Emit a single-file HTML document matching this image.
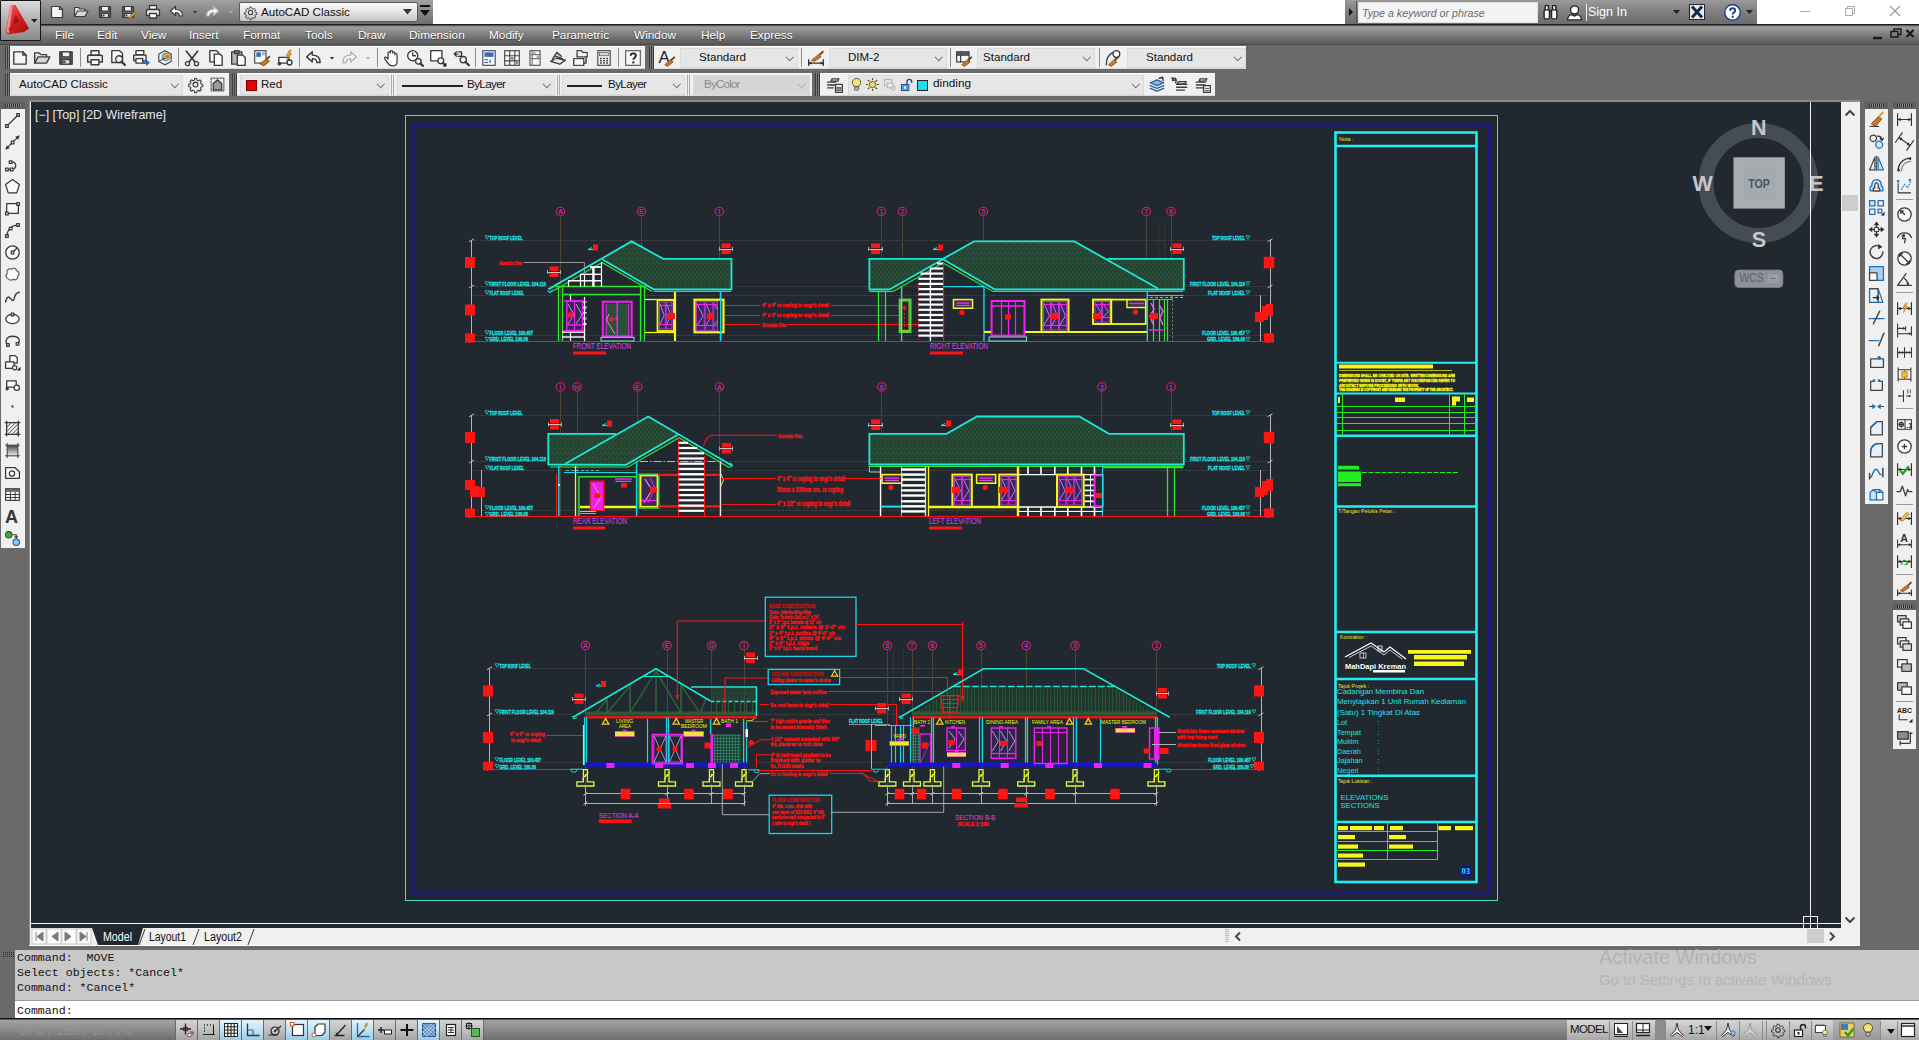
<!DOCTYPE html>
<html><head><meta charset="utf-8"><title>AutoCAD Classic</title>
<style>
*{box-sizing:border-box;margin:0;padding:0}
html,body{width:1919px;height:1040px;overflow:hidden;background:#6a6a6a;font-family:"Liberation Sans",sans-serif;font-size:12px;color:#111}
.abs{position:absolute}
#titleL{left:0;top:0;width:433px;height:24px;background:linear-gradient(#a2a2a2,#8a8a8a 45%,#6f6f6f)}
#titleW{left:433px;top:0;width:912px;height:24px;background:#fff}
#titleS{left:1345px;top:0;width:412px;height:24px;background:linear-gradient(#9a9a9a,#7e7e7e 50%,#6c6c6c)}
#titleR{left:1757px;top:0;width:162px;height:24px;background:#fff}
#menubar{left:0;top:24px;width:1919px;height:21px;background:linear-gradient(#1c1c1c 0,#1c1c1c 1px,#8c8c8c 2px,#9c9c9c 4px,#858585 9px,#6c6c6c 15px,#5a5a5a 20px);border-bottom:1px solid #4c4c4c}
#menubar span{position:absolute;top:4px;color:#fff;font-size:11.8px;text-shadow:0 1px 1px #333;white-space:nowrap}
#appbtn{left:0;top:0;width:41px;height:41px;background:linear-gradient(#dcdcdc,#b4b4b4 45%,#8a8a8a);border:1.5px solid #161616;border-radius:1px}
#dock{left:0;top:45px;width:1919px;height:57px;background:#6a6a6a}
.tb{position:absolute;height:23px;background:#f0f0f0;border-top:1px solid #fafafa;border-bottom:1px solid #d8d8d8}
.grip{position:absolute;top:-1px;left:-5px;width:5px;height:23px;background:#5c5c5c repeating-linear-gradient(90deg,#3c3c3c 0,#3c3c3c 1px,#7c7c7c 1px,#7c7c7c 2px)}
.combo{position:absolute;top:1px;height:20px;background:#e6e6e6;border:1px solid #dadada;font-size:11.6px;line-height:15px;white-space:nowrap;color:#111}
.combo i.chev{position:absolute;right:5px;top:4.5px;width:5.5px;height:5.5px;border-right:1.6px solid #666;border-bottom:1.6px solid #666;transform:rotate(45deg)}
.vsep{position:absolute;top:2px;width:1px;height:18px;background:#8a8a8a}
.ic{position:absolute;width:16px;height:16px;overflow:visible}
#drawwrap{left:29px;top:100px;width:1831px;height:846px;background:#f0f0f0;border-left:1px solid #8c8c8c;border-top:2px solid #8c8c8c}
#draw{left:31px;top:102px;width:1810px;height:826px;background:#222830;overflow:hidden}
#vscroll{left:1841px;top:102px;width:18px;height:826px;background:#f0f0f0}
#tabs{left:31px;top:928px;width:1828px;height:17px;background:#f0f0f0}
#cmdhist{left:15px;top:950px;width:1904px;height:50px;background:#c8c8c8}
#cmdline{left:15px;top:1000px;width:1904px;height:18px;background:#fff;border-top:1px solid #9a9a9a}
.mono{font-family:"Liberation Mono",monospace;font-size:11.6px;color:#111;white-space:pre;position:absolute;left:2px}
#status{left:0;top:1018px;width:1919px;height:22px;background:linear-gradient(#111 0,#111 1px,#a2a2a2 2px,#8c8c8c 50%,#6e6e6e 100%)}
#statusR{left:1567px;top:1020px;width:352px;height:20px;background:linear-gradient(#d6d6d6,#bcbcbc 60%,#a8a8a8)}
.sbtn{position:absolute;top:1020px;width:22px;height:20px;border-left:1px solid #6a6a6a;background:linear-gradient(#d4d4d4,#bdbdbd 55%,#a6a6a6)}
.sbtn.on{background:linear-gradient(#e4f3fb,#bfe0f1 55%,#9dcbe3)}
.ltb{position:absolute;background:#f0f0f0}
.hgrip{position:absolute;left:0;top:0;width:100%;height:7px;background:#5f5f5f}
.hgrip:after{content:"";position:absolute;left:4px;right:4px;top:2px;height:3px;background:repeating-linear-gradient(90deg,#2a2a2a 0,#2a2a2a 1px,#8a8a8a 1px,#8a8a8a 2px)}
</style></head><body>
<div class="abs" id="titleL"></div><div class="abs" id="titleW"></div><div class="abs" id="titleS"></div><div class="abs" id="titleR"></div>
<div class="abs" id="menubar">
<span style="left:55px">File</span>
<span style="left:97px">Edit</span>
<span style="left:141px">View</span>
<span style="left:189px">Insert</span>
<span style="left:243px">Format</span>
<span style="left:305px">Tools</span>
<span style="left:358px">Draw</span>
<span style="left:409px">Dimension</span>
<span style="left:489px">Modify</span>
<span style="left:552px">Parametric</span>
<span style="left:634px">Window</span>
<span style="left:701px">Help</span>
<span style="left:750px">Express</span>
</div>
<svg class="abs" style="left:1868px;top:26px" width="50" height="16" viewBox="0 0 50 16"><path d="M5 12h9" stroke="#1a1a1a" stroke-width="2.400"/><path d="M24 5.500h6v5.500h-7v-5.500zM26 5.500v-2.500h7v5.500h-3" fill="none" stroke="#1a1a1a" stroke-width="1.500"/><path d="M38.500 4l7 7M45.500 4l-7 7" stroke="#1a1a1a" stroke-width="2.300"/></svg>
<div class="abs" id="appbtn"></div>
<svg class="abs" style="left:1px;top:1px" width="40" height="40" viewBox="0 0 40 40"><defs><linearGradient id="ared" x1="0" y1="0" x2="1" y2="1"><stop offset="0" stop-color="#f46a6a"/><stop offset=".45" stop-color="#e02222"/><stop offset="1" stop-color="#9a0c0c"/></linearGradient></defs><path d="M9 4l5.500 0 13.500 23.500-5 3.500-16.500 2.500-1.500-2.500z" fill="url(#ared)"/><path d="M9 4l2.500 0-3.500 28.500-2.500-1.500z" fill="#f7a0a0" opacity=".85"/><path d="M14.500 13.500l3.500 7-6.500 4z" fill="#8a1010" opacity=".75"/><path d="M8 26l16-3.500 1.500 3-18 4z" fill="#c01818" opacity=".7"/><path d="M30 18h6.500l-3.200 3.800z" fill="#222"/></svg>
<svg class="ic" style="left:49.0px;top:3.5px;width:16px;height:16px" viewBox="0 0 16 16" ><g fill="none" stroke="#3a3a3a" stroke-width="1.2" stroke-linejoin="round" stroke-linecap="round"><path d="M2.5 2.5h8l3 3v8h-11z" fill="#f4f4f8"/><path d="M10.5 2.5v3h3"/></g></svg>
<svg class="ic" style="left:73.0px;top:3.5px;width:16px;height:16px" viewBox="0 0 16 16" ><g fill="none" stroke="#3a3a3a" stroke-width="1.2" stroke-linejoin="round" stroke-linecap="round"><path d="M1.5 12.5v-9h4l1.5 1.5h5v2" fill="#e8e8ee"/><path d="M1.5 12.5l3-5.5h10.5l-3 5.5z" fill="#d4d6e0"/></g></svg>
<svg class="ic" style="left:97.0px;top:3.5px;width:16px;height:16px" viewBox="0 0 16 16" ><g fill="none" stroke="#3a3a3a" stroke-width="1.2" stroke-linejoin="round" stroke-linecap="round"><path d="M2.5 2.5h11v11h-11z" fill="#5b6172"/><rect x="4.5" y="2.5" width="7" height="4.5" fill="#f2f2f2"/><rect x="4.5" y="9.5" width="7" height="4" fill="#e0e0e6"/><rect x="5.5" y="10.5" width="2" height="2" fill="#444" stroke="none"/></g></svg>
<svg class="ic" style="left:120.0px;top:3.5px;width:16px;height:16px" viewBox="0 0 16 16" ><g fill="none" stroke="#3a3a3a" stroke-width="1.2" stroke-linejoin="round" stroke-linecap="round"><path d="M2.5 2.5h11v11h-11z" fill="#5b6172"/><rect x="4.5" y="2.5" width="7" height="4.5" fill="#f2f2f2"/><rect x="4.5" y="9.5" width="7" height="4" fill="#e0e0e6"/><rect x="5.5" y="10.5" width="2" height="2" fill="#444" stroke="none"/></g><path d="M9 13l5-5 1.5 1.5-5 5-2 .5z" fill="#e8a030" stroke="#7a4a10" stroke-width=".7"/></svg>
<svg class="ic" style="left:145.0px;top:3.5px;width:16px;height:16px" viewBox="0 0 16 16" ><g fill="none" stroke="#3a3a3a" stroke-width="1.3" stroke-linejoin="round" stroke-linecap="round"><rect x="4.5" y="1.5" width="7" height="4" fill="#fff"/><path d="M2.5 5.5h11a1 1 0 0 1 1 1v5h-13v-5a1 1 0 0 1 1-1z" fill="#ececf0"/><rect x="4.5" y="9.5" width="7" height="4.500" fill="#fff"/></g></svg>
<svg class="ic" style="left:169.0px;top:3.5px;width:16px;height:16px" viewBox="0 0 16 16" ><g fill="none" stroke="#3a3a3a" stroke-width="1.2" stroke-linejoin="round" stroke-linecap="round"><path d="M1.500 7l5-4.500v3c4 0 7 1.500 7 6.500h-3c0-2.500-1.500-3.500-4-3.500v3z" fill="#f6f6f6"/></g></svg>
<svg class="ic" style="left:189.0px;top:5.5px;width:12px;height:12px" viewBox="0 0 16 16" ><path d="M5 6.500h6l-3 3.500z" fill="#333"/></svg>
<svg class="ic" style="left:204.0px;top:3.5px;width:16px;height:16px" viewBox="0 0 16 16" ><g fill="none" stroke="#b4b4b4" stroke-width="1.2" stroke-linejoin="round" stroke-linecap="round"><path d="M14.500 7l-5-4.500v3c-4 0-7 1.500-7 6.500h3c0-2.500 1.500-3.500 4-3.500v3z" fill="#f4f4f4"/></g></svg>
<svg class="ic" style="left:225.0px;top:5.5px;width:12px;height:12px" viewBox="0 0 16 16" ><path d="M5 6.500h6l-3 3.500z" fill="#b0b0b0"/></svg>
<div class="abs" style="left:239px;top:2px;width:179px;height:20px;border:1px solid #5a5a5a;border-radius:2px;background:linear-gradient(#fafafa,#e4e4e4 50%,#c4c4c4);font-size:11.600px;line-height:18px;padding-left:21px;color:#111">AutoCAD Classic<svg class="abs" style="right:5px;top:6px" width="9" height="6"><path d="M0 0h9l-4.500 5.500z" fill="#333"/></svg></div>
<svg class="ic" style="left:242.5px;top:4.5px;width:15px;height:15px" viewBox="0 0 16 16" ><g fill="none" stroke="#3a3a3a" stroke-width="1.1" stroke-linejoin="round" stroke-linecap="round"><circle cx="8" cy="8" r="2.300"/><path d="M8 1.500l1.200.2.500 1.800 1.300.6 1.600-.9 1.500 1.500-.9 1.600.6 1.300 1.800.5v2l-1.800.5-.6 1.300.9 1.600-1.500 1.500-1.600-.9-1.300.6-.5 1.800h-2l-.5-1.800-1.300-.6-1.600.9-1.500-1.500.9-1.600-.6-1.300-1.800-.5v-2l1.800-.5.600-1.300-.9-1.600 1.500-1.500 1.600.9 1.300-.6.500-1.800z" transform="translate(.8 .8) scale(.9)"/></g></svg>
<svg class="abs" style="left:420px;top:5px" width="10" height="12"><path d="M0 1h10" stroke="#111" stroke-width="2"/><path d="M0 5h10l-5 6z" fill="#111"/></svg>
<div class="abs" style="left:1345px;top:1px;width:12px;height:22px;border-right:1px solid #555"><svg width="12" height="22"><path d="M4 7l4 4-4 4z" fill="#111"/></svg></div>
<div class="abs" style="left:1358px;top:2px;width:180px;height:21px;background:#f4f4f4;border:1px solid #e0e0e0;font-style:italic;font-size:10.700px;color:#6a6a6a;line-height:20px;padding-left:3px">Type a keyword or phrase</div>
<svg class="ic" style="left:1541.5px;top:3.5px;width:17px;height:17px" viewBox="0 0 16 16" ><g fill="none" stroke="#222" stroke-width="1.3" stroke-linejoin="round" stroke-linecap="round"><rect x="2" y="5" width="5" height="9" rx="1.500" fill="#fff"/><rect x="9" y="5" width="5" height="9" rx="1.500" fill="#fff"/><rect x="3" y="1.500" width="3" height="4" fill="#fff"/><rect x="10" y="1.500" width="3" height="4" fill="#fff"/><path d="M7 7h2"/></g></svg>
<svg class="ic" style="left:1565.5px;top:3.5px;width:17px;height:17px" viewBox="0 0 16 16" ><g fill="none" stroke="#222" stroke-width="1.2" stroke-linejoin="round" stroke-linecap="round"><circle cx="8" cy="5.500" r="3.800" fill="#fff"/><path d="M1.500 15c0-3.500 2.500-5 4.500-5l2 1.500 2-1.500c2 0 4.500 1.500 4.500 5z" fill="#fff"/></g></svg>
<div class="abs" style="left:1586px;top:4px;height:17px;border-left:1px solid #eee;padding-left:1px;color:#fff;font-size:12.500px;line-height:17px">Sign In</div>
<svg class="abs" style="left:1673px;top:10px" width="8" height="5"><path d="M0 0h7l-3.500 4z" fill="#222"/></svg>
<svg class="ic" style="left:1689.0px;top:4.0px;width:16px;height:16px" viewBox="0 0 16 16" ><rect x="0.500" y="0.500" width="15" height="15" fill="#e8ecf0" stroke="#223"/><path d="M3 2.500l10 11M13 2.500l-10 11" stroke="#1a2a4a" stroke-width="3"/></svg>
<svg class="ic" style="left:1723.5px;top:3.5px;width:17px;height:17px" viewBox="0 0 16 16" ><circle cx="8" cy="8" r="7.300" fill="#fff" stroke="#23408a" stroke-width="1.400"/><path d="M5.700 6.300c0-3 4.800-3 4.800 0 0 1.700-2.300 1.800-2.300 3.500" fill="none" stroke="#23408a" stroke-width="1.900"/><rect x="7.200" y="11" width="2" height="2" fill="#23408a"/></svg>
<svg class="abs" style="left:1746px;top:10px" width="8" height="5"><path d="M0 0h7l-3.500 4z" fill="#222"/></svg>
<svg class="abs" style="left:1757px;top:0" width="162" height="24"><path d="M43 11.500h10" stroke="#aaa"/><path d="M88.500 8.500h7v7h-7zM90.500 8.500v-2h7v7h-2" fill="none" stroke="#aaa"/><path d="M133 6l10 10M143 6l-10 10" stroke="#999" stroke-width="1.100"/></svg>
<div class="abs" id="dock"></div>
<div class="tb" style="left:10px;top:46px;width:635px"><div class="grip" style="left:-5px"></div></div>
<svg class="ic" style="left:11.0px;top:48.5px;width:18px;height:18px" viewBox="0 0 16 16" ><g fill="none" stroke="#3a3a3a" stroke-width="1.2" stroke-linejoin="round" stroke-linecap="round"><path d="M2.5 2.5h8l3 3v8h-11z" fill="#f4f4f8"/><path d="M10.5 2.5v3h3"/></g></svg>
<svg class="ic" style="left:33.0px;top:48.5px;width:18px;height:18px" viewBox="0 0 16 16" ><g fill="none" stroke="#3a3a3a" stroke-width="1.2" stroke-linejoin="round" stroke-linecap="round"><path d="M1.5 12.5v-9h4l1.5 1.5h5v2" fill="#e8e8ee"/><path d="M1.5 12.5l3-5.5h10.5l-3 5.5z" fill="#d4d6e0"/></g></svg>
<svg class="ic" style="left:57.0px;top:48.5px;width:18px;height:18px" viewBox="0 0 16 16" ><g fill="none" stroke="#3a3a3a" stroke-width="1.2" stroke-linejoin="round" stroke-linecap="round"><path d="M2.5 2.5h11v11h-11z" fill="#5b6172"/><rect x="4.5" y="2.5" width="7" height="4.5" fill="#f2f2f2"/><rect x="4.5" y="9.5" width="7" height="4" fill="#e0e0e6"/><rect x="5.5" y="10.5" width="2" height="2" fill="#444" stroke="none"/></g></svg>
<svg class="ic" style="left:86.0px;top:48.5px;width:18px;height:18px" viewBox="0 0 16 16" ><g fill="none" stroke="#3a3a3a" stroke-width="1.3" stroke-linejoin="round" stroke-linecap="round"><rect x="4.5" y="1.5" width="7" height="4" fill="#fff"/><path d="M2.5 5.5h11a1 1 0 0 1 1 1v5h-13v-5a1 1 0 0 1 1-1z" fill="#ececf0"/><rect x="4.5" y="9.5" width="7" height="4.500" fill="#fff"/></g></svg>
<svg class="ic" style="left:109.0px;top:48.5px;width:18px;height:18px" viewBox="0 0 16 16" ><g fill="none" stroke="#3a3a3a" stroke-width="1.2" stroke-linejoin="round" stroke-linecap="round"><path d="M2.5 1.500h7l2.500 2.500v8h-9.500z" fill="#fafafa"/><circle cx="9" cy="9" r="3" fill="#f0f4f8"/><path d="M11.200 11.200l3 3" stroke-width="2"/></g></svg>
<svg class="ic" style="left:132.0px;top:48.5px;width:18px;height:18px" viewBox="0 0 16 16" ><g fill="none" stroke="#3a3a3a" stroke-width="1.2" stroke-linejoin="round" stroke-linecap="round"><rect x="3.500" y="1.500" width="7" height="3.500" fill="#fff"/><path d="M1.500 5.500h11v5h-11z" fill="#ececf0"/><rect x="3.500" y="8.500" width="6" height="4" fill="#fff"/></g><path d="M9 11h3.500v-2l3.500 3.200-3.500 3.200v-2h-3.500z" fill="#1f6fc8"/></svg>
<svg class="ic" style="left:156.0px;top:48.5px;width:18px;height:18px" viewBox="0 0 16 16" ><path d="M8 1.500l5.500 3v6.500l-5.500 3-5.500-3v-6.500z" fill="#f4f4f4" stroke="#444" stroke-width="1"/><circle cx="9" cy="7" r="4" fill="#4aa3df"/><circle cx="9.500" cy="7" r="2.800" fill="#e8c020"/><circle cx="10" cy="7" r="1.700" fill="#e86a20"/><path d="M2.500 11l5.500-3" stroke="#444" fill="none"/></svg>
<svg class="ic" style="left:183.0px;top:48.5px;width:18px;height:18px" viewBox="0 0 16 16" ><g fill="none" stroke="#3a3a3a" stroke-width="1.2" stroke-linejoin="round" stroke-linecap="round"><path d="M3 2l8 10M13 2l-8 10" stroke-width="1.500"/><circle cx="4" cy="13" r="1.800" fill="#fff"/><circle cx="12" cy="13" r="1.800" fill="#fff"/></g></svg>
<svg class="ic" style="left:207.0px;top:48.5px;width:18px;height:18px" viewBox="0 0 16 16" ><g fill="none" stroke="#3a3a3a" stroke-width="1.2" stroke-linejoin="round" stroke-linecap="round"><path d="M2.500 1.500h6l2 2v8h-8z" fill="#f4f4f4"/><path d="M6.500 4.500h5l2 2v8h-7z" fill="#fafafa"/></g></svg>
<svg class="ic" style="left:230.0px;top:48.5px;width:18px;height:18px" viewBox="0 0 16 16" ><g fill="none" stroke="#3a3a3a" stroke-width="1.2" stroke-linejoin="round" stroke-linecap="round"><rect x="1.500" y="2.500" width="9" height="11" fill="#b8b8b0"/><rect x="4" y="1.500" width="4" height="2.500" fill="#888"/><path d="M6.500 5.500h5l2 2v7h-7z" fill="#fafafa"/></g></svg>
<svg class="ic" style="left:253.0px;top:48.5px;width:18px;height:18px" viewBox="0 0 16 16" ><rect x="1.500" y="1.500" width="10" height="11" fill="#f8f8f8" stroke="#444"/><rect x="3" y="3" width="4" height="4" fill="#2f6fb8"/><rect x="8" y="3" width="2.500" height="2.500" fill="#8ab0d8"/><path d="M6 13l6-4 2.500 2-5 4z" fill="#c87828" stroke="#6a3a10" stroke-width=".7"/><path d="M12 9l3-2.500" stroke="#6a3a10" stroke-width="1.600"/></svg>
<svg class="ic" style="left:276.0px;top:48.5px;width:18px;height:18px" viewBox="0 0 16 16" ><g fill="none" stroke="#3a3a3a" stroke-width="1.2" stroke-linejoin="round" stroke-linecap="round"><rect x="2.500" y="7.500" width="9" height="5" fill="#f8f8f8"/><circle cx="12" cy="12" r="2.200" fill="#fff"/><circle cx="3" cy="13" r="1" fill="#444"/></g><path d="M12 1l-3 5h2l-1.500 4 4.500-6h-2l1.500-3z" fill="#f0a020" stroke="#a06010" stroke-width=".5"/></svg>
<svg class="ic" style="left:305.0px;top:48.5px;width:18px;height:18px" viewBox="0 0 16 16" ><g fill="none" stroke="#3a3a3a" stroke-width="1.2" stroke-linejoin="round" stroke-linecap="round"><path d="M1.500 7l5-4.500v3c4 0 7 1.500 7 6.500h-3c0-2.500-1.500-3.500-4-3.500v3z" fill="#f6f6f6"/></g></svg>
<svg class="ic" style="left:326.0px;top:51.5px;width:12px;height:12px" viewBox="0 0 16 16" ><path d="M5 6.500h6l-3 3.500z" fill="#333"/></svg>
<svg class="ic" style="left:340.0px;top:48.5px;width:18px;height:18px" viewBox="0 0 16 16" ><g fill="none" stroke="#b4b4b4" stroke-width="1.2" stroke-linejoin="round" stroke-linecap="round"><path d="M14.500 7l-5-4.500v3c-4 0-7 1.500-7 6.500h3c0-2.500 1.500-3.500 4-3.500v3z" fill="#f4f4f4"/></g></svg>
<svg class="ic" style="left:362.0px;top:51.5px;width:12px;height:12px" viewBox="0 0 16 16" ><path d="M5 6.500h6l-3 3.500z" fill="#b0b0b0"/></svg>
<svg class="ic" style="left:383.0px;top:48.5px;width:18px;height:18px" viewBox="0 0 16 16" ><g fill="none" stroke="#3a3a3a" stroke-width="1.1" stroke-linejoin="round" stroke-linecap="round"><path d="M4.500 9v-5.500a1 1 0 0 1 2 0v-1a1 1 0 0 1 2 0v1a1 1 0 0 1 2 0v1.500a1 1 0 0 1 2 0v6c0 2.500-1.500 4-4 4s-3.500-1-5-3.500l-2-3c-.5-1 1-1.800 1.800-.8z" fill="#fff"/></g></svg>
<svg class="ic" style="left:406.0px;top:48.5px;width:18px;height:18px" viewBox="0 0 16 16" ><g fill="none" stroke="#3a3a3a" stroke-width="1.2" stroke-linejoin="round" stroke-linecap="round"><circle cx="6" cy="6" r="4.500" fill="#fff"/><path d="M6 3.500v2.500h2.500"/><circle cx="11" cy="11" r="2.500" fill="#f0f4f8"/><path d="M13 13l2 2" stroke-width="2"/></g></svg>
<svg class="ic" style="left:429.0px;top:48.5px;width:18px;height:18px" viewBox="0 0 16 16" ><g fill="none" stroke="#3a3a3a" stroke-width="1.2" stroke-linejoin="round" stroke-linecap="round"><rect x="1.500" y="1.500" width="10" height="9" fill="#fff"/><circle cx="10.500" cy="10.500" r="2.600" fill="#f0f4f8"/><path d="M12.500 12.500l2 2" stroke-width="2"/></g><path d="M15.500 12v3.500h-3.500z" fill="#222"/></svg>
<svg class="ic" style="left:452.0px;top:48.5px;width:18px;height:18px" viewBox="0 0 16 16" ><g fill="none" stroke="#3a3a3a" stroke-width="1.2" stroke-linejoin="round" stroke-linecap="round"><circle cx="10" cy="9.500" r="2.800" fill="#f0f4f8"/><path d="M12 11.500l3 3" stroke-width="2"/><path d="M7 4.500h-5M4 2.500l-2 2 2 2" /><path d="M5.500 2.500h3v4h-3" fill="#dde"/></g></svg>
<svg class="ic" style="left:480.0px;top:48.5px;width:18px;height:18px" viewBox="0 0 16 16" ><rect x="2.500" y="1.500" width="11" height="13" fill="#f4f6fa" stroke="#3a4a6a"/><rect x="4" y="3" width="8" height="4" fill="#3a6ab0"/><path d="M4 9.500h3M4 12h3M9 9.500v3" stroke="#3a4a6a"/></svg>
<svg class="ic" style="left:503.0px;top:48.5px;width:18px;height:18px" viewBox="0 0 16 16" ><rect x="1.500" y="1.500" width="13" height="13" fill="#f8f8f8" stroke="#444"/><path d="M6 1.500v13M10.500 1.500v13M1.500 6h13M1.500 10.500h13" stroke="#444"/><rect x="7" y="7" width="2.500" height="2.500" fill="#888"/><rect x="11.500" y="11.500" width="2" height="2" fill="#888"/></svg>
<svg class="ic" style="left:526.0px;top:48.5px;width:18px;height:18px" viewBox="0 0 16 16" ><rect x="3.500" y="1.500" width="9" height="13" fill="#f8f8f8" stroke="#555"/><path d="M5.500 1.500v13M3.500 5h9M3.500 8.500h9" stroke="#777"/><rect x="6.500" y="2.500" width="2" height="2" fill="#9ab"/><rect x="9.500" y="6" width="2" height="2" fill="#9ab"/></svg>
<svg class="ic" style="left:549.0px;top:48.5px;width:18px;height:18px" viewBox="0 0 16 16" ><g fill="none" stroke="#3a3a3a" stroke-width="1.2" stroke-linejoin="round" stroke-linecap="round"><path d="M1.500 11l5-3 8 2-5 3.500z" fill="#e8e8e8"/><path d="M3 9l4-6 4 3.500" fill="#d0d0d0"/><path d="M6 6.500l6 2"/></g></svg>
<svg class="ic" style="left:572.0px;top:48.5px;width:18px;height:18px" viewBox="0 0 16 16" ><g fill="none" stroke="#3a3a3a" stroke-width="1.2" stroke-linejoin="round" stroke-linecap="round"><path d="M4.500 1.500h4l1 1.500h4v4h-9z" fill="#f0f0f0" stroke-dasharray="1.500 1"/><path d="M1.500 8.500h9v6h-9z" fill="#fafafa" stroke-dasharray="1.500 1"/><path d="M12.500 7.500v5h-2" /></g></svg>
<svg class="ic" style="left:595.0px;top:48.5px;width:18px;height:18px" viewBox="0 0 16 16" ><rect x="2.500" y="1.500" width="11" height="13" fill="#f4f4f4" stroke="#444"/><rect x="4" y="3" width="8" height="3" fill="#cfd8e0" stroke="#555" stroke-width=".6"/><path d="M4.500 8.500h1.500M7.300 8.500h1.500M10 8.500h1.500M4.500 10.500h1.500M7.300 10.500h1.500M10 10.500h1.500M4.500 12.500h1.500M7.300 12.500h1.500M10 12.500h1.500" stroke="#333" stroke-width="1.300"/></svg>
<svg class="ic" style="left:624.0px;top:48.5px;width:18px;height:18px" viewBox="0 0 16 16" ><rect x="1.500" y="1.500" width="13" height="13" fill="#f8f8f8" stroke="#555"/><path d="M6 6c0-2.800 4.500-2.800 4.500 0 0 1.700-2.200 1.700-2.200 3.600" fill="none" stroke="#222" stroke-width="1.700"/><rect x="7.400" y="11" width="1.800" height="1.800" fill="#222"/></svg>
<div class="vsep" style="left:80px;top:48px;height:19px"></div>
<div class="vsep" style="left:178px;top:48px;height:19px"></div>
<div class="vsep" style="left:299px;top:48px;height:19px"></div>
<div class="vsep" style="left:377px;top:48px;height:19px"></div>
<div class="vsep" style="left:475px;top:48px;height:19px"></div>
<div class="vsep" style="left:618px;top:48px;height:19px"></div>
<div class="tb" style="left:654px;top:46px;width:592px"><div class="grip" style="left:-5px"></div>
<div class="combo" style="left:26px;width:118px;padding-left:18px">Standard<i class="chev"></i></div>
<div class="combo" style="left:175px;width:118px;padding-left:18px">DIM-2<i class="chev"></i></div>
<div class="combo" style="left:323px;width:118px;padding-left:5px">Standard<i class="chev"></i></div>
<div class="combo" style="left:473px;width:119px;padding-left:18px">Standard<i class="chev"></i></div>
</div>
<svg class="ic" style="left:658.0px;top:48.5px;width:18px;height:18px" viewBox="0 0 16 16" ><text x="0.500" y="12.500" font-family="Liberation Sans,sans-serif" font-size="15" fill="#222">A</text><path d="M6 14l5-4.500 2.500 2-5 4z" fill="#c87828" stroke="#6a3a10" stroke-width=".6"/><path d="M11.500 10l3.500-3" stroke="#6a3a10" stroke-width="1.600"/></svg>
<svg class="ic" style="left:807.0px;top:48.5px;width:18px;height:18px" viewBox="0 0 16 16" ><path d="M1.500 9v6M14.500 9v6M1.500 12.500h13" stroke="#333" stroke-width="1.200" fill="none"/><path d="M1.500 12.500l2.500-1.500v3zM14.500 12.500l-2.500-1.500v3z" fill="#333"/><path d="M4 10l6-5 2.500 2-6 4z" fill="#c87828" stroke="#6a3a10" stroke-width=".6"/><path d="M11 5.500l3.500-3.500" stroke="#6a3a10" stroke-width="1.600"/></svg>
<svg class="ic" style="left:955.0px;top:48.5px;width:18px;height:18px" viewBox="0 0 16 16" ><rect x="1.500" y="2.500" width="11" height="9" fill="#f8f8f8" stroke="#333"/><path d="M1.500 5.500h11M5 2.500v9" stroke="#333"/><rect x="1.500" y="2.500" width="11" height="3" fill="#555"/><path d="M6 14l5-4.500 2.500 2-5 4z" fill="#c87828" stroke="#6a3a10" stroke-width=".6"/><path d="M11.500 10l3.500-3" stroke="#6a3a10" stroke-width="1.600"/></svg>
<svg class="ic" style="left:1104.0px;top:48.5px;width:18px;height:18px" viewBox="0 0 16 16" ><g fill="none" stroke="#3a3a3a" stroke-width="1.2" stroke-linejoin="round" stroke-linecap="round"><path d="M2 14c0-5 2-9 6-11"/><circle cx="11" cy="4.500" r="3" fill="#fff"/></g><path d="M4 14l5-4.500 2.500 2-5 4z" fill="#c87828" stroke="#6a3a10" stroke-width=".6"/><path d="M9.500 10l3.500-3" stroke="#6a3a10" stroke-width="1.600"/></svg>
<div class="vsep" style="left:801px;top:48px;height:19px"></div>
<div class="vsep" style="left:950px;top:48px;height:19px"></div>
<div class="vsep" style="left:1099px;top:48px;height:19px"></div>
<div class="tb" style="left:10px;top:73px;width:219px"><div class="grip" style="left:-5px"></div><div class="combo" style="left:1px;width:172px;padding-left:7px;font-size:11.600px">AutoCAD Classic<i class="chev"></i></div></div>
<svg class="ic" style="left:186.5px;top:76.0px;width:17px;height:17px" viewBox="0 0 16 16" ><g fill="none" stroke="#3a3a3a" stroke-width="1.1" stroke-linejoin="round" stroke-linecap="round"><circle cx="8" cy="8" r="2.300"/><path d="M8 1.500l1.200.2.500 1.800 1.300.6 1.600-.9 1.500 1.500-.9 1.600.6 1.300 1.800.5v2l-1.800.5-.6 1.300.9 1.600-1.500 1.500-1.600-.9-1.300.6-.5 1.800h-2l-.5-1.800-1.300-.6-1.600.9-1.500-1.500.9-1.600-.6-1.300-1.800-.5v-2l1.800-.5.600-1.300-.9-1.600 1.500-1.500 1.600.9 1.300-.6.500-1.800z" transform="translate(.8 .8) scale(.9)"/></g></svg>
<svg class="ic" style="left:208.5px;top:76.0px;width:17px;height:17px" viewBox="0 0 16 16" ><g fill="none" stroke="#3a3a3a" stroke-width="1.2" stroke-linejoin="round" stroke-linecap="round"><rect x="2" y="2" width="12" height="12" stroke-dasharray="1 1.200" stroke="#666"/><path d="M4 13v-6l4-3.500 4 3.500v6z" fill="#9a9aa0"/></g></svg>
<div class="tb" style="left:237px;top:73px;width:575px"><div class="grip" style="left:-5px"></div>
<div class="combo" style="left:3px;width:149px;padding-left:20px"><span class="abs" style="left:5px;top:4px;width:11px;height:11px;background:#e60000;border:1px solid #7a0000"></span>Red<i class="chev"></i></div>
<div class="combo" style="left:160px;width:158px;padding-left:69px;letter-spacing:-.6px"><span class="abs" style="left:4px;top:9px;width:61px;height:1.500px;background:#222"></span>ByLayer<i class="chev"></i></div>
<div class="combo" style="left:325px;width:123px;padding-left:45px;letter-spacing:-.6px"><span class="abs" style="left:4px;top:9px;width:35px;height:1.500px;background:#222"></span>ByLayer<i class="chev"></i></div>
<div class="combo" style="left:456px;width:117px;padding-left:10px;letter-spacing:-.8px;color:#8a8a8a;background:#d6d6d6">ByColor<i class="chev" style="border-color:#aaa"></i></div>
<div class="vsep" style="left:154px;top:1px;height:20px;background:#aaa"></div>
<div class="vsep" style="left:156px;top:1px;height:20px;background:#aaa"></div>
<div class="vsep" style="left:320px;top:1px;height:20px;background:#aaa"></div>
<div class="vsep" style="left:322px;top:1px;height:20px;background:#aaa"></div>
<div class="vsep" style="left:450px;top:1px;height:20px;background:#aaa"></div>
<div class="vsep" style="left:452px;top:1px;height:20px;background:#aaa"></div>
</div>
<div class="tb" style="left:820px;top:73px;width:395px"><div class="grip" style="left:-5px"></div>
<div class="combo" style="left:28px;width:296px;padding-left:84px;font-size:11.800px"><span class="abs" style="left:68px;top:4px;width:11px;height:11px;background:#19e0e6;border:1px solid #222"></span>dinding<i class="chev"></i></div></div>
<svg class="ic" style="left:826.0px;top:75.5px;width:18px;height:18px" viewBox="0 0 16 16" ><g fill="none" stroke="#3a3a3a" stroke-width="1.2" stroke-linejoin="round" stroke-linecap="round"><path d="M1.500 5.500h7M1.500 8h7M1.500 10.500h5"/><path d="M5.500 2.500h6l-1 2h-6z" fill="#e8e8e8"/><rect x="8.500" y="7.500" width="6" height="7" fill="#fafafa"/><rect x="10" y="10" width="3" height="3" fill="#5a8ac0" stroke-width=".6"/></g></svg>
<svg class="ic" style="left:848.5px;top:77.0px;width:15px;height:15px" viewBox="0 0 16 16" ><path d="M8 1.500c-2.800 0-4.500 2-4.500 4.300 0 1.700 1.200 2.700 1.900 4.200h5.200c.7-1.500 1.900-2.500 1.900-4.200 0-2.300-1.700-4.300-4.500-4.300z" fill="#f8e27a" stroke="#5a5020" stroke-width="1"/><rect x="5.800" y="10.500" width="4.400" height="3.500" rx=".8" fill="#bbb" stroke="#444" stroke-width=".8"/></svg>
<svg class="ic" style="left:864.5px;top:77.0px;width:15px;height:15px" viewBox="0 0 16 16" ><circle cx="8" cy="8" r="3.300" fill="#f8e27a" stroke="#5a5020" stroke-width="1"/><path d="M8 1v2.500M8 12.500v2.500M1 8h2.500M12.500 8h2.500M3 3l1.800 1.800M11.200 11.200l1.800 1.800M3 13l1.800-1.800M11.200 4.800l1.800-1.800" stroke="#5a5020" stroke-width="1.200"/></svg>
<svg class="ic" style="left:881.5px;top:77.0px;width:15px;height:15px" viewBox="0 0 16 16" ><rect x="2.500" y="2.500" width="8" height="7" fill="#e4e4e4" stroke="#b0b0b0"/><rect x="5.500" y="6.500" width="6" height="5" fill="#ececec" stroke="#b0b0b0"/><circle cx="12" cy="12" r="2.200" fill="#d8d8d8" stroke="#b0b0b0"/></svg>
<svg class="ic" style="left:898.5px;top:77.0px;width:15px;height:15px" viewBox="0 0 16 16" ><rect x="2.500" y="8" width="8" height="6.500" fill="#5a9ad8" stroke="#1f4f8a"/><path d="M8.500 8v-3a2.500 2.500 0 0 1 5 0v1.500" fill="none" stroke="#1f4f8a" stroke-width="1.500"/><rect x="5.500" y="10" width="2" height="2.500" fill="#fff"/></svg>
<svg class="ic" style="left:1148.0px;top:75.5px;width:18px;height:18px" viewBox="0 0 16 16" ><g fill="none" stroke="#3a3a3a" stroke-width="1.2" stroke-linejoin="round" stroke-linecap="round"><path d="M2 6l6-2.500 6 2.500-6 2.500z" fill="#8ab8e8" stroke="#2a5a9a"/><path d="M2 8.500l6 2.500 6-2.500M2 11l6 2.500 6-2.500" stroke="#2a5a9a"/><path d="M10 2l3-1 .5 3" stroke="#333"/></g></svg>
<svg class="ic" style="left:1171.0px;top:75.5px;width:18px;height:18px" viewBox="0 0 16 16" ><g fill="none" stroke="#3a3a3a" stroke-width="1.2" stroke-linejoin="round" stroke-linecap="round"><path d="M5 7.500h9M5 10h9M5 12.500h7"/><path d="M6.500 5h7l-1 2h-7z" fill="#e8e8e8"/><path d="M1.500 2.500c3-1.500 4 1 2.500 3.500M1 1.500l.5 2.500 2.500-.5" /></g></svg>
<svg class="ic" style="left:1194.0px;top:75.5px;width:18px;height:18px" viewBox="0 0 16 16" ><g fill="none" stroke="#3a3a3a" stroke-width="1.2" stroke-linejoin="round" stroke-linecap="round"><path d="M2 5.500h8M2 8h8M2 10.500h6"/><path d="M5.500 2.500h6l-1 2h-6z" fill="#e8e8e8"/><rect x="8.500" y="8.500" width="6" height="6" fill="#fafafa"/><path d="M10 11h3M10 13h3" stroke-width=".8"/></g></svg>
<div class="abs" id="drawwrap"></div>
<div class="ltb" style="left:1px;top:102px;width:24px;height:446px"><div class="hgrip"></div></div>
<svg class="ic" style="left:4.0px;top:111.5px;width:17px;height:17px" viewBox="0 0 16 16" ><g fill="none" stroke="#3a3a3a" stroke-width="1.2" stroke-linejoin="round" stroke-linecap="round"><path d="M3 13l10-10"/><rect x="1.500" y="12" width="2.500" height="2.500" fill="#fff"/><rect x="12" y="1.500" width="2.500" height="2.500" fill="#fff"/></g></svg>
<svg class="ic" style="left:4.0px;top:133.5px;width:17px;height:17px" viewBox="0 0 16 16" ><g fill="none" stroke="#3a3a3a" stroke-width="1.2" stroke-linejoin="round" stroke-linecap="round"><path d="M2 14l12-12"/><rect x="6.800" y="6.800" width="2.500" height="2.500" fill="#fff"/></g><path d="M14.500 1.500l-1 4-3-3zM1.500 14.500l1-4 3 3z" fill="#333"/></svg>
<svg class="ic" style="left:4.0px;top:155.5px;width:17px;height:17px" viewBox="0 0 16 16" ><g fill="none" stroke="#3a3a3a" stroke-width="1.2" stroke-linejoin="round" stroke-linecap="round"><path d="M3 12.500h5a3.500 3.500 0 1 0-1-7"/><rect x="1.500" y="11.500" width="2.500" height="2.500" fill="#fff"/><rect x="6" y="11.500" width="2.500" height="2.500" fill="#fff"/><rect x="5" y="4.500" width="2.500" height="2.500" fill="#fff"/></g></svg>
<svg class="ic" style="left:4.0px;top:177.5px;width:17px;height:17px" viewBox="0 0 16 16" ><g fill="none" stroke="#3a3a3a" stroke-width="1.2" stroke-linejoin="round" stroke-linecap="round"><path d="M8 1.500l6.500 4.700-2.500 7.800h-8l-2.500-7.800z" fill="#fafafa"/></g></svg>
<svg class="ic" style="left:4.0px;top:199.5px;width:17px;height:17px" viewBox="0 0 16 16" ><g fill="none" stroke="#3a3a3a" stroke-width="1.2" stroke-linejoin="round" stroke-linecap="round"><rect x="2.500" y="3.500" width="11" height="9" fill="#fafafa"/><rect x="1.500" y="11.500" width="2.500" height="2.500" fill="#fff"/><rect x="12" y="2.500" width="2.500" height="2.500" fill="#fff"/></g></svg>
<svg class="ic" style="left:4.0px;top:221.5px;width:17px;height:17px" viewBox="0 0 16 16" ><g fill="none" stroke="#3a3a3a" stroke-width="1.2" stroke-linejoin="round" stroke-linecap="round"><path d="M3 13c0-6 4-10 10-10"/><rect x="1.500" y="12" width="2.500" height="2.500" fill="#fff"/><rect x="12" y="1.500" width="2.500" height="2.500" fill="#fff"/><rect x="5" y="5" width="2.500" height="2.500" fill="#fff"/></g></svg>
<svg class="ic" style="left:4.0px;top:243.5px;width:17px;height:17px" viewBox="0 0 16 16" ><g fill="none" stroke="#3a3a3a" stroke-width="1.2" stroke-linejoin="round" stroke-linecap="round"><circle cx="8" cy="8" r="6.300" fill="#fafafa"/><path d="M8 8l4-4"/><rect x="6.800" y="6.800" width="2.400" height="2.400" fill="#fff"/></g></svg>
<svg class="ic" style="left:4.0px;top:265.5px;width:17px;height:17px" viewBox="0 0 16 16" ><g fill="none" stroke="#666" stroke-width="1.2" stroke-linejoin="round" stroke-linecap="round"><path d="M4 12a2.800 2.800 0 0 1-1-5 3 3 0 0 1 4-4 3 3 0 0 1 5 1.500 2.800 2.800 0 0 1 1 5 3 3 0 0 1-4.500 3 3 3 0 0 1-4.500-.5z" fill="#fafafa"/></g></svg>
<svg class="ic" style="left:4.0px;top:287.5px;width:17px;height:17px" viewBox="0 0 16 16" ><g fill="none" stroke="#3a3a3a" stroke-width="1.2" stroke-linejoin="round" stroke-linecap="round"><path d="M1.500 13c3-12 6 4 8-3 1-4 3-6 5-6" stroke-width="1.400"/></g></svg>
<svg class="ic" style="left:4.0px;top:309.5px;width:17px;height:17px" viewBox="0 0 16 16" ><g fill="none" stroke="#3a3a3a" stroke-width="1.2" stroke-linejoin="round" stroke-linecap="round"><ellipse cx="8" cy="8.500" rx="6.300" ry="4.300" fill="#fafafa"/><rect x="6.800" y="3" width="2.400" height="2.400" fill="#fff"/></g></svg>
<svg class="ic" style="left:4.0px;top:331.5px;width:17px;height:17px" viewBox="0 0 16 16" ><g fill="none" stroke="#3a3a3a" stroke-width="1.2" stroke-linejoin="round" stroke-linecap="round"><path d="M4 12c-4-2-2-8 4-8s8 4 5 7"/><rect x="2.500" y="11" width="2.400" height="2.400" fill="#fff"/><rect x="11.500" y="10" width="2.400" height="2.400" fill="#fff"/></g></svg>
<svg class="ic" style="left:4.0px;top:353.5px;width:17px;height:17px" viewBox="0 0 16 16" ><g fill="none" stroke="#3a3a3a" stroke-width="1.2" stroke-linejoin="round" stroke-linecap="round"><path d="M5.500 1.500h5l2 2v5h-7z" fill="#fafafa"/><rect x="1.500" y="7.500" width="8" height="6" fill="#fafafa"/><circle cx="10" cy="13" r="2" fill="#fff"/></g><path d="M15.500 12v3.500h-3.500z" fill="#222"/></svg>
<svg class="ic" style="left:4.0px;top:375.5px;width:17px;height:17px" viewBox="0 0 16 16" ><g fill="none" stroke="#3a3a3a" stroke-width="1.2" stroke-linejoin="round" stroke-linecap="round"><rect x="2.500" y="4.500" width="9" height="6" fill="#fafafa"/><circle cx="12" cy="11" r="2.500" fill="#fff"/><circle cx="3" cy="12" r="1" fill="#444"/></g></svg>
<svg class="ic" style="left:4.0px;top:397.5px;width:17px;height:17px" viewBox="0 0 16 16" ><rect x="7" y="7" width="2" height="2" fill="#444"/></svg>
<svg class="ic" style="left:4.0px;top:419.5px;width:17px;height:17px" viewBox="0 0 16 16" ><g fill="none" stroke="#3a3a3a" stroke-width="1.2" stroke-linejoin="round" stroke-linecap="round"><rect x="2.500" y="2.500" width="11" height="11"/><path d="M2.500 7l4.500-4.500M2.500 11l8.500-8.500M3.500 13.500l10-10M7.500 13.500l6-6M11 13.500l2.500-2.500" stroke-width=".8"/><path d="M1 2.500h2M13 2.500h2M1 13.500h2M13 13.500h2M2.500 1v2M13.500 1v2M2.500 13v2M13.500 13v2" /></g></svg>
<svg class="ic" style="left:4.0px;top:441.5px;width:17px;height:17px" viewBox="0 0 16 16" ><defs><linearGradient id="gg" x1="0" y1="0" x2="0" y2="1"><stop offset="0" stop-color="#444"/><stop offset="1" stop-color="#eee"/></linearGradient></defs><rect x="3" y="3" width="10" height="10" fill="url(#gg)" stroke="#444"/><path d="M1 3h2M13 3h2M1 13h2M13 13h2M3 1v2M13 1v2M3 13v2M13 13v2" stroke="#444"/></svg>
<svg class="ic" style="left:4.0px;top:463.5px;width:17px;height:17px" viewBox="0 0 16 16" ><g fill="none" stroke="#3a3a3a" stroke-width="1.2" stroke-linejoin="round" stroke-linecap="round"><path d="M1.500 3.500h9l4 4v6h-13z" fill="#fafafa"/><circle cx="7.500" cy="9" r="2.500" fill="#fff"/></g></svg>
<svg class="ic" style="left:4.0px;top:485.5px;width:17px;height:17px" viewBox="0 0 16 16" ><rect x="1.500" y="2.500" width="13" height="11" fill="#fafafa" stroke="#333"/><rect x="1.500" y="2.500" width="13" height="3" fill="#666"/><path d="M1.500 8h13M1.500 10.800h13M6 5.500v8M10.500 5.500v8" stroke="#333" stroke-width=".9"/></svg>
<svg class="ic" style="left:4.0px;top:507.5px;width:17px;height:17px" viewBox="0 0 16 16" ><text x="1" y="14.500" font-family="Liberation Sans,sans-serif" font-size="17" font-weight="bold" fill="#333">A</text></svg>
<svg class="ic" style="left:4.0px;top:529.5px;width:17px;height:17px" viewBox="0 0 16 16" ><circle cx="4.500" cy="4.500" r="3" fill="#4aa84a" stroke="#1a5a1a"/><circle cx="11.500" cy="11.500" r="3" fill="#8ac8f0" stroke="#1a5a9a"/><path d="M8 4.500h3.500v2.500M10 6l1.500 1.500 1.500-1.500" stroke="#333" fill="none"/></svg>
<div class="ltb" style="left:1865px;top:102px;width:23px;height:402px"><div class="hgrip"></div></div>
<svg class="ic" style="left:1868.0px;top:111.1px;width:17px;height:17px" viewBox="0 0 16 16" ><path d="M3 12l7-7 3 2.500-6 7z" fill="#c87828" stroke="#6a3a10" stroke-width=".7"/><path d="M10.500 5l4-4" stroke="#e8a048" stroke-width="2"/><path d="M1.500 14.500h9" stroke="#333"/></svg>
<svg class="ic" style="left:1868.0px;top:133.1px;width:17px;height:17px" viewBox="0 0 16 16" ><g fill="none" stroke="#3a3a3a" stroke-width="1.2" stroke-linejoin="round" stroke-linecap="round"><circle cx="5" cy="5" r="3" stroke="#444"/><circle cx="10.500" cy="11" r="3.300" stroke="#1f6fb8" fill="#cfe4f8"/><path d="M9 3c3 0 4 1.500 4 3.500M11.500 5l1.500 1.800 1.500-1.800" stroke="#333"/></g></svg>
<svg class="ic" style="left:1868.0px;top:155.2px;width:17px;height:17px" viewBox="0 0 16 16" ><g fill="none" stroke="#3a3a3a" stroke-width="1.2" stroke-linejoin="round" stroke-linecap="round"><path d="M6.500 2v12h-5z" stroke="#444" fill="#eee"/><path d="M9.500 2v12h5z" stroke="#1f6fb8" fill="#cfe4f8"/><path d="M8 1v14" stroke="#444" stroke-dasharray="1.500 1.500"/></g></svg>
<svg class="ic" style="left:1868.0px;top:177.2px;width:17px;height:17px" viewBox="0 0 16 16" ><g fill="none" stroke="#3a3a3a" stroke-width="1.2" stroke-linejoin="round" stroke-linecap="round"><path d="M2 13v-3c0-1 .8-1.500 1.500-1.500 0-4 2-6 4.500-6s4.500 2 4.500 6c.7 0 1.500.5 1.500 1.500v3z" stroke="#1f6fb8" fill="#cfe4f8"/><path d="M5 13v-2.500h1.500c-.5-3 .2-5 1.500-5s2 2 1.500 5h1.500v2.500z" stroke="#444" fill="#fff"/></g></svg>
<svg class="ic" style="left:1868.0px;top:199.2px;width:17px;height:17px" viewBox="0 0 16 16" ><g fill="none" stroke="#3a3a3a" stroke-width="1.2" stroke-linejoin="round" stroke-linecap="round"><rect x="1.500" y="1.500" width="5" height="5" stroke="#1f6fb8" fill="#cfe4f8"/><rect x="9.500" y="1.500" width="5" height="5" stroke="#1f6fb8"/><rect x="1.500" y="9.500" width="5" height="5" stroke="#1f6fb8"/><rect x="9.500" y="9.500" width="3.500" height="3.500" stroke="#1f6fb8"/></g><path d="M15.500 12v3.500h-3.500z" fill="#222"/></svg>
<svg class="ic" style="left:1868.0px;top:221.2px;width:17px;height:17px" viewBox="0 0 16 16" ><path d="M8 .5l2.700 3.500h-5.400zM8 15.500l2.700-3.500h-5.400zM.5 8l3.500-2.700v5.400zM15.500 8l-3.500-2.700v5.400z" fill="#333"/><path d="M8 3.500v2.500M8 10v2.500M3.500 8h2.500M10 8h2.500" stroke="#333" stroke-width="1.400"/><rect x="6.200" y="6.200" width="3.600" height="3.600" fill="#fff" stroke="#333" stroke-width=".9"/></svg>
<svg class="ic" style="left:1868.0px;top:243.3px;width:17px;height:17px" viewBox="0 0 16 16" ><g fill="none" stroke="#3a3a3a" stroke-width="1.2" stroke-linejoin="round" stroke-linecap="round"><path d="M12 4a6 6 0 1 0 2 4.500" stroke="#444" stroke-width="1.400"/></g><path d="M9.500 1l4 2.500-4 2.500z" fill="#333"/></svg>
<svg class="ic" style="left:1868.0px;top:265.3px;width:17px;height:17px" viewBox="0 0 16 16" ><g fill="none" stroke="#3a3a3a" stroke-width="1.2" stroke-linejoin="round" stroke-linecap="round"><rect x="1.500" y="1.500" width="13" height="13" stroke="#1f6fb8" fill="#a8d0f0"/><rect x="1.500" y="7.500" width="7" height="7" stroke="#444" fill="#fff"/></g></svg>
<svg class="ic" style="left:1868.0px;top:287.3px;width:17px;height:17px" viewBox="0 0 16 16" ><g fill="none" stroke="#3a3a3a" stroke-width="1.2" stroke-linejoin="round" stroke-linecap="round"><path d="M1.500 1.500h8l4.500 13h-12.500z" stroke="#1f6fb8" fill="#e4f0fa"/><path d="M1.500 1.500h8v13" stroke="#444"/><path d="M5 10h5M8.500 8.500l1.500 1.500-1.500 1.500" stroke="#222"/></g></svg>
<svg class="ic" style="left:1868.0px;top:309.4px;width:17px;height:17px" viewBox="0 0 16 16" ><g fill="none" stroke="#3a3a3a" stroke-width="1.2" stroke-linejoin="round" stroke-linecap="round"><path d="M1 9h4M11 9h4" stroke="#1f6fb8" stroke-dasharray="1.500 1"/><path d="M5 9h6" stroke="#1f6fb8"/><path d="M5 14l6-12" stroke="#444" stroke-width="1.300"/></g></svg>
<svg class="ic" style="left:1868.0px;top:331.4px;width:17px;height:17px" viewBox="0 0 16 16" ><g fill="none" stroke="#3a3a3a" stroke-width="1.2" stroke-linejoin="round" stroke-linecap="round"><path d="M1 9h5" stroke="#1f6fb8"/><path d="M6 9h5" stroke="#1f6fb8" stroke-dasharray="1.500 1"/><path d="M10 14l5-12" stroke="#444" stroke-width="1.300"/></g></svg>
<svg class="ic" style="left:1868.0px;top:353.4px;width:17px;height:17px" viewBox="0 0 16 16" ><g fill="none" stroke="#3a3a3a" stroke-width="1.2" stroke-linejoin="round" stroke-linecap="round"><path d="M2.500 13.500v-8h8" stroke="#444"/><path d="M10.500 5.500h4v8h-12" stroke="#444"/></g><circle cx="10.500" cy="4.500" r="1.600" fill="#1f6fb8"/></svg>
<svg class="ic" style="left:1868.0px;top:375.5px;width:17px;height:17px" viewBox="0 0 16 16" ><g fill="none" stroke="#3a3a3a" stroke-width="1.2" stroke-linejoin="round" stroke-linecap="round"><path d="M2.500 5v8.500h11v-8.500" stroke="#444"/><path d="M2.500 5h3M10.500 5h3" stroke="#444"/></g><rect x="4.500" y="3.200" width="2.200" height="2.200" fill="#1f6fb8"/><rect x="9.300" y="3.200" width="2.200" height="2.200" fill="#1f6fb8"/></svg>
<svg class="ic" style="left:1868.0px;top:397.5px;width:17px;height:17px" viewBox="0 0 16 16" ><path d="M1 8h4M11 8h4" stroke="#444"/><path d="M4 5.500l3.500 2.500-3.500 2.500zM12 5.500l-3.500 2.500 3.500 2.500z" fill="#1f6fb8"/></svg>
<svg class="ic" style="left:1868.0px;top:419.5px;width:17px;height:17px" viewBox="0 0 16 16" ><g fill="none" stroke="#3a3a3a" stroke-width="1.2" stroke-linejoin="round" stroke-linecap="round"><path d="M2.500 14v-7l6-5.500h5v12.500z" stroke="#444" fill="#e8f0f8"/><path d="M2.500 7l6-5.500" stroke="#1f6fb8" stroke-width="1.500"/></g></svg>
<svg class="ic" style="left:1868.0px;top:441.6px;width:17px;height:17px" viewBox="0 0 16 16" ><g fill="none" stroke="#3a3a3a" stroke-width="1.2" stroke-linejoin="round" stroke-linecap="round"><path d="M2.500 14v-5c0-4 3-7.500 7-7.500h4v12.500z" stroke="#444" fill="#e8f0f8"/><path d="M2.500 9c0-4 3-7.500 7-7.500" stroke="#1f6fb8" stroke-width="1.500"/></g></svg>
<svg class="ic" style="left:1868.0px;top:463.6px;width:17px;height:17px" viewBox="0 0 16 16" ><g fill="none" stroke="#3a3a3a" stroke-width="1.2" stroke-linejoin="round" stroke-linecap="round"><path d="M1.500 13c3 0 3-8 6-8s2 5 5 5" stroke="#1f6fb8" stroke-width="1.400"/><path d="M1.500 9v5M14 4v8" stroke="#444" stroke-width="1.400"/></g></svg>
<svg class="ic" style="left:1868.0px;top:485.6px;width:17px;height:17px" viewBox="0 0 16 16" ><g fill="none" stroke="#3a3a3a" stroke-width="1.2" stroke-linejoin="round" stroke-linecap="round"><path d="M2 6l3-2.500h6v7l-3 2.500h-6z" stroke="#1f6fb8" fill="#cfe4f8"/><path d="M8 6h6v7h-6z" stroke="#1f6fb8" fill="#fff"/><path d="M5 3.500l3 2.500M11 3.500l3 2.500" stroke="#1f6fb8"/></g></svg>
<div class="ltb" style="left:1893px;top:102px;width:23px;height:498px"><div class="hgrip"></div></div>
<svg class="ic" style="left:1896.0px;top:111.1px;width:17px;height:17px" viewBox="0 0 16 16" ><path d="M1.500 2v12M14.500 2v12M1.500 8h13" stroke="#333" stroke-width="1.100" fill="none"/><path d="M1.500 8l3-1.600v3.200zM14.500 8l-3-1.600v3.200z" fill="#333"/></svg>
<svg class="ic" style="left:1896.0px;top:132.5px;width:17px;height:17px" viewBox="0 0 16 16" ><g transform="rotate(35 8 8)"><path d="M1.500 2v12M14.500 2v12M1.500 8h13" stroke="#333" stroke-width="1.100" fill="none"/><path d="M1.500 8l3-1.600v3.200zM14.500 8l-3-1.600v3.200z" fill="#333"/></g></svg>
<svg class="ic" style="left:1896.0px;top:155.5px;width:17px;height:17px" viewBox="0 0 16 16" ><g fill="none" stroke="#3a3a3a" stroke-width="1.2" stroke-linejoin="round" stroke-linecap="round"><path d="M2 14c0-7 5-12 12-12" stroke="#333" stroke-width="1.300"/><path d="M5 14c0-5 4-9 9-9" stroke="#888"/></g><path d="M1 14l1.500-3.500 1.500 3.500zM14 1l-3.500 1.500 3.500 1.500z" fill="#333"/></svg>
<svg class="ic" style="left:1896.0px;top:178.1px;width:17px;height:17px" viewBox="0 0 16 16" ><path d="M2 14v-9M2 14h12" stroke="#333" fill="none"/><path d="M5 11l3-5 3 3 3-6" stroke="#1f6fb8" stroke-dasharray="1.500 1" fill="none"/><path d="M1 2l2 2M3 2l-2 2M12 1l2 2M14 1l-2 2" stroke="#1f6fb8"/></svg>
<svg class="ic" style="left:1896.0px;top:205.5px;width:17px;height:17px" viewBox="0 0 16 16" ><g fill="none" stroke="#3a3a3a" stroke-width="1.2" stroke-linejoin="round" stroke-linecap="round"><circle cx="8" cy="8" r="6.300" fill="#fafafa"/><path d="M8 8l-3.500-3.500M4.500 4.500v2.500M4.500 4.500h2.500"/></g></svg>
<svg class="ic" style="left:1896.0px;top:228.2px;width:17px;height:17px" viewBox="0 0 16 16" ><g fill="none" stroke="#3a3a3a" stroke-width="1.2" stroke-linejoin="round" stroke-linecap="round"><path d="M1.500 9a7 7 0 0 1 13 0" /><path d="M8 14l1-4-3 0 1.500-4M7.500 6l-1.800 1.500M7.500 6l.5 2.200"/></g></svg>
<svg class="ic" style="left:1896.0px;top:249.5px;width:17px;height:17px" viewBox="0 0 16 16" ><g fill="none" stroke="#3a3a3a" stroke-width="1.2" stroke-linejoin="round" stroke-linecap="round"><circle cx="8" cy="8" r="6.300" fill="#fafafa"/><path d="M3.500 3.500l9 9M3.500 3.500v2.500M3.500 3.500h2.500M12.500 12.500v-2.500M12.500 12.500h-2.500"/></g></svg>
<svg class="ic" style="left:1896.0px;top:271.1px;width:17px;height:17px" viewBox="0 0 16 16" ><g fill="none" stroke="#3a3a3a" stroke-width="1.2" stroke-linejoin="round" stroke-linecap="round"><path d="M1.500 13.500h13M1.500 13.500l8-11"/><path d="M11 13.500a8 8 0 0 0-3-6.500"/></g><path d="M11.500 13.500l-1-3 2 .5z" fill="#333"/></svg>
<svg class="ic" style="left:1896.0px;top:300.2px;width:17px;height:17px" viewBox="0 0 16 16" ><path d="M1.500 2v12M14.500 2v12M1.500 8h13" stroke="#333" stroke-width="1.100" fill="none"/><path d="M1.500 8l3-1.600v3.200zM14.500 8l-3-1.600v3.200z" fill="#333"/><path d="M9 3l-3 5h2l-1 4 4-6h-2l1.500-3z" fill="#f0a020" stroke="#a06010" stroke-width=".4"/></svg>
<svg class="ic" style="left:1896.0px;top:322.1px;width:17px;height:17px" viewBox="0 0 16 16" ><path d="M1.500 1.500v13M9 4v4M14.500 4v9M1.500 6h7.500M1.500 11h13" stroke="#333" fill="none"/><path d="M9 6l-2.500-1.300v2.600zM14.500 11l-2.500-1.300v2.600z" fill="#333"/></svg>
<svg class="ic" style="left:1896.0px;top:343.5px;width:17px;height:17px" viewBox="0 0 16 16" ><path d="M1.500 3v10M8 3v10M14.500 3v10M1.500 8h13" stroke="#333" fill="none"/><path d="M1.500 8l2.500-1.300v2.600zM8 8l-2.500-1.300v2.600zM8 8l2.500-1.300v2.600zM14.500 8l-2.500-1.300v2.600z" fill="#333"/></svg>
<svg class="ic" style="left:1896.0px;top:365.5px;width:17px;height:17px" viewBox="0 0 16 16" ><path d="M2 1.500v13M14 1.500v13M2 3.500h12M2 12.500h12" stroke="#333" fill="none"/><rect x="5.500" y="5.500" width="5" height="5" fill="#f0c040" stroke="#a06010" stroke-width=".6"/><path d="M8 3.500v2M8 10.500v2" stroke="#a06010"/></svg>
<svg class="ic" style="left:1896.0px;top:386.5px;width:17px;height:17px" viewBox="0 0 16 16" ><path d="M2 8.500h5M9.500 8.500h4.500M7 3v11" stroke="#333" fill="none"/><path d="M2 8.500l2-1v2zM14 8.500l-2-1v2z" fill="#333"/><path d="M11 2v4M13.500 2v4" stroke="#666"/></svg>
<svg class="ic" style="left:1896.0px;top:416.0px;width:17px;height:17px" viewBox="0 0 16 16" ><rect x="1.500" y="3.500" width="13" height="9" fill="#fafafa" stroke="#333"/><path d="M8.500 3.500v9" stroke="#333"/><circle cx="5" cy="8" r="2" fill="none" stroke="#333"/><path d="M2.500 8h5M5 5.500v5" stroke="#333"/><text x="9.700" y="11" font-size="7" font-family="Liberation Sans,sans-serif" font-weight="bold" fill="#222">.1</text></svg>
<svg class="ic" style="left:1896.0px;top:438.3px;width:17px;height:17px" viewBox="0 0 16 16" ><g fill="none" stroke="#3a3a3a" stroke-width="1.2" stroke-linejoin="round" stroke-linecap="round"><circle cx="8" cy="8" r="6.300" fill="#fafafa"/><path d="M6 8h4M8 6v4"/></g></svg>
<svg class="ic" style="left:1896.0px;top:461.1px;width:17px;height:17px" viewBox="0 0 16 16" ><path d="M1.500 2v12M14.500 2v12M1.500 8h13" stroke="#333" stroke-width="1.100" fill="none"/><path d="M1.500 8l3-1.600v3.200zM14.500 8l-3-1.600v3.200z" fill="#333"/><path d="M4 9l2.500 3 5.500-7" stroke="#2a9a2a" stroke-width="2.200" fill="none"/></svg>
<svg class="ic" style="left:1896.0px;top:482.1px;width:17px;height:17px" viewBox="0 0 16 16" ><g fill="none" stroke="#3a3a3a" stroke-width="1.2" stroke-linejoin="round" stroke-linecap="round"><path d="M1 9h3l2-5 3 9 2-6 1 2h3" stroke-width="1.200"/></g></svg>
<svg class="ic" style="left:1896.0px;top:509.5px;width:17px;height:17px" viewBox="0 0 16 16" ><path d="M1.500 2v12M14.500 2v12M1.500 8h13" stroke="#333" stroke-width="1.100" fill="none"/><path d="M1.500 8l3-1.600v3.200zM14.500 8l-3-1.600v3.200z" fill="#333"/><path d="M5 8l5-6 2.500 1.500-5 6-3 1z" fill="#f0c040" stroke="#a06010" stroke-width=".6"/></svg>
<svg class="ic" style="left:1896.0px;top:531.5px;width:17px;height:17px" viewBox="0 0 16 16" ><path d="M1.500 7v8M14.500 7v8M1.500 12h13" stroke="#333" fill="none"/><path d="M1.500 12l2.500-1.300v2.600zM14.500 12l-2.500-1.300v2.600z" fill="#333"/><text x="4" y="9.500" font-size="10" font-family="Liberation Sans,sans-serif" font-weight="bold" fill="#333">A</text></svg>
<svg class="ic" style="left:1896.0px;top:553.3px;width:17px;height:17px" viewBox="0 0 16 16" ><path d="M1.500 2v12M14.500 2v12M1.500 8h13" stroke="#333" stroke-width="1.100" fill="none"/><path d="M1.500 8l3-1.600v3.200zM14.500 8l-3-1.600v3.200z" fill="#333"/><path d="M6 11a2.500 2.500 0 1 1 4 0M10 11l.8-2M10 11l-2-.3" stroke="#2a9a2a" stroke-width="1.200" fill="none"/></svg>
<svg class="ic" style="left:1896.0px;top:580.1px;width:17px;height:17px" viewBox="0 0 16 16" ><path d="M1.500 9v6M14.500 9v6M1.500 12.500h13" stroke="#333" stroke-width="1.100" fill="none"/><path d="M1.500 12.500l2.500-1.300v2.600zM14.500 12.500l-2.500-1.300v2.600z" fill="#333"/><path d="M4 10l6-5 2.500 2-6 4z" fill="#c87828" stroke="#6a3a10" stroke-width=".6"/><path d="M11 5.500l3.500-3.500" stroke="#6a3a10" stroke-width="1.600"/></svg>
<div class="abs" style="left:1896px;top:199px;width:17px;height:1px;background:#9a9a9a"></div>
<div class="abs" style="left:1896px;top:292px;width:17px;height:1px;background:#9a9a9a"></div>
<div class="abs" style="left:1896px;top:408px;width:17px;height:1px;background:#9a9a9a"></div>
<div class="abs" style="left:1896px;top:504px;width:17px;height:1px;background:#9a9a9a"></div>
<div class="abs" style="left:1896px;top:574px;width:17px;height:1px;background:#9a9a9a"></div>
<div class="ltb" style="left:1893px;top:603px;width:23px;height:146px"><div class="hgrip"></div></div>
<svg class="ic" style="left:1896.0px;top:613.5px;width:17px;height:17px" viewBox="0 0 16 16" ><g fill="none" stroke="#3a3a3a" stroke-width="1.2" stroke-linejoin="round" stroke-linecap="round"><rect x="1.500" y="1.500" width="8" height="6" fill="#ddd"/><rect x="4" y="4.500" width="8" height="6" fill="#eee"/><rect x="6.500" y="7.500" width="8" height="6" fill="#fafafa"/></g></svg>
<svg class="ic" style="left:1896.0px;top:635.5px;width:17px;height:17px" viewBox="0 0 16 16" ><g fill="none" stroke="#3a3a3a" stroke-width="1.2" stroke-linejoin="round" stroke-linecap="round"><rect x="1.500" y="1.500" width="8" height="6" fill="#fafafa"/><rect x="4" y="4.500" width="8" height="6" fill="#eee"/><rect x="6.500" y="7.500" width="8" height="6" fill="#ddd"/></g></svg>
<svg class="ic" style="left:1896.0px;top:657.0px;width:17px;height:17px" viewBox="0 0 16 16" ><g fill="none" stroke="#3a3a3a" stroke-width="1.2" stroke-linejoin="round" stroke-linecap="round"><rect x="1.500" y="2.500" width="9" height="7" fill="#fafafa"/><rect x="5.500" y="6.500" width="9" height="7" fill="#b8b8c0"/></g></svg>
<svg class="ic" style="left:1896.0px;top:679.5px;width:17px;height:17px" viewBox="0 0 16 16" ><g fill="none" stroke="#3a3a3a" stroke-width="1.2" stroke-linejoin="round" stroke-linecap="round"><rect x="1.500" y="2.500" width="9" height="7" fill="#b8b8c0"/><rect x="5.500" y="6.500" width="9" height="7" fill="#fafafa"/></g></svg>
<svg class="ic" style="left:1896.0px;top:706.2px;width:17px;height:17px" viewBox="0 0 16 16" ><text x="1" y="7" font-size="6.500" font-family="Liberation Sans,sans-serif" font-weight="bold" fill="#222">ABC</text><path d="M3 8v5h8" stroke="#333" fill="none"/><path d="M15.500 12v3.500h-3.500z" fill="#222"/></svg>
<svg class="ic" style="left:1896.0px;top:728.5px;width:17px;height:17px" viewBox="0 0 16 16" ><g fill="none" stroke="#3a3a3a" stroke-width="1.2" stroke-linejoin="round" stroke-linecap="round"><rect x="1.500" y="2.500" width="10" height="7" fill="#8a8a98"/><path d="M13.500 4v9M4 13.500h9" /><path d="M4 11.500v3.500M13 4h2" /></g></svg>
<div class="abs" style="left:1896px;top:701px;width:17px;height:1px;background:#9a9a9a"></div><div class="abs" id="draw"><svg class="abs" style="left:0;top:0" width="1810" height="826" viewBox="31 102 1810 826" font-family="Liberation Sans,sans-serif" shape-rendering="auto"><defs><pattern id="roofh" width="4" height="5" patternUnits="userSpaceOnUse"><rect width="4" height="5" fill="#22402e"/><path d="M1 0.500v3.500M3 3v2M3 0v.5" stroke="#2f5a42" stroke-width="1"/></pattern>
<pattern id="tileh" width="3" height="3" patternUnits="userSpaceOnUse"><rect width="3" height="3" fill="#1f3a34"/><path d="M0 .5h3M.5 0v3" stroke="#2f8a6a" stroke-width=".7"/></pattern></defs><rect x="405.5" y="115.5" width="1092" height="785" fill="none" stroke="#4adada" stroke-width="1"/>
<rect x="413" y="125" width="1076.5" height="767.5" fill="none" stroke="#1c1c7c" stroke-width="3.5"/>
<rect x="1335.5" y="132.5" width="141" height="749.5" fill="none" stroke="#22eef0" stroke-width="2.6"/>
<line x1="1335.5" y1="146" x2="1476.5" y2="146" stroke="#22eef0" stroke-width="2.4"/>
<line x1="1335.5" y1="362.7" x2="1476.5" y2="362.7" stroke="#22eef0" stroke-width="2"/>
<line x1="1335.5" y1="393.5" x2="1476.5" y2="393.5" stroke="#22eef0" stroke-width="2"/>
<line x1="1335.5" y1="435.8" x2="1476.5" y2="435.8" stroke="#22eef0" stroke-width="2.4"/>
<line x1="1335.5" y1="506.5" x2="1476.5" y2="506.5" stroke="#22eef0" stroke-width="2.4"/>
<line x1="1335.5" y1="632" x2="1476.5" y2="632" stroke="#22eef0" stroke-width="2.4"/>
<line x1="1335.5" y1="679" x2="1476.5" y2="679" stroke="#22eef0" stroke-width="2.4"/>
<line x1="1335.5" y1="775.8" x2="1476.5" y2="775.8" stroke="#22eef0" stroke-width="2.4"/>
<line x1="1335.5" y1="822" x2="1476.5" y2="822" stroke="#22eef0" stroke-width="2.4"/>
<text x="1339" y="141" fill="#e8e832" font-size="5.5">Nota :</text>
<rect x="1339" y="364.5" width="94" height="4" fill="#f6f61e"/>
<line x1="1339" y1="370.5" x2="1452" y2="370.5" stroke="#f6f61e" stroke-width="0.7"/>
<text x="1339" y="377" fill="#f6f61e" font-size="4.3" textLength="116" lengthAdjust="spacingAndGlyphs" font-weight="bold" stroke="#f6f61e" stroke-width="0.35">DIMENSIONS SHALL BE CHECKED ON SITE. WRITTEN DIMENSIONS ARE</text>
<text x="1339" y="382" fill="#f6f61e" font-size="4.3" textLength="116" lengthAdjust="spacingAndGlyphs" font-weight="bold" stroke="#f6f61e" stroke-width="0.35">PREFERRED WHEN IN DOUBT, IF THERE ANY DISCREPANCIES REFER TO</text>
<text x="1339" y="386.5" fill="#f6f61e" font-size="4.3" textLength="80" lengthAdjust="spacingAndGlyphs" font-weight="bold" stroke="#f6f61e" stroke-width="0.35">ARCHITECT BEFORE PROCEEDING WITH WORK.</text>
<text x="1339" y="390.8" fill="#f6f61e" font-size="3.2" textLength="114" lengthAdjust="spacingAndGlyphs" font-weight="bold" stroke="#f6f61e" stroke-width="0.35">THIS DRAWING IS COPYRIGHT AND REMAINS THE PROPERTY OF THE ARCHITECT.</text>
<line x1="1335.5" y1="406.5" x2="1476.5" y2="406.5" stroke="#22ee22" stroke-width="1"/>
<line x1="1335.5" y1="412.5" x2="1476.5" y2="412.5" stroke="#22ee22" stroke-width="1"/>
<line x1="1335.5" y1="417.5" x2="1476.5" y2="417.5" stroke="#22ee22" stroke-width="1"/>
<line x1="1335.5" y1="423.5" x2="1476.5" y2="423.5" stroke="#22ee22" stroke-width="1"/>
<line x1="1335.5" y1="430.5" x2="1476.5" y2="430.5" stroke="#22ee22" stroke-width="1"/>
<line x1="1342.5" y1="394" x2="1342.5" y2="436" stroke="#22ee22" stroke-width="1"/>
<line x1="1449.5" y1="394" x2="1449.5" y2="436" stroke="#22ee22" stroke-width="1"/>
<line x1="1464.5" y1="394" x2="1464.5" y2="436" stroke="#22ee22" stroke-width="1"/>
<rect x="1338" y="397" width="2" height="6" fill="#f6f61e"/>
<rect x="1395" y="397.5" width="10" height="4.5" fill="#f6f61e"/>
<rect x="1452" y="396.5" width="4" height="9" fill="#f6f61e"/>
<rect x="1455" y="396.5" width="5" height="5" fill="#f6f61e"/>
<rect x="1467" y="397.5" width="7" height="4.5" fill="#f6f61e"/>
<rect x="1338" y="465.8" width="21" height="3.8" fill="#22ee22"/>
<rect x="1338" y="471.5" width="23" height="10.5" fill="#22ee22"/>
<rect x="1338" y="483.2" width="23" height="3" fill="#22ee22"/>
<line x1="1362" y1="472.5" x2="1458" y2="472.5" stroke="#22ee22" stroke-width="1" stroke-dasharray="5 1.500"/>
<text x="1338" y="513" fill="#e8e832" font-size="5.2">T/Tangan Pelukis Pelan :</text>
<text x="1340" y="638.5" fill="#e8e832" font-size="5.2">Kontraktor :</text>
<path d="M1345 657 L1371 643 L1384 652 L1390 647 L1406 659" fill="none" stroke="#ffffff" stroke-width="1.2" stroke-linejoin="miter"/>
<path d="M1349 657.5 L1371 646 L1384 655 L1390 650 L1402 659" fill="none" stroke="#ffffff" stroke-width="0.8" stroke-linejoin="miter"/>
<rect x="1378" y="646" width="4" height="5" fill="none" stroke="#ffffff" stroke-width="0.8"/>
<rect x="1360" y="653" width="6" height="5" fill="none" stroke="#ffffff" stroke-width="0.7"/>
<line x1="1363.5" y1="653" x2="1363.5" y2="658" stroke="#ffffff" stroke-width="0.6"/>
<text x="1345" y="668.5" fill="#ffffff" font-size="8" textLength="61" lengthAdjust="spacingAndGlyphs" font-weight="bold">MahDapi Kreman</text>
<rect x="1373" y="670" width="32" height="2.5" fill="#ffffff"/>
<rect x="1408" y="650" width="63" height="3.8" fill="#f6f61e"/>
<rect x="1414" y="655" width="53" height="4.5" fill="#f6f61e"/>
<rect x="1414" y="661.5" width="50" height="4.5" fill="#f6f61e"/>
<text x="1338" y="687.5" fill="#e8e832" font-size="5.2">Tajuk Projek :</text>
<text x="1337" y="694" fill="#25e0e6" font-size="7.3" textLength="87" lengthAdjust="spacingAndGlyphs">Cadangan Membina Dan</text>
<text x="1337" y="703.5" fill="#25e0e6" font-size="7.3" textLength="129" lengthAdjust="spacingAndGlyphs">Menyiapkan 1 Unit Rumah Kediaman</text>
<text x="1337" y="714.8" fill="#25e0e6" font-size="7.3" textLength="83" lengthAdjust="spacingAndGlyphs">(Satu) 1 Tingkat Di Atas</text>
<text x="1337" y="725.2" fill="#25e0e6" font-size="7.3">Lot</text>
<text x="1377.5" y="725.2" fill="#25e0e6" font-size="7.3">:</text>
<text x="1337" y="734.7" fill="#25e0e6" font-size="7.3">Tempat</text>
<text x="1377.5" y="734.7" fill="#25e0e6" font-size="7.3">:</text>
<text x="1337" y="744.1" fill="#25e0e6" font-size="7.3">Mukim</text>
<text x="1377.5" y="744.1" fill="#25e0e6" font-size="7.3">:</text>
<text x="1337" y="753.6" fill="#25e0e6" font-size="7.3">Daerah</text>
<text x="1377.5" y="753.6" fill="#25e0e6" font-size="7.3">:</text>
<text x="1337" y="763" fill="#25e0e6" font-size="7.3">Jajahan</text>
<text x="1377.5" y="763" fill="#25e0e6" font-size="7.3">:</text>
<text x="1337" y="772.5" fill="#25e0e6" font-size="7.3">Negeri</text>
<text x="1377.5" y="772.5" fill="#25e0e6" font-size="7.3">:</text>
<text x="1338" y="783" fill="#e8e832" font-size="5.2">Tajuk Lukisan :</text>
<text x="1340.5" y="799.5" fill="#25e0e6" font-size="7.3" textLength="48" lengthAdjust="spacingAndGlyphs">ELEVATIONS</text>
<text x="1340.5" y="807.8" fill="#25e0e6" font-size="7.3" textLength="39" lengthAdjust="spacingAndGlyphs">SECTIONS</text>
<line x1="1335.5" y1="831.5" x2="1437" y2="831.5" stroke="#22ee22" stroke-width="1"/>
<line x1="1335.5" y1="841.5" x2="1437" y2="841.5" stroke="#22ee22" stroke-width="1"/>
<line x1="1335.5" y1="850.5" x2="1437" y2="850.5" stroke="#22ee22" stroke-width="1"/>
<line x1="1335.5" y1="859.5" x2="1437" y2="859.5" stroke="#22ee22" stroke-width="1"/>
<line x1="1387.5" y1="822" x2="1387.5" y2="860" stroke="#22ee22" stroke-width="1"/>
<line x1="1437.5" y1="822" x2="1437.5" y2="860" stroke="#22ee22" stroke-width="1"/>
<rect x="1338" y="826" width="10" height="4.2" fill="#f6f61e"/>
<rect x="1350" y="826" width="22" height="4.2" fill="#f6f61e"/>
<rect x="1374" y="826" width="10" height="4.2" fill="#f6f61e"/>
<rect x="1390" y="826" width="13" height="4.2" fill="#f6f61e"/>
<rect x="1438.5" y="826" width="12.5" height="4.2" fill="#f6f61e"/>
<rect x="1455" y="826" width="18" height="4.2" fill="#f6f61e"/>
<rect x="1338" y="835" width="17" height="4.2" fill="#f6f61e"/>
<rect x="1389" y="835" width="17" height="4.2" fill="#f6f61e"/>
<rect x="1338" y="844.5" width="20" height="4.2" fill="#f6f61e"/>
<rect x="1389" y="844.5" width="24" height="4.2" fill="#f6f61e"/>
<rect x="1338" y="853.5" width="25" height="4.2" fill="#f6f61e"/>
<rect x="1338" y="862.5" width="27" height="4.2" fill="#f6f61e"/>
<circle cx="1465.8" cy="871" r="6" fill="#101088" stroke="#1a1aa0" stroke-width="1"/>
<text x="1465.8" y="874" fill="#25e0e6" font-size="8.5" text-anchor="middle" font-weight="bold" font-family="Liberation Serif,serif">03</text>
<line x1="471" y1="240.5" x2="1272" y2="240.5" stroke="#3c3d39" stroke-width="1" stroke-dasharray="7 1.500"/>
<line x1="471" y1="286.5" x2="1272" y2="286.5" stroke="#3c3d39" stroke-width="1" stroke-dasharray="7 1.500"/>
<line x1="471" y1="295.5" x2="1272" y2="295.5" stroke="#3c3d39" stroke-width="1" stroke-dasharray="7 1.500"/>
<line x1="471" y1="335.5" x2="1272" y2="335.5" stroke="#3c3d39" stroke-width="1" stroke-dasharray="7 1.500"/>
<line x1="466" y1="341.5" x2="1274" y2="341.5" stroke="#ff1414" stroke-width="1.2"/>
<path d="M485 235.8 L489 235.8 L487 239.3 Z" fill="none" stroke="#19e6e6" stroke-width="0.7" stroke-linejoin="miter"/>
<text x="489.5" y="239.8" fill="#19e6e6" font-size="6.2" textLength="33" lengthAdjust="spacingAndGlyphs" font-weight="bold" stroke="#19e6e6" stroke-width="0.35">TOP ROOF LEVEL</text>
<path d="M485 281.8 L489 281.8 L487 285.3 Z" fill="none" stroke="#19e6e6" stroke-width="0.7" stroke-linejoin="miter"/>
<text x="489.5" y="285.8" fill="#19e6e6" font-size="6.2" textLength="56.5" lengthAdjust="spacingAndGlyphs" font-weight="bold" stroke="#19e6e6" stroke-width="0.35">FIRST FLOOR LEVEL 104.110</text>
<path d="M485 290.8 L489 290.8 L487 294.3 Z" fill="none" stroke="#19e6e6" stroke-width="0.7" stroke-linejoin="miter"/>
<text x="489.5" y="294.8" fill="#19e6e6" font-size="6.2" textLength="34.5" lengthAdjust="spacingAndGlyphs" font-weight="bold" stroke="#19e6e6" stroke-width="0.35">FLAT ROOF LEVEL</text>
<path d="M485 330.8 L489 330.8 L487 334.3 Z" fill="none" stroke="#19e6e6" stroke-width="0.7" stroke-linejoin="miter"/>
<text x="489.5" y="334.8" fill="#19e6e6" font-size="6.2" textLength="43.5" lengthAdjust="spacingAndGlyphs" font-weight="bold" stroke="#19e6e6" stroke-width="0.35">FLOOR LEVEL 100.457</text>
<path d="M485 337.3 L489 337.3 L487 340.8 Z" fill="none" stroke="#19e6e6" stroke-width="0.7" stroke-linejoin="miter"/>
<text x="489.5" y="341.3" fill="#19e6e6" font-size="6.2" textLength="38.5" lengthAdjust="spacingAndGlyphs" font-weight="bold" stroke="#19e6e6" stroke-width="0.35">GRD. LEVEL 100.00</text>
<text x="1212" y="239.8" fill="#19e6e6" font-size="6.2" textLength="33" lengthAdjust="spacingAndGlyphs" font-weight="bold" stroke="#19e6e6" stroke-width="0.35">TOP ROOF LEVEL</text>
<path d="M1246 235.8 L1250 235.8 L1248 239.3 Z" fill="none" stroke="#19e6e6" stroke-width="0.7" stroke-linejoin="miter"/>
<text x="1190" y="285.8" fill="#19e6e6" font-size="6.2" textLength="55" lengthAdjust="spacingAndGlyphs" font-weight="bold" stroke="#19e6e6" stroke-width="0.35">FIRST FLOOR LEVEL 104.110</text>
<path d="M1246 281.8 L1250 281.8 L1248 285.3 Z" fill="none" stroke="#19e6e6" stroke-width="0.7" stroke-linejoin="miter"/>
<text x="1208" y="294.8" fill="#19e6e6" font-size="6.2" textLength="37" lengthAdjust="spacingAndGlyphs" font-weight="bold" stroke="#19e6e6" stroke-width="0.35">FLAT ROOF LEVEL</text>
<path d="M1246 290.8 L1250 290.8 L1248 294.3 Z" fill="none" stroke="#19e6e6" stroke-width="0.7" stroke-linejoin="miter"/>
<text x="1202" y="334.8" fill="#19e6e6" font-size="6.2" textLength="43" lengthAdjust="spacingAndGlyphs" font-weight="bold" stroke="#19e6e6" stroke-width="0.35">FLOOR LEVEL 100.457</text>
<path d="M1246 330.8 L1250 330.8 L1248 334.3 Z" fill="none" stroke="#19e6e6" stroke-width="0.7" stroke-linejoin="miter"/>
<text x="1207" y="341.3" fill="#19e6e6" font-size="6.2" textLength="38" lengthAdjust="spacingAndGlyphs" font-weight="bold" stroke="#19e6e6" stroke-width="0.35">GRD. LEVEL 100.00</text>
<path d="M1246 337.3 L1250 337.3 L1248 340.8 Z" fill="none" stroke="#19e6e6" stroke-width="0.7" stroke-linejoin="miter"/>
<line x1="471.5" y1="240" x2="471.5" y2="341" stroke="#b4b4b4" stroke-width="1"/>
<line x1="1270.5" y1="240" x2="1270.5" y2="341" stroke="#b4b4b4" stroke-width="1"/>
<line x1="1260.5" y1="295" x2="1260.5" y2="341" stroke="#b4b4b4" stroke-width="1"/>
<line x1="469" y1="241.8" x2="474" y2="238.8" stroke="#bdbdbd" stroke-width="1"/>
<line x1="469" y1="288" x2="474" y2="285" stroke="#bdbdbd" stroke-width="1"/>
<line x1="469" y1="342.5" x2="474" y2="339.5" stroke="#bdbdbd" stroke-width="1"/>
<line x1="1267.5" y1="241.8" x2="1272.5" y2="238.8" stroke="#bdbdbd" stroke-width="1"/>
<line x1="1267.5" y1="288" x2="1272.5" y2="285" stroke="#bdbdbd" stroke-width="1"/>
<line x1="1267.5" y1="342.5" x2="1272.5" y2="339.5" stroke="#bdbdbd" stroke-width="1"/>
<rect x="465" y="257" width="10" height="11" fill="#ff1414"/>
<rect x="465" y="333.5" width="10" height="9" fill="#ff1414"/>
<rect x="1263.8" y="256.8" width="10.5" height="11.5" fill="#ff1414"/>
<rect x="1264" y="333.5" width="10" height="9" fill="#ff1414"/>
<rect x="1255" y="312" width="9" height="10" fill="#ff1414"/>
<rect x="1262" y="306" width="6" height="14" fill="#ff1414"/>
<rect x="1266" y="304" width="7" height="12" fill="#ff1414"/>
<rect x="465" y="304.5" width="10" height="11" fill="#ff1414"/>
<line x1="471" y1="415.5" x2="1272" y2="415.5" stroke="#3c3d39" stroke-width="1" stroke-dasharray="7 1.500"/>
<line x1="471" y1="461.5" x2="1272" y2="461.5" stroke="#3c3d39" stroke-width="1" stroke-dasharray="7 1.500"/>
<line x1="471" y1="470.5" x2="1272" y2="470.5" stroke="#3c3d39" stroke-width="1" stroke-dasharray="7 1.500"/>
<line x1="471" y1="510.5" x2="1272" y2="510.5" stroke="#3c3d39" stroke-width="1" stroke-dasharray="7 1.500"/>
<line x1="466" y1="516.5" x2="1274" y2="516.5" stroke="#ff1414" stroke-width="1.2"/>
<path d="M485 410.8 L489 410.8 L487 414.3 Z" fill="none" stroke="#19e6e6" stroke-width="0.7" stroke-linejoin="miter"/>
<text x="489.5" y="414.8" fill="#19e6e6" font-size="6.2" textLength="33" lengthAdjust="spacingAndGlyphs" font-weight="bold" stroke="#19e6e6" stroke-width="0.35">TOP ROOF LEVEL</text>
<path d="M485 456.8 L489 456.8 L487 460.3 Z" fill="none" stroke="#19e6e6" stroke-width="0.7" stroke-linejoin="miter"/>
<text x="489.5" y="460.8" fill="#19e6e6" font-size="6.2" textLength="56.5" lengthAdjust="spacingAndGlyphs" font-weight="bold" stroke="#19e6e6" stroke-width="0.35">FIRST FLOOR LEVEL 104.110</text>
<path d="M485 465.8 L489 465.8 L487 469.3 Z" fill="none" stroke="#19e6e6" stroke-width="0.7" stroke-linejoin="miter"/>
<text x="489.5" y="469.8" fill="#19e6e6" font-size="6.2" textLength="34.5" lengthAdjust="spacingAndGlyphs" font-weight="bold" stroke="#19e6e6" stroke-width="0.35">FLAT ROOF LEVEL</text>
<path d="M485 505.8 L489 505.8 L487 509.3 Z" fill="none" stroke="#19e6e6" stroke-width="0.7" stroke-linejoin="miter"/>
<text x="489.5" y="509.8" fill="#19e6e6" font-size="6.2" textLength="43.5" lengthAdjust="spacingAndGlyphs" font-weight="bold" stroke="#19e6e6" stroke-width="0.35">FLOOR LEVEL 100.457</text>
<path d="M485 512.3 L489 512.3 L487 515.8 Z" fill="none" stroke="#19e6e6" stroke-width="0.7" stroke-linejoin="miter"/>
<text x="489.5" y="516.3" fill="#19e6e6" font-size="6.2" textLength="38.5" lengthAdjust="spacingAndGlyphs" font-weight="bold" stroke="#19e6e6" stroke-width="0.35">GRD. LEVEL 100.00</text>
<text x="1212" y="414.8" fill="#19e6e6" font-size="6.2" textLength="33" lengthAdjust="spacingAndGlyphs" font-weight="bold" stroke="#19e6e6" stroke-width="0.35">TOP ROOF LEVEL</text>
<path d="M1246 410.8 L1250 410.8 L1248 414.3 Z" fill="none" stroke="#19e6e6" stroke-width="0.7" stroke-linejoin="miter"/>
<text x="1190" y="460.8" fill="#19e6e6" font-size="6.2" textLength="55" lengthAdjust="spacingAndGlyphs" font-weight="bold" stroke="#19e6e6" stroke-width="0.35">FIRST FLOOR LEVEL 104.110</text>
<path d="M1246 456.8 L1250 456.8 L1248 460.3 Z" fill="none" stroke="#19e6e6" stroke-width="0.7" stroke-linejoin="miter"/>
<text x="1208" y="469.8" fill="#19e6e6" font-size="6.2" textLength="37" lengthAdjust="spacingAndGlyphs" font-weight="bold" stroke="#19e6e6" stroke-width="0.35">FLAT ROOF LEVEL</text>
<path d="M1246 465.8 L1250 465.8 L1248 469.3 Z" fill="none" stroke="#19e6e6" stroke-width="0.7" stroke-linejoin="miter"/>
<text x="1202" y="509.8" fill="#19e6e6" font-size="6.2" textLength="43" lengthAdjust="spacingAndGlyphs" font-weight="bold" stroke="#19e6e6" stroke-width="0.35">FLOOR LEVEL 100.457</text>
<path d="M1246 505.8 L1250 505.8 L1248 509.3 Z" fill="none" stroke="#19e6e6" stroke-width="0.7" stroke-linejoin="miter"/>
<text x="1207" y="516.3" fill="#19e6e6" font-size="6.2" textLength="38" lengthAdjust="spacingAndGlyphs" font-weight="bold" stroke="#19e6e6" stroke-width="0.35">GRD. LEVEL 100.00</text>
<path d="M1246 512.3 L1250 512.3 L1248 515.8 Z" fill="none" stroke="#19e6e6" stroke-width="0.7" stroke-linejoin="miter"/>
<line x1="471.5" y1="415" x2="471.5" y2="516" stroke="#b4b4b4" stroke-width="1"/>
<line x1="1270.5" y1="415" x2="1270.5" y2="516" stroke="#b4b4b4" stroke-width="1"/>
<line x1="1260.5" y1="470" x2="1260.5" y2="516" stroke="#b4b4b4" stroke-width="1"/>
<line x1="469" y1="416.8" x2="474" y2="413.8" stroke="#bdbdbd" stroke-width="1"/>
<line x1="469" y1="463" x2="474" y2="460" stroke="#bdbdbd" stroke-width="1"/>
<line x1="469" y1="517.5" x2="474" y2="514.5" stroke="#bdbdbd" stroke-width="1"/>
<line x1="1267.5" y1="416.8" x2="1272.5" y2="413.8" stroke="#bdbdbd" stroke-width="1"/>
<line x1="1267.5" y1="463" x2="1272.5" y2="460" stroke="#bdbdbd" stroke-width="1"/>
<line x1="1267.5" y1="517.5" x2="1272.5" y2="514.5" stroke="#bdbdbd" stroke-width="1"/>
<rect x="465" y="432" width="10" height="11" fill="#ff1414"/>
<rect x="465" y="508.5" width="10" height="9" fill="#ff1414"/>
<rect x="1263.8" y="431.8" width="10.5" height="11.5" fill="#ff1414"/>
<rect x="1264" y="508.5" width="10" height="9" fill="#ff1414"/>
<rect x="1255" y="487" width="9" height="10" fill="#ff1414"/>
<rect x="1262" y="481" width="6" height="14" fill="#ff1414"/>
<rect x="1266" y="479" width="7" height="12" fill="#ff1414"/>
<line x1="481.5" y1="470" x2="481.5" y2="516" stroke="#b4b4b4" stroke-width="1"/>
<rect x="465" y="480" width="10" height="10" fill="#ff1414"/>
<rect x="470" y="486" width="9" height="11" fill="#ff1414"/>
<rect x="477" y="487" width="8" height="10" fill="#ff1414"/>
<line x1="560.5" y1="215.7" x2="560.5" y2="341" stroke="#4a4336" stroke-width="1"/>
<circle cx="560.5" cy="211.5" r="4.2" fill="none" stroke="#e81860" stroke-width="1.1"/>
<text x="560.5" y="214.1" fill="#f020f0" font-size="7" text-anchor="middle">A</text>
<line x1="641.5" y1="215.7" x2="641.5" y2="341" stroke="#4a4336" stroke-width="1"/>
<circle cx="641.4" cy="211.5" r="4.2" fill="none" stroke="#e81860" stroke-width="1.1"/>
<text x="641.4" y="214.1" fill="#f020f0" font-size="7" text-anchor="middle">E</text>
<line x1="719.5" y1="215.7" x2="719.5" y2="341" stroke="#4a4336" stroke-width="1"/>
<circle cx="719.3" cy="211.5" r="4.2" fill="none" stroke="#e81860" stroke-width="1.1"/>
<text x="719.3" y="214.1" fill="#f020f0" font-size="7" text-anchor="middle">I</text>
<path d="M602 258.5 L631.6 241.4 L663.4 258.9 L731.5 258.9 L731.5 289.5 L654 289.5 Z" fill="url(#roofh)"/>
<path d="M548.3 289.4 L631.6 241.4 L663.4 258.9 L731.5 258.9 L731.5 289.5 L654 289.5 L602.5 259.5" fill="none" stroke="#1fe6d2" stroke-width="1.8" stroke-linejoin="miter"/>
<path d="M547.5 291 L550 292.5 L553 290" fill="none" stroke="#1fe6d2" stroke-width="1.2" stroke-linejoin="miter"/>
<path d="M553 291 L602 262.5 L652 291.5" fill="none" stroke="#2ee62e" stroke-width="1.3" stroke-linejoin="miter"/>
<line x1="556" y1="286.5" x2="646" y2="286.5" stroke="#2ee62e" stroke-width="1.3"/>
<line x1="562" y1="294.5" x2="640" y2="294.5" stroke="#2ee62e" stroke-width="1.3"/>
<line x1="558.5" y1="286.5" x2="558.5" y2="341" stroke="#2ee62e" stroke-width="1.3"/>
<line x1="562.5" y1="286.5" x2="562.5" y2="341" stroke="#2ee62e" stroke-width="1.3"/>
<line x1="640.5" y1="286.5" x2="640.5" y2="341" stroke="#2ee62e" stroke-width="1.3"/>
<line x1="644.5" y1="286.5" x2="644.5" y2="341" stroke="#2ee62e" stroke-width="1.3"/>
<line x1="654" y1="291.5" x2="731" y2="291.5" stroke="#2ee62e" stroke-width="1.1"/>
<line x1="568.5" y1="280.8" x2="568.5" y2="286.5" stroke="#ffffff" stroke-width="1.2"/>
<line x1="580.5" y1="274.3" x2="580.5" y2="286.5" stroke="#ffffff" stroke-width="1.2"/>
<line x1="584.5" y1="274.3" x2="584.5" y2="286.5" stroke="#ffffff" stroke-width="1.2"/>
<line x1="601.5" y1="262" x2="601.5" y2="286.5" stroke="#ffffff" stroke-width="1.2"/>
<line x1="593.4" y1="267" x2="593.4" y2="286.5" stroke="#ffffff" stroke-width="2.4"/>
<line x1="590" y1="267" x2="601.4" y2="267" stroke="#ffffff" stroke-width="1.8"/>
<line x1="580.4" y1="274.3" x2="601.4" y2="274.3" stroke="#ffffff" stroke-width="1.4"/>
<line x1="568" y1="280.8" x2="601.4" y2="280.8" stroke="#ffffff" stroke-width="1.4"/>
<text x="499" y="264.5" fill="#ff1414" font-size="5.5" textLength="23" lengthAdjust="spacingAndGlyphs" font-weight="bold" stroke="#ff1414" stroke-width="0.35">Granolux tiles</text>
<path d="M524 262.5 L584.4 262.5 L584.4 274" fill="none" stroke="#9a9a9a" stroke-width="1" stroke-linejoin="miter"/>
<rect x="549.5" y="266.5" width="9" height="4.5" fill="#ff1414"/>
<rect x="549.5" y="272.5" width="9" height="4.5" fill="#ff1414"/>
<line x1="547.5" y1="272.5" x2="560.5" y2="272.5" stroke="#e8e8e8" stroke-width="0.8"/>
<line x1="547.5" y1="270" x2="547.5" y2="274" stroke="#c8c8c8" stroke-width="0.8"/>
<line x1="560.5" y1="270" x2="560.5" y2="274" stroke="#c8c8c8" stroke-width="0.8"/>
<path d="M588 249.5 L594 249.5" fill="none" stroke="#12e6e6" stroke-width="1.2" stroke-linejoin="miter"/>
<path d="M588 249.5 L592 247.5" fill="none" stroke="#12e6e6" stroke-width="1" stroke-linejoin="miter"/>
<rect x="593" y="244.5" width="5" height="6" fill="#ff1414"/>
<rect x="721.5" y="243.5" width="9" height="4.5" fill="#ff1414"/>
<rect x="721.5" y="249.5" width="9" height="4.5" fill="#ff1414"/>
<line x1="719.5" y1="249.5" x2="732.5" y2="249.5" stroke="#e8e8e8" stroke-width="0.8"/>
<line x1="719.5" y1="247" x2="719.5" y2="251" stroke="#c8c8c8" stroke-width="0.8"/>
<line x1="732.5" y1="247" x2="732.5" y2="251" stroke="#c8c8c8" stroke-width="0.8"/>
<line x1="570.5" y1="295" x2="570.5" y2="341" stroke="#ffffff" stroke-width="1.2"/>
<line x1="584.5" y1="297" x2="584.5" y2="341" stroke="#ffffff" stroke-width="1.2"/>
<line x1="562" y1="332" x2="585" y2="332" stroke="#ffffff" stroke-width="1.6"/>
<line x1="562" y1="337" x2="585" y2="337" stroke="#ffffff" stroke-width="1.4"/>
<line x1="582" y1="302" x2="586.5" y2="302" stroke="#ffffff" stroke-width="1.8"/>
<line x1="582" y1="307.5" x2="586.5" y2="307.5" stroke="#ffffff" stroke-width="1.8"/>
<line x1="582" y1="313" x2="586.5" y2="313" stroke="#ffffff" stroke-width="1.8"/>
<line x1="582" y1="318.5" x2="586.5" y2="318.5" stroke="#ffffff" stroke-width="1.8"/>
<line x1="582" y1="324" x2="586.5" y2="324" stroke="#ffffff" stroke-width="1.8"/>
<line x1="585.5" y1="297" x2="585.5" y2="341" stroke="#ff1414" stroke-width="0.8" stroke-dasharray="2 2"/>
<rect x="566.8" y="301" width="15.8" height="29.5" fill="#35254f"/>
<rect x="566.8" y="301" width="15.8" height="29.5" fill="none" stroke="#f020f0" stroke-width="1.5"/>
<line x1="574.5" y1="301" x2="574.5" y2="330.5" stroke="#f020f0" stroke-width="1.2"/>
<line x1="566.8" y1="325" x2="582.6" y2="325" stroke="#f020f0" stroke-width="1.5"/>
<line x1="563.5" y1="301" x2="584" y2="301" stroke="#f020f0" stroke-width="1.5"/>
<path d="M568 304 L574 315 L568 324" fill="none" stroke="#c8a0f0" stroke-width="0.9" stroke-linejoin="miter"/>
<path d="M576 304 L582 315 L576 324" fill="none" stroke="#c8a0f0" stroke-width="0.9" stroke-linejoin="miter"/>
<line x1="563.5" y1="330.8" x2="584" y2="330.8" stroke="#f020f0" stroke-width="1.5"/>
<rect x="567.5" y="312.5" width="6" height="5.5" fill="#ff1414"/>
<rect x="604.5" y="303.5" width="25.5" height="32.5" fill="#28503a"/>
<rect x="602.8" y="301.7" width="28.9" height="34.6" fill="none" stroke="#f020f0" stroke-width="2"/>
<line x1="617.2" y1="301.7" x2="617.2" y2="336.3" stroke="#f020f0" stroke-width="1.5"/>
<line x1="606.5" y1="304" x2="606.5" y2="336" stroke="#f020f0" stroke-width="0.8"/>
<line x1="628.5" y1="304" x2="628.5" y2="336" stroke="#f020f0" stroke-width="0.8"/>
<path d="M609 314 L606.5 320 L615 334" fill="none" stroke="#d8c0e0" stroke-width="0.8" stroke-linejoin="miter"/>
<circle cx="611.5" cy="319.3" r="2.4" fill="#ff1414"/>
<circle cx="616.5" cy="318.5" r="1.3" fill="#f020f0"/>
<rect x="601" y="337.3" width="33" height="3.7" fill="none" stroke="#7fdede" stroke-width="1"/>
<line x1="675" y1="292" x2="675" y2="341" stroke="#f6f61e" stroke-width="2.2"/>
<line x1="645" y1="299.5" x2="675" y2="299.5" stroke="#f6f61e" stroke-width="1.3"/>
<line x1="645" y1="332.5" x2="675" y2="332.5" stroke="#f6f61e" stroke-width="1.3"/>
<rect x="659" y="301.5" width="13.5" height="28" fill="#33285a"/>
<rect x="659.5" y="302" width="5.8" height="27" fill="none" stroke="#d838d8" stroke-width="0.8"/>
<path d="M660 304 L664.2 315.5 L660 324" fill="none" stroke="#d070f0" stroke-width="1" stroke-linejoin="miter"/>
<rect x="666.2" y="302" width="5.8" height="27" fill="none" stroke="#d838d8" stroke-width="0.8"/>
<path d="M666.8 304 L671 315.5 L666.8 324" fill="none" stroke="#d070f0" stroke-width="1" stroke-linejoin="miter"/>
<line x1="659" y1="324.5" x2="672.5" y2="324.5" stroke="#f020f0" stroke-width="1.2"/>
<line x1="659" y1="305.5" x2="672.5" y2="305.5" stroke="#f020f0" stroke-width="1.2"/>
<rect x="657.5" y="300" width="16.5" height="31" fill="none" stroke="#f6f61e" stroke-width="1.8"/>
<rect x="667" y="313" width="8" height="6" fill="#ff1414"/>
<rect x="696" y="301.2" width="26" height="29.6" fill="#33285a"/>
<rect x="696.5" y="301.7" width="7.7" height="28.6" fill="none" stroke="#d838d8" stroke-width="0.8"/>
<path d="M697 303.7 L703.2 316 L697 325.3" fill="none" stroke="#d070f0" stroke-width="1" stroke-linejoin="miter"/>
<rect x="705.2" y="301.7" width="7.7" height="28.6" fill="none" stroke="#d838d8" stroke-width="0.8"/>
<path d="M705.7 303.7 L711.8 316 L705.7 325.3" fill="none" stroke="#d070f0" stroke-width="1" stroke-linejoin="miter"/>
<rect x="713.8" y="301.7" width="7.7" height="28.6" fill="none" stroke="#d838d8" stroke-width="0.8"/>
<path d="M714.3 303.7 L720.5 316 L714.3 325.3" fill="none" stroke="#d070f0" stroke-width="1" stroke-linejoin="miter"/>
<line x1="696" y1="325.5" x2="722" y2="325.5" stroke="#f020f0" stroke-width="1.2"/>
<line x1="696" y1="304.5" x2="722" y2="304.5" stroke="#f020f0" stroke-width="1.2"/>
<rect x="694.5" y="299.7" width="29" height="32.6" fill="none" stroke="#f6f61e" stroke-width="2.2"/>
<rect x="717" y="301" width="5" height="30" fill="#222830"/>
<line x1="717.5" y1="301" x2="717.5" y2="331" stroke="#f020f0" stroke-width="1"/>
<rect x="707" y="313" width="6" height="6" fill="#ff1414"/>
<line x1="720.7" y1="291" x2="720.7" y2="341" stroke="#19d6e6" stroke-width="1.4"/>
<line x1="725" y1="305.5" x2="760" y2="305.5" stroke="#ff1414" stroke-width="1"/>
<text x="762" y="307.2" fill="#ff1414" font-size="6" textLength="67" lengthAdjust="spacingAndGlyphs" font-weight="bold" stroke="#ff1414" stroke-width="0.35">4" x 4" rc coping to engr's detail</text>
<line x1="725" y1="315.5" x2="760" y2="315.5" stroke="#ff1414" stroke-width="1"/>
<text x="762" y="317.2" fill="#ff1414" font-size="6" textLength="67" lengthAdjust="spacingAndGlyphs" font-weight="bold" stroke="#ff1414" stroke-width="0.35">4" x 4" rc coping to engr's detail</text>
<line x1="725" y1="324.5" x2="760" y2="324.5" stroke="#ff1414" stroke-width="1"/>
<text x="762" y="326.6" fill="#ff1414" font-size="6" textLength="24" lengthAdjust="spacingAndGlyphs" font-weight="bold" stroke="#ff1414" stroke-width="0.35">Granolux tiles</text>
<line x1="831" y1="305.5" x2="899" y2="305.5" stroke="#ff1414" stroke-width="1"/>
<line x1="831" y1="315.5" x2="899" y2="315.5" stroke="#ff1414" stroke-width="1"/>
<line x1="788" y1="324.5" x2="918" y2="324.5" stroke="#ff1414" stroke-width="1"/>
<text x="573" y="349" fill="#e040f0" font-size="8.2" textLength="58" lengthAdjust="spacingAndGlyphs">FRONT ELEVATION</text>
<rect x="573" y="351.5" width="33" height="3" fill="#ff1414"/>
<line x1="881.5" y1="215.7" x2="881.5" y2="341" stroke="#4a4336" stroke-width="1"/>
<circle cx="881.4" cy="211.5" r="4.2" fill="none" stroke="#e81860" stroke-width="1.1"/>
<text x="881.4" y="214.1" fill="#f020f0" font-size="7" text-anchor="middle">1</text>
<line x1="902.5" y1="215.7" x2="902.5" y2="341" stroke="#4a4336" stroke-width="1"/>
<circle cx="902.3" cy="211.5" r="4.2" fill="none" stroke="#e81860" stroke-width="1.1"/>
<text x="902.3" y="214.1" fill="#f020f0" font-size="7" text-anchor="middle">2</text>
<line x1="983.5" y1="215.7" x2="983.5" y2="341" stroke="#4a4336" stroke-width="1"/>
<circle cx="983.4" cy="211.5" r="4.2" fill="none" stroke="#e81860" stroke-width="1.1"/>
<text x="983.4" y="214.1" fill="#f020f0" font-size="7" text-anchor="middle">5</text>
<line x1="1146.5" y1="215.7" x2="1146.5" y2="290" stroke="#4a4336" stroke-width="1"/>
<circle cx="1146.3" cy="211.5" r="4.2" fill="none" stroke="#e81860" stroke-width="1.1"/>
<text x="1146.3" y="214.1" fill="#f020f0" font-size="7" text-anchor="middle">7</text>
<line x1="1171.5" y1="215.7" x2="1171.5" y2="290" stroke="#4a4336" stroke-width="1"/>
<circle cx="1171" cy="211.5" r="4.2" fill="none" stroke="#e81860" stroke-width="1.1"/>
<text x="1171" y="214.1" fill="#f020f0" font-size="7" text-anchor="middle">8</text>
<line x1="1158.5" y1="222" x2="1158.5" y2="290" stroke="#3c3d39" stroke-width="1" opacity="0.7"/>
<line x1="1164.5" y1="222" x2="1164.5" y2="290" stroke="#3c3d39" stroke-width="1" opacity="0.7"/>
<path d="M869.4 258.9 L943 258.9 L974 241.4 L1074.4 241.4 L1107.6 258.9 L1183.8 258.9 L1183.8 289.5 L995 289.5 L943 259.5 L889.6 289.5 L869.4 289.5 Z" fill="url(#roofh)"/>
<path d="M889.6 289.5 L869.4 289.5 L869.4 258.9 L943 258.9 L974 241.4 L1074.4 241.4 L1158 288.5" fill="none" stroke="#1fe6d2" stroke-width="1.8" stroke-linejoin="miter"/>
<path d="M1107.6 258.9 L1183.8 258.9 L1183.8 289.5 L995 289.5 L943 259.2 L889.6 289.5" fill="none" stroke="#1fe6d2" stroke-width="1.8" stroke-linejoin="miter"/>
<path d="M893 291.5 L943 263 L993 291.5 L1183 291.5" fill="none" stroke="#2ee62e" stroke-width="1.1" stroke-linejoin="miter"/>
<line x1="869.4" y1="291.5" x2="893" y2="291.5" stroke="#2ee62e" stroke-width="1.2"/>
<rect x="871" y="243.5" width="9" height="4.5" fill="#ff1414"/>
<rect x="871" y="249.5" width="9" height="4.5" fill="#ff1414"/>
<line x1="868.5" y1="249.5" x2="882.5" y2="249.5" stroke="#e8e8e8" stroke-width="0.8"/>
<line x1="868.5" y1="247" x2="868.5" y2="251" stroke="#c8c8c8" stroke-width="0.8"/>
<line x1="882.5" y1="247" x2="882.5" y2="251" stroke="#c8c8c8" stroke-width="0.8"/>
<rect x="1172.5" y="243.5" width="9" height="4.5" fill="#ff1414"/>
<rect x="1172.5" y="249.5" width="9" height="4.5" fill="#ff1414"/>
<line x1="1170.5" y1="249.5" x2="1183.5" y2="249.5" stroke="#e8e8e8" stroke-width="0.8"/>
<line x1="1170.5" y1="247" x2="1170.5" y2="251" stroke="#c8c8c8" stroke-width="0.8"/>
<line x1="1183.5" y1="247" x2="1183.5" y2="251" stroke="#c8c8c8" stroke-width="0.8"/>
<path d="M933 249.5 L939 249.5" fill="none" stroke="#12e6e6" stroke-width="1.2" stroke-linejoin="miter"/>
<path d="M933 249.5 L937 247.5" fill="none" stroke="#12e6e6" stroke-width="1" stroke-linejoin="miter"/>
<rect x="938" y="244.5" width="5" height="6" fill="#ff1414"/>
<line x1="878.5" y1="291" x2="878.5" y2="341" stroke="#2ee62e" stroke-width="1.3"/>
<line x1="885.5" y1="291" x2="885.5" y2="341" stroke="#2ee62e" stroke-width="1.3"/>
<line x1="901.5" y1="287" x2="901.5" y2="341" stroke="#19d6e6" stroke-width="1.3"/>
<rect x="899.7" y="299.6" width="10.8" height="32.4" fill="none" stroke="#48d848" stroke-width="2"/>
<rect x="901.2" y="301" width="7.8" height="29.5" fill="none" stroke="#f6f61e" stroke-width="0.7"/>
<circle cx="904.5" cy="307.5" r="1.8" fill="#ff1414"/>
<line x1="904.5" y1="309" x2="904.5" y2="330" stroke="#d04040" stroke-width="0.7" stroke-dasharray="2 2"/>
<line x1="943.5" y1="262" x2="943.5" y2="341" stroke="#ff1414" stroke-width="1.2"/>
<line x1="918.5" y1="286" x2="918.5" y2="341" stroke="#ff1414" stroke-width="0.8" stroke-dasharray="2 2"/>
<line x1="930.4" y1="268" x2="930.4" y2="341" stroke="#ffffff" stroke-width="1.4"/>
<line x1="920.5" y1="273.6" x2="943" y2="273.6" stroke="#ffffff" stroke-width="2.2"/>
<line x1="918.4" y1="278.8" x2="943" y2="278.8" stroke="#ffffff" stroke-width="2.2"/>
<line x1="918.4" y1="283.9" x2="943" y2="283.9" stroke="#ffffff" stroke-width="2.2"/>
<line x1="918.4" y1="289.1" x2="943" y2="289.1" stroke="#ffffff" stroke-width="2.2"/>
<line x1="918.4" y1="294.3" x2="943" y2="294.3" stroke="#ffffff" stroke-width="2.2"/>
<line x1="918.4" y1="299.5" x2="943" y2="299.5" stroke="#ffffff" stroke-width="2.2"/>
<line x1="918.4" y1="304.6" x2="943" y2="304.6" stroke="#ffffff" stroke-width="2.2"/>
<line x1="918.4" y1="309.8" x2="943" y2="309.8" stroke="#ffffff" stroke-width="2.2"/>
<line x1="918.4" y1="315" x2="943" y2="315" stroke="#ffffff" stroke-width="2.2"/>
<line x1="918.4" y1="320.1" x2="943" y2="320.1" stroke="#ffffff" stroke-width="2.2"/>
<line x1="918.4" y1="325.3" x2="943" y2="325.3" stroke="#ffffff" stroke-width="2.2"/>
<line x1="918.4" y1="330.5" x2="943" y2="330.5" stroke="#ffffff" stroke-width="2.2"/>
<line x1="918.4" y1="335.6" x2="943" y2="335.6" stroke="#ffffff" stroke-width="2.2"/>
<line x1="937" y1="263.5" x2="943" y2="263.5" stroke="#ffffff" stroke-width="2"/>
<line x1="930.4" y1="268.5" x2="943" y2="268.5" stroke="#ffffff" stroke-width="2.2"/>
<path d="M943.4 286.6 L984 286.6 L984 341" fill="none" stroke="#19d6e6" stroke-width="1.3" stroke-linejoin="miter"/>
<rect x="955" y="301.1" width="16" height="5.6" fill="#4a2a6a"/>
<line x1="956.5" y1="303.1" x2="969.5" y2="303.1" stroke="#f020f0" stroke-width="1.5"/>
<line x1="956.5" y1="305.5" x2="969.5" y2="305.5" stroke="#c060e0" stroke-width="1"/>
<rect x="953.5" y="299.6" width="19" height="8.6" fill="none" stroke="#f6f61e" stroke-width="1.6"/>
<circle cx="962" cy="312.4" r="2.6" fill="#ff1414"/>
<rect x="991.6" y="301" width="32.9" height="34.6" fill="none" stroke="#f020f0" stroke-width="2"/>
<line x1="991.6" y1="306" x2="1024.5" y2="306" stroke="#f020f0" stroke-width="1.6"/>
<line x1="1001.5" y1="301" x2="1001.5" y2="335.6" stroke="#f020f0" stroke-width="1.2"/>
<line x1="1008.5" y1="301" x2="1008.5" y2="335.6" stroke="#f020f0" stroke-width="1.2"/>
<line x1="1015.5" y1="301" x2="1015.5" y2="335.6" stroke="#f020f0" stroke-width="1.2"/>
<rect x="1005" y="314.5" width="6" height="5" fill="#ff1414"/>
<rect x="989" y="337" width="37.6" height="4" fill="none" stroke="#7fdede" stroke-width="1"/>
<line x1="984" y1="332" x2="991" y2="332" stroke="#f6f61e" stroke-width="2.2"/>
<line x1="1025" y1="332" x2="1148" y2="332" stroke="#f6f61e" stroke-width="2.2"/>
<rect x="1043" y="301.1" width="24" height="29.4" fill="#33285a"/>
<rect x="1043.5" y="301.6" width="7" height="28.4" fill="none" stroke="#d838d8" stroke-width="0.8"/>
<path d="M1044 303.6 L1049.5 315.8 L1044 325" fill="none" stroke="#d070f0" stroke-width="1" stroke-linejoin="miter"/>
<rect x="1051.5" y="301.6" width="7" height="28.4" fill="none" stroke="#d838d8" stroke-width="0.8"/>
<path d="M1052 303.6 L1057.5 315.8 L1052 325" fill="none" stroke="#d070f0" stroke-width="1" stroke-linejoin="miter"/>
<rect x="1059.5" y="301.6" width="7" height="28.4" fill="none" stroke="#d838d8" stroke-width="0.8"/>
<path d="M1060 303.6 L1065.5 315.8 L1060 325" fill="none" stroke="#d070f0" stroke-width="1" stroke-linejoin="miter"/>
<line x1="1043" y1="325.5" x2="1067" y2="325.5" stroke="#f020f0" stroke-width="1.2"/>
<line x1="1043" y1="304.5" x2="1067" y2="304.5" stroke="#f020f0" stroke-width="1.2"/>
<rect x="1041.5" y="299.6" width="27" height="32.4" fill="none" stroke="#f6f61e" stroke-width="2"/>
<rect x="1050.5" y="313" width="8" height="6" fill="#ff1414"/>
<rect x="1093" y="299.6" width="52.8" height="24.4" fill="none" stroke="#f6f61e" stroke-width="1.8"/>
<rect x="1094.5" y="301.1" width="15.2" height="21.4" fill="#33285a"/>
<rect x="1095" y="301.6" width="6.6" height="20.4" fill="none" stroke="#d838d8" stroke-width="0.8"/>
<path d="M1095.5 303.6 L1100.6 311.8 L1095.5 317" fill="none" stroke="#d070f0" stroke-width="1" stroke-linejoin="miter"/>
<rect x="1102.6" y="301.6" width="6.6" height="20.4" fill="none" stroke="#d838d8" stroke-width="0.8"/>
<path d="M1103.1 303.6 L1108.2 311.8 L1103.1 317" fill="none" stroke="#d070f0" stroke-width="1" stroke-linejoin="miter"/>
<line x1="1094.5" y1="317.5" x2="1109.7" y2="317.5" stroke="#f020f0" stroke-width="1.2"/>
<line x1="1094.5" y1="304.5" x2="1109.7" y2="304.5" stroke="#f020f0" stroke-width="1.2"/>
<rect x="1093" y="299.6" width="18.2" height="24.4" fill="none" stroke="#f6f61e" stroke-width="1.5"/>
<rect x="1093" y="313" width="8" height="6" fill="#ff1414"/>
<line x1="1111.2" y1="299.6" x2="1111.2" y2="324" stroke="#f6f61e" stroke-width="2"/>
<path d="M1127 299.6 L1127 307.5 L1145.8 307.5" fill="none" stroke="#f6f61e" stroke-width="1.5" stroke-linejoin="miter"/>
<rect x="1128.5" y="301" width="16" height="5" fill="#4a2a6a"/>
<line x1="1129" y1="303.5" x2="1144" y2="303.5" stroke="#f020f0" stroke-width="1.3"/>
<circle cx="1135.5" cy="312" r="2.6" fill="#ff1414"/>
<line x1="1147.3" y1="291" x2="1147.3" y2="341" stroke="#19d6e6" stroke-width="1.4"/>
<line x1="1153.5" y1="299.5" x2="1153.5" y2="341" stroke="#2ee62e" stroke-width="1.2"/>
<line x1="1159.5" y1="299.5" x2="1159.5" y2="341" stroke="#2ee62e" stroke-width="1.2"/>
<line x1="1164.5" y1="299.5" x2="1164.5" y2="341" stroke="#2ee62e" stroke-width="1.2"/>
<line x1="1167.5" y1="299.5" x2="1167.5" y2="341" stroke="#2ee62e" stroke-width="1.2"/>
<line x1="1147" y1="295.5" x2="1183.5" y2="295.5" stroke="#19d6e6" stroke-width="1.2"/>
<line x1="1150" y1="297.5" x2="1183" y2="297.5" stroke="#7fdede" stroke-width="0.8" stroke-dasharray="3 2"/>
<path d="M1148 299.5 L1172 299.5 L1172 296" fill="none" stroke="#2ee62e" stroke-width="1.2" stroke-linejoin="miter"/>
<path d="M1151 303 L1154 309 L1150 316 L1153 324" fill="none" stroke="#e060f0" stroke-width="1.5" stroke-linejoin="miter"/>
<path d="M1159 305 L1163 311 L1160 318 L1163 325" fill="none" stroke="#e060f0" stroke-width="1.5" stroke-linejoin="miter"/>
<rect x="1150" y="313" width="8" height="6" fill="#ff1414"/>
<line x1="1149" y1="330" x2="1163" y2="330" stroke="#f020f0" stroke-width="1.5"/>
<line x1="1172.5" y1="300" x2="1172.5" y2="341" stroke="#8a8a6a" stroke-width="0.8" stroke-dasharray="2 2"/>
<text x="930" y="349" fill="#e040f0" font-size="8.2" textLength="58" lengthAdjust="spacingAndGlyphs">RIGHT ELEVATION</text>
<rect x="930" y="351.5" width="33" height="3" fill="#ff1414"/>
<line x1="560.5" y1="391.2" x2="560.5" y2="516" stroke="#4a4336" stroke-width="1"/>
<circle cx="560.5" cy="387" r="4.2" fill="none" stroke="#e81860" stroke-width="1.1"/>
<text x="560.5" y="389.6" fill="#f020f0" font-size="7" text-anchor="middle">I</text>
<line x1="577.5" y1="391.2" x2="577.5" y2="516" stroke="#4a4336" stroke-width="1"/>
<circle cx="577" cy="387" r="4.2" fill="none" stroke="#e81860" stroke-width="1.1"/>
<text x="577" y="389.6" fill="#f020f0" font-size="7" text-anchor="middle">H</text>
<line x1="637.5" y1="391.2" x2="637.5" y2="516" stroke="#4a4336" stroke-width="1"/>
<circle cx="637.7" cy="387" r="4.2" fill="none" stroke="#e81860" stroke-width="1.1"/>
<text x="637.7" y="389.6" fill="#f020f0" font-size="7" text-anchor="middle">E</text>
<line x1="719.5" y1="391.2" x2="719.5" y2="516" stroke="#4a4336" stroke-width="1"/>
<circle cx="719.4" cy="387" r="4.2" fill="none" stroke="#e81860" stroke-width="1.1"/>
<text x="719.4" y="389.6" fill="#f020f0" font-size="7" text-anchor="middle">A</text>
<path d="M548.3 433.9 L615.8 433.9 L648.3 416.5 L678.6 434 L626 465 L548.3 464.5 Z" fill="url(#roofh)"/>
<path d="M565.3 463.7 L648.3 416.5 L731.4 465.2" fill="none" stroke="#1fe6d2" stroke-width="1.8" stroke-linejoin="miter"/>
<path d="M615.8 433.9 L548.3 433.9 L548.3 464.5 L626 464.8 L678.6 434.3" fill="none" stroke="#1fe6d2" stroke-width="1.8" stroke-linejoin="miter"/>
<path d="M729.5 467.5 L732.5 465.5 L730 463" fill="none" stroke="#1fe6d2" stroke-width="1.2" stroke-linejoin="miter"/>
<path d="M550 467 L628 467 L679 437.8 L729 467.5" fill="none" stroke="#2ee62e" stroke-width="1.2" stroke-linejoin="miter"/>
<rect x="550" y="419" width="9" height="4.5" fill="#ff1414"/>
<rect x="550" y="425" width="9" height="4.5" fill="#ff1414"/>
<line x1="548" y1="424.5" x2="561" y2="424.5" stroke="#e8e8e8" stroke-width="0.8"/>
<line x1="548.5" y1="422.5" x2="548.5" y2="426.5" stroke="#c8c8c8" stroke-width="0.8"/>
<line x1="561.5" y1="422.5" x2="561.5" y2="426.5" stroke="#c8c8c8" stroke-width="0.8"/>
<path d="M602 425.5 L608 425.5" fill="none" stroke="#12e6e6" stroke-width="1.2" stroke-linejoin="miter"/>
<path d="M602 425.5 L606 423.5" fill="none" stroke="#12e6e6" stroke-width="1" stroke-linejoin="miter"/>
<rect x="607" y="420.5" width="5" height="6" fill="#ff1414"/>
<rect x="721.9" y="443.1" width="9" height="4.5" fill="#ff1414"/>
<rect x="721.9" y="449.1" width="9" height="4.5" fill="#ff1414"/>
<line x1="719.9" y1="448.5" x2="732.9" y2="448.5" stroke="#e8e8e8" stroke-width="0.8"/>
<line x1="719.5" y1="446.6" x2="719.5" y2="450.6" stroke="#c8c8c8" stroke-width="0.8"/>
<line x1="732.5" y1="446.6" x2="732.5" y2="450.6" stroke="#c8c8c8" stroke-width="0.8"/>
<line x1="558.8" y1="466" x2="558.8" y2="516" stroke="#19d6e6" stroke-width="1.4"/>
<line x1="556.5" y1="473" x2="556.5" y2="516" stroke="#ff1414" stroke-width="1"/>
<circle cx="559" cy="485" r="1" fill="#ffffff"/>
<line x1="575.5" y1="466" x2="575.5" y2="516" stroke="#f6f61e" stroke-width="1.3"/>
<line x1="564" y1="472.5" x2="636.8" y2="472.5" stroke="#19d6e6" stroke-width="1.1"/>
<line x1="566" y1="470.5" x2="600" y2="470.5" stroke="#7fdede" stroke-width="0.7" stroke-dasharray="3 2"/>
<line x1="636.5" y1="461" x2="636.5" y2="516" stroke="#19d6e6" stroke-width="1.3"/>
<path d="M579 516 L579 476.7 L637 476.7" fill="none" stroke="#2ee62e" stroke-width="1.4" stroke-linejoin="miter"/>
<rect x="590.6" y="481.8" width="13" height="28.2" fill="#f020e0"/>
<rect x="590" y="481" width="14.2" height="29.5" fill="none" stroke="#ff1414" stroke-width="1"/>
<path d="M593 484 L601 497 L594 508" fill="none" stroke="#e890f0" stroke-width="1" stroke-linejoin="miter"/>
<rect x="594.5" y="493.5" width="6" height="4.5" fill="#ff1414"/>
<line x1="579.8" y1="507" x2="590" y2="507" stroke="#f6f61e" stroke-width="2.5"/>
<line x1="604" y1="507" x2="636" y2="507" stroke="#f6f61e" stroke-width="2.5"/>
<line x1="580" y1="511.5" x2="596" y2="511.5" stroke="#7fdede" stroke-width="1"/>
<line x1="580" y1="513.5" x2="596" y2="513.5" stroke="#7fdede" stroke-width="0.8"/>
<rect x="615" y="477.4" width="16.7" height="4.4" fill="#5a2a7a"/>
<line x1="615" y1="479" x2="631.7" y2="479" stroke="#f020f0" stroke-width="1.4"/>
<line x1="616" y1="481.5" x2="631" y2="481.5" stroke="#c060e0" stroke-width="1"/>
<rect x="621" y="483" width="6" height="4.5" fill="#ff1414"/>
<rect x="641" y="476" width="16" height="30" fill="#3a2a5a"/>
<path d="M645 479 L652 490 L644 503" fill="none" stroke="#e890f0" stroke-width="1.2" stroke-linejoin="miter"/>
<path d="M650 478 L655 488 L648 503" fill="none" stroke="#f020f0" stroke-width="1" stroke-linejoin="miter"/>
<line x1="641" y1="500.5" x2="657" y2="500.5" stroke="#f020f0" stroke-width="1.5"/>
<rect x="640.6" y="475.6" width="16.8" height="31.1" fill="none" stroke="#f6f61e" stroke-width="1.6"/>
<rect x="639.2" y="474.2" width="19.6" height="33.9" fill="none" stroke="#48d848" stroke-width="1.4"/>
<rect x="650" y="487" width="7" height="5.5" fill="#ff1414"/>
<line x1="658" y1="474.8" x2="720" y2="474.8" stroke="#ff1414" stroke-width="2.2"/>
<line x1="658" y1="506.4" x2="720" y2="506.4" stroke="#ff1414" stroke-width="2.2"/>
<line x1="640" y1="461.5" x2="720" y2="461.5" stroke="#c8c8c8" stroke-width="0.9" stroke-dasharray="8 2 1.500 2"/>
<line x1="678.5" y1="437" x2="678.5" y2="516" stroke="#ff1414" stroke-width="1"/>
<line x1="704.5" y1="456" x2="704.5" y2="516" stroke="#ff1414" stroke-width="1"/>
<line x1="678.6" y1="442.8" x2="688.1" y2="442.8" stroke="#ffffff" stroke-width="2.2"/>
<line x1="678.6" y1="448" x2="697.1" y2="448" stroke="#ffffff" stroke-width="2.2"/>
<line x1="678.6" y1="453.3" x2="704" y2="453.3" stroke="#ffffff" stroke-width="2.2"/>
<line x1="678.6" y1="458.5" x2="704" y2="458.5" stroke="#ffffff" stroke-width="2.2"/>
<line x1="678.6" y1="463.7" x2="704" y2="463.7" stroke="#ffffff" stroke-width="2.2"/>
<line x1="678.6" y1="468.9" x2="704" y2="468.9" stroke="#ffffff" stroke-width="2.2"/>
<line x1="678.6" y1="474.2" x2="704" y2="474.2" stroke="#ffffff" stroke-width="2.2"/>
<line x1="678.6" y1="479.4" x2="704" y2="479.4" stroke="#ffffff" stroke-width="2.2"/>
<line x1="678.6" y1="484.6" x2="704" y2="484.6" stroke="#ffffff" stroke-width="2.2"/>
<line x1="678.6" y1="489.9" x2="704" y2="489.9" stroke="#ffffff" stroke-width="2.2"/>
<line x1="678.6" y1="495.1" x2="704" y2="495.1" stroke="#ffffff" stroke-width="2.2"/>
<line x1="678.6" y1="500.3" x2="704" y2="500.3" stroke="#ffffff" stroke-width="2.2"/>
<line x1="678.6" y1="505.6" x2="704" y2="505.6" stroke="#ffffff" stroke-width="2.2"/>
<line x1="678.6" y1="510.8" x2="704" y2="510.8" stroke="#ffffff" stroke-width="2.2"/>
<line x1="720.5" y1="461" x2="720.5" y2="516" stroke="#e8e8d8" stroke-width="1.3"/>
<path d="M721 474 L723.5 480 L721 486" fill="none" stroke="#e8d848" stroke-width="1" stroke-linejoin="miter"/>
<path d="M703.3 445.7 L707 438 L711 435.3 L776.9 435.3" fill="none" stroke="#ff1414" stroke-width="1.1" stroke-linejoin="miter"/>
<text x="778" y="437.5" fill="#ff1414" font-size="6" textLength="24" lengthAdjust="spacingAndGlyphs" font-weight="bold" stroke="#ff1414" stroke-width="0.35">Granolux tiles</text>
<line x1="722" y1="478.5" x2="776" y2="478.5" stroke="#ff1414" stroke-width="1"/>
<text x="777" y="481" fill="#ff1414" font-size="6.4" textLength="68" lengthAdjust="spacingAndGlyphs" font-weight="bold" stroke="#ff1414" stroke-width="0.35">4" x 4" rc coping to engr's detail</text>
<line x1="845" y1="478.5" x2="881" y2="478.5" stroke="#ff1414" stroke-width="1"/>
<text x="777" y="492" fill="#ff1414" font-size="6.4" textLength="66" lengthAdjust="spacingAndGlyphs" font-weight="bold" stroke="#ff1414" stroke-width="0.35">50mm x 100mm rec. rc coping</text>
<line x1="722" y1="504.5" x2="776" y2="504.5" stroke="#ff1414" stroke-width="1"/>
<text x="777" y="506.2" fill="#ff1414" font-size="6.4" textLength="73" lengthAdjust="spacingAndGlyphs" font-weight="bold" stroke="#ff1414" stroke-width="0.35">4" x 1/2" rc coping to engr's detail</text>
<text x="573" y="524" fill="#e040f0" font-size="8.2" textLength="54" lengthAdjust="spacingAndGlyphs">REAR ELEVATION</text>
<rect x="573" y="526.5" width="32" height="3" fill="#ff1414"/>
<line x1="881.5" y1="391.2" x2="881.5" y2="516" stroke="#4a4336" stroke-width="1"/>
<circle cx="881.8" cy="387" r="4.2" fill="none" stroke="#e81860" stroke-width="1.1"/>
<text x="881.8" y="389.6" fill="#f020f0" font-size="7" text-anchor="middle">8</text>
<line x1="1101.5" y1="391.2" x2="1101.5" y2="466" stroke="#4a4336" stroke-width="1"/>
<circle cx="1101.8" cy="387" r="4.2" fill="none" stroke="#e81860" stroke-width="1.1"/>
<text x="1101.8" y="389.6" fill="#f020f0" font-size="7" text-anchor="middle">3</text>
<line x1="1171.5" y1="391.2" x2="1171.5" y2="466" stroke="#4a4336" stroke-width="1"/>
<circle cx="1171" cy="387" r="4.2" fill="none" stroke="#e81860" stroke-width="1.1"/>
<text x="1171" y="389.6" fill="#f020f0" font-size="7" text-anchor="middle">1</text>
<path d="M869.4 433.9 L946.6 433.9 L976.9 416.5 L1079.3 416.5 L1109 433.9 L1183.8 433.9 L1183.8 464.5 L869.4 464.5 Z" fill="url(#roofh)"/>
<path d="M869.4 433.9 L946.6 433.9 L976.9 416.5 L1079.3 416.5 L1109 433.9 L1183.8 433.9 L1183.8 464.5 L869.4 464.5 Z" fill="none" stroke="#1fe6d2" stroke-width="1.8" stroke-linejoin="miter"/>
<line x1="869.4" y1="466.5" x2="1102" y2="466.5" stroke="#2ee62e" stroke-width="1.1"/>
<line x1="1102" y1="467" x2="1183.5" y2="467" stroke="#2ee62e" stroke-width="2.6"/>
<rect x="871.2" y="419.5" width="9" height="4.5" fill="#ff1414"/>
<rect x="871.2" y="425.5" width="9" height="4.5" fill="#ff1414"/>
<line x1="868.7" y1="425.5" x2="882.7" y2="425.5" stroke="#e8e8e8" stroke-width="0.8"/>
<line x1="868.5" y1="423" x2="868.5" y2="427" stroke="#c8c8c8" stroke-width="0.8"/>
<line x1="882.5" y1="423" x2="882.5" y2="427" stroke="#c8c8c8" stroke-width="0.8"/>
<rect x="1172.5" y="419.5" width="9" height="4.5" fill="#ff1414"/>
<rect x="1172.5" y="425.5" width="9" height="4.5" fill="#ff1414"/>
<line x1="1170.5" y1="425.5" x2="1183.5" y2="425.5" stroke="#e8e8e8" stroke-width="0.8"/>
<line x1="1170.5" y1="423" x2="1170.5" y2="427" stroke="#c8c8c8" stroke-width="0.8"/>
<line x1="1183.5" y1="423" x2="1183.5" y2="427" stroke="#c8c8c8" stroke-width="0.8"/>
<path d="M941 425.5 L947 425.5" fill="none" stroke="#12e6e6" stroke-width="1.2" stroke-linejoin="miter"/>
<path d="M941 425.5 L945 423.5" fill="none" stroke="#12e6e6" stroke-width="1" stroke-linejoin="miter"/>
<rect x="946" y="420.5" width="5" height="6" fill="#ff1414"/>
<line x1="880.5" y1="466" x2="880.5" y2="516" stroke="#ffffff" stroke-width="1.3"/>
<path d="M869.4 466 L869.4 472 L880 472" fill="none" stroke="#7fdede" stroke-width="1" stroke-linejoin="miter"/>
<line x1="862" y1="478.5" x2="881" y2="478.5" stroke="#ff1414" stroke-width="1"/>
<rect x="883.5" y="476.1" width="16.8" height="5.6" fill="#4a2a6a"/>
<line x1="885" y1="478.1" x2="898.8" y2="478.1" stroke="#f020f0" stroke-width="1.5"/>
<line x1="885" y1="480.5" x2="898.8" y2="480.5" stroke="#c060e0" stroke-width="1"/>
<rect x="882" y="474.6" width="19.8" height="8.6" fill="none" stroke="#f6f61e" stroke-width="1.6"/>
<circle cx="890.9" cy="487.4" r="2.6" fill="#ff1414"/>
<line x1="881" y1="506.6" x2="901" y2="506.6" stroke="#19e0e6" stroke-width="2"/>
<line x1="901.5" y1="466" x2="901.5" y2="516" stroke="#d0d0d0" stroke-width="0.8"/>
<line x1="925.5" y1="466" x2="925.5" y2="516" stroke="#f6f61e" stroke-width="1.3"/>
<line x1="928.5" y1="466" x2="928.5" y2="516" stroke="#f6f61e" stroke-width="1.3"/>
<line x1="901" y1="469.5" x2="925" y2="469.5" stroke="#ffffff" stroke-width="2.4"/>
<line x1="901" y1="474.6" x2="925" y2="474.6" stroke="#ffffff" stroke-width="2.4"/>
<line x1="901" y1="479.6" x2="925" y2="479.6" stroke="#ffffff" stroke-width="2.4"/>
<line x1="901" y1="485.4" x2="925" y2="485.4" stroke="#ffffff" stroke-width="2.4"/>
<line x1="901" y1="490.4" x2="925" y2="490.4" stroke="#ffffff" stroke-width="2.4"/>
<line x1="901" y1="495.5" x2="925" y2="495.5" stroke="#ffffff" stroke-width="2.4"/>
<line x1="901" y1="501.3" x2="925" y2="501.3" stroke="#ffffff" stroke-width="2.4"/>
<line x1="901" y1="506.3" x2="925" y2="506.3" stroke="#ffffff" stroke-width="2.4"/>
<line x1="901" y1="511.4" x2="925" y2="511.4" stroke="#ffffff" stroke-width="2.4"/>
<line x1="928.5" y1="507" x2="1018" y2="507" stroke="#f6f61e" stroke-width="2.4"/>
<rect x="953.9" y="476.1" width="16.4" height="29.4" fill="#33285a"/>
<rect x="954.4" y="476.6" width="7.2" height="28.4" fill="none" stroke="#d838d8" stroke-width="0.8"/>
<path d="M954.9 478.6 L960.6 490.8 L954.9 500" fill="none" stroke="#d070f0" stroke-width="1" stroke-linejoin="miter"/>
<rect x="962.6" y="476.6" width="7.2" height="28.4" fill="none" stroke="#d838d8" stroke-width="0.8"/>
<path d="M963.1 478.6 L968.8 490.8 L963.1 500" fill="none" stroke="#d070f0" stroke-width="1" stroke-linejoin="miter"/>
<line x1="953.9" y1="500.5" x2="970.3" y2="500.5" stroke="#f020f0" stroke-width="1.2"/>
<line x1="953.9" y1="479.5" x2="970.3" y2="479.5" stroke="#f020f0" stroke-width="1.2"/>
<rect x="952.4" y="474.6" width="19.4" height="32.4" fill="none" stroke="#f6f61e" stroke-width="2"/>
<rect x="952" y="487" width="8" height="6" fill="#ff1414"/>
<rect x="978.1" y="476.1" width="16" height="5.6" fill="#4a2a6a"/>
<line x1="979.6" y1="478.1" x2="992.6" y2="478.1" stroke="#f020f0" stroke-width="1.5"/>
<line x1="979.6" y1="480.5" x2="992.6" y2="480.5" stroke="#c060e0" stroke-width="1"/>
<rect x="976.6" y="474.6" width="19" height="8.6" fill="none" stroke="#f6f61e" stroke-width="1.6"/>
<circle cx="985.1" cy="487.4" r="2.6" fill="#ff1414"/>
<rect x="1000.7" y="476.1" width="15.8" height="29.4" fill="#33285a"/>
<rect x="1001.2" y="476.6" width="6.9" height="28.4" fill="none" stroke="#d838d8" stroke-width="0.8"/>
<path d="M1001.7 478.6 L1007.1 490.8 L1001.7 500" fill="none" stroke="#d070f0" stroke-width="1" stroke-linejoin="miter"/>
<rect x="1009.1" y="476.6" width="6.9" height="28.4" fill="none" stroke="#d838d8" stroke-width="0.8"/>
<path d="M1009.6 478.6 L1015 490.8 L1009.6 500" fill="none" stroke="#d070f0" stroke-width="1" stroke-linejoin="miter"/>
<line x1="1000.7" y1="500.5" x2="1016.5" y2="500.5" stroke="#f020f0" stroke-width="1.2"/>
<line x1="1000.7" y1="479.5" x2="1016.5" y2="479.5" stroke="#f020f0" stroke-width="1.2"/>
<rect x="999.2" y="474.6" width="18.8" height="32.4" fill="none" stroke="#f6f61e" stroke-width="2"/>
<rect x="999" y="487" width="8" height="6" fill="#ff1414"/>
<line x1="1018" y1="466" x2="1018" y2="516" stroke="#f6f61e" stroke-width="2.4"/>
<line x1="1028" y1="466.5" x2="1028" y2="474.6" stroke="#ffffff" stroke-width="1.6"/>
<line x1="1028" y1="507" x2="1028" y2="516" stroke="#ffffff" stroke-width="1.6"/>
<line x1="1041" y1="466.5" x2="1041" y2="474.6" stroke="#ffffff" stroke-width="1.6"/>
<line x1="1041" y1="507" x2="1041" y2="516" stroke="#ffffff" stroke-width="1.6"/>
<line x1="1054.8" y1="466.5" x2="1054.8" y2="474.6" stroke="#ffffff" stroke-width="1.6"/>
<line x1="1054.8" y1="507" x2="1054.8" y2="516" stroke="#ffffff" stroke-width="1.6"/>
<line x1="1067.8" y1="466.5" x2="1067.8" y2="474.6" stroke="#ffffff" stroke-width="1.6"/>
<line x1="1067.8" y1="507" x2="1067.8" y2="516" stroke="#ffffff" stroke-width="1.6"/>
<line x1="1081.5" y1="466.5" x2="1081.5" y2="474.6" stroke="#ffffff" stroke-width="1.6"/>
<line x1="1081.5" y1="507" x2="1081.5" y2="516" stroke="#ffffff" stroke-width="1.6"/>
<line x1="1094.5" y1="466.5" x2="1094.5" y2="474.6" stroke="#ffffff" stroke-width="1.6"/>
<line x1="1094.5" y1="507" x2="1094.5" y2="516" stroke="#ffffff" stroke-width="1.6"/>
<line x1="1018" y1="474.6" x2="1102" y2="474.6" stroke="#ffffff" stroke-width="1.4"/>
<line x1="1018" y1="507" x2="1102" y2="507" stroke="#ffffff" stroke-width="1.4"/>
<line x1="1018" y1="511.5" x2="1102" y2="511.5" stroke="#ffffff" stroke-width="1"/>
<rect x="1058.5" y="476.1" width="23.7" height="29.4" fill="#33285a"/>
<rect x="1059" y="476.6" width="6.9" height="28.4" fill="none" stroke="#d838d8" stroke-width="0.8"/>
<path d="M1059.5 478.6 L1064.9 490.8 L1059.5 500" fill="none" stroke="#d070f0" stroke-width="1" stroke-linejoin="miter"/>
<rect x="1066.9" y="476.6" width="6.9" height="28.4" fill="none" stroke="#d838d8" stroke-width="0.8"/>
<path d="M1067.4 478.6 L1072.8 490.8 L1067.4 500" fill="none" stroke="#d070f0" stroke-width="1" stroke-linejoin="miter"/>
<rect x="1074.8" y="476.6" width="6.9" height="28.4" fill="none" stroke="#d838d8" stroke-width="0.8"/>
<path d="M1075.3 478.6 L1080.7 490.8 L1075.3 500" fill="none" stroke="#d070f0" stroke-width="1" stroke-linejoin="miter"/>
<line x1="1058.5" y1="500.5" x2="1082.2" y2="500.5" stroke="#f020f0" stroke-width="1.2"/>
<line x1="1058.5" y1="479.5" x2="1082.2" y2="479.5" stroke="#f020f0" stroke-width="1.2"/>
<rect x="1057" y="474.6" width="26.7" height="32.4" fill="none" stroke="#f6f61e" stroke-width="2"/>
<rect x="1065" y="487" width="8" height="6" fill="#ff1414"/>
<line x1="1084.5" y1="479.6" x2="1095" y2="479.6" stroke="#ffffff" stroke-width="1.6"/>
<line x1="1084.5" y1="485.4" x2="1095" y2="485.4" stroke="#ffffff" stroke-width="1.6"/>
<line x1="1084.5" y1="490.4" x2="1095" y2="490.4" stroke="#ffffff" stroke-width="1.6"/>
<line x1="1084.5" y1="495.5" x2="1095" y2="495.5" stroke="#ffffff" stroke-width="1.6"/>
<line x1="1084.5" y1="501.3" x2="1095" y2="501.3" stroke="#ffffff" stroke-width="1.6"/>
<line x1="1090.5" y1="474.6" x2="1090.5" y2="507" stroke="#ffffff" stroke-width="1"/>
<rect x="1094.6" y="475.3" width="8.4" height="31" fill="none" stroke="#f020f0" stroke-width="2"/>
<rect x="1096" y="493" width="6" height="5" fill="#ff1414"/>
<line x1="1102.5" y1="466" x2="1102.5" y2="516" stroke="#19d6e6" stroke-width="1.2"/>
<line x1="1167.5" y1="467" x2="1167.5" y2="516" stroke="#2ee62e" stroke-width="1.3"/>
<line x1="1174.5" y1="467" x2="1174.5" y2="516" stroke="#2ee62e" stroke-width="1.3"/>
<text x="929" y="524" fill="#e040f0" font-size="8.2" textLength="52" lengthAdjust="spacingAndGlyphs">LEFT ELEVATION</text>
<rect x="929" y="526.5" width="33" height="3" fill="#ff1414"/>
<line x1="489.5" y1="668.5" x2="1261" y2="668.5" stroke="#3c3d39" stroke-width="1" stroke-dasharray="7 1.500"/>
<line x1="489.5" y1="714.5" x2="575" y2="714.5" stroke="#3c3d39" stroke-width="1" stroke-dasharray="7 1.500"/>
<line x1="757" y1="714.5" x2="900" y2="714.5" stroke="#3c3d39" stroke-width="1" stroke-dasharray="7 1.500"/>
<line x1="1170" y1="714.5" x2="1261" y2="714.5" stroke="#3c3d39" stroke-width="1" stroke-dasharray="7 1.500"/>
<line x1="489.5" y1="762.5" x2="585" y2="762.5" stroke="#3c3d39" stroke-width="1" stroke-dasharray="7 1.500"/>
<line x1="1158" y1="762.5" x2="1261" y2="762.5" stroke="#3c3d39" stroke-width="1" stroke-dasharray="7 1.500"/>
<line x1="757" y1="762.5" x2="887" y2="762.5" stroke="#3c3d39" stroke-width="1" stroke-dasharray="7 1.500"/>
<line x1="485" y1="769.5" x2="583" y2="769.5" stroke="#ff1414" stroke-width="1.2"/>
<line x1="757" y1="770.5" x2="872" y2="770.5" stroke="#ff1414" stroke-width="1.2"/>
<line x1="1171.8" y1="769.5" x2="1262" y2="769.5" stroke="#ff1414" stroke-width="1.2"/>
<line x1="489.5" y1="668.2" x2="489.5" y2="769" stroke="#b4b4b4" stroke-width="1"/>
<line x1="1261.5" y1="668.2" x2="1261.5" y2="769" stroke="#b4b4b4" stroke-width="1"/>
<line x1="487" y1="669.7" x2="492" y2="666.7" stroke="#bdbdbd" stroke-width="1"/>
<line x1="487" y1="715.9" x2="492" y2="712.9" stroke="#bdbdbd" stroke-width="1"/>
<line x1="487" y1="770.5" x2="492" y2="767.5" stroke="#bdbdbd" stroke-width="1"/>
<line x1="1258.5" y1="669.7" x2="1263.5" y2="666.7" stroke="#bdbdbd" stroke-width="1"/>
<line x1="1258.5" y1="715.9" x2="1263.5" y2="712.9" stroke="#bdbdbd" stroke-width="1"/>
<line x1="1258.5" y1="770.5" x2="1263.5" y2="767.5" stroke="#bdbdbd" stroke-width="1"/>
<rect x="483" y="685.5" width="10" height="11" fill="#ff1414"/>
<rect x="483" y="732" width="10" height="11" fill="#ff1414"/>
<rect x="483" y="761.8" width="10" height="8.5" fill="#ff1414"/>
<rect x="1254" y="685.5" width="10" height="11" fill="#ff1414"/>
<rect x="1254" y="732" width="10" height="11" fill="#ff1414"/>
<rect x="1254" y="761.8" width="10" height="8.5" fill="#ff1414"/>
<path d="M495 663.8 L499 663.8 L497 667.3 Z" fill="none" stroke="#19e6e6" stroke-width="0.7" stroke-linejoin="miter"/>
<text x="499.5" y="667.8" fill="#19e6e6" font-size="6.2" textLength="31.5" lengthAdjust="spacingAndGlyphs" font-weight="bold" stroke="#19e6e6" stroke-width="0.35">TOP ROOF LEVEL</text>
<path d="M495 709.8 L499 709.8 L497 713.3 Z" fill="none" stroke="#19e6e6" stroke-width="0.7" stroke-linejoin="miter"/>
<text x="499.5" y="713.8" fill="#19e6e6" font-size="6.2" textLength="54.5" lengthAdjust="spacingAndGlyphs" font-weight="bold" stroke="#19e6e6" stroke-width="0.35">FIRST FLOOR LEVEL 104.110</text>
<path d="M495 757.8 L499 757.8 L497 761.3 Z" fill="none" stroke="#19e6e6" stroke-width="0.7" stroke-linejoin="miter"/>
<text x="499.5" y="761.8" fill="#19e6e6" font-size="6.2" textLength="41.5" lengthAdjust="spacingAndGlyphs" font-weight="bold" stroke="#19e6e6" stroke-width="0.35">FLOOR LEVEL 100.457</text>
<path d="M495 764.6 L499 764.6 L497 768.1 Z" fill="none" stroke="#19e6e6" stroke-width="0.7" stroke-linejoin="miter"/>
<text x="499.5" y="768.6" fill="#19e6e6" font-size="6.2" textLength="36.5" lengthAdjust="spacingAndGlyphs" font-weight="bold" stroke="#19e6e6" stroke-width="0.35">GRD. LEVEL 100.00</text>
<text x="1217" y="667.8" fill="#19e6e6" font-size="6.2" textLength="34" lengthAdjust="spacingAndGlyphs" font-weight="bold" stroke="#19e6e6" stroke-width="0.35">TOP ROOF LEVEL</text>
<path d="M1252 663.8 L1256 663.8 L1254 667.3 Z" fill="none" stroke="#19e6e6" stroke-width="0.7" stroke-linejoin="miter"/>
<text x="1196" y="713.8" fill="#19e6e6" font-size="6.2" textLength="55" lengthAdjust="spacingAndGlyphs" font-weight="bold" stroke="#19e6e6" stroke-width="0.35">FIRST FLOOR LEVEL 104.110</text>
<path d="M1252 709.8 L1256 709.8 L1254 713.3 Z" fill="none" stroke="#19e6e6" stroke-width="0.7" stroke-linejoin="miter"/>
<text x="1208" y="761.8" fill="#19e6e6" font-size="6.2" textLength="43" lengthAdjust="spacingAndGlyphs" font-weight="bold" stroke="#19e6e6" stroke-width="0.35">FLOOR LEVEL 100.457</text>
<path d="M1252 757.8 L1256 757.8 L1254 761.3 Z" fill="none" stroke="#19e6e6" stroke-width="0.7" stroke-linejoin="miter"/>
<text x="1213" y="768.6" fill="#19e6e6" font-size="6.2" textLength="36" lengthAdjust="spacingAndGlyphs" font-weight="bold" stroke="#19e6e6" stroke-width="0.35">GRD. LEVEL 100.00</text>
<path d="M1250 764.6 L1254 764.6 L1252 768.1 Z" fill="none" stroke="#19e6e6" stroke-width="0.7" stroke-linejoin="miter"/>
<line x1="585.5" y1="649.8" x2="585.5" y2="800" stroke="#4a4336" stroke-width="1"/>
<circle cx="585.4" cy="645.6" r="4.2" fill="none" stroke="#e81860" stroke-width="1.1"/>
<text x="585.4" y="648.2" fill="#f020f0" font-size="7" text-anchor="middle">A</text>
<line x1="667.5" y1="649.8" x2="667.5" y2="800" stroke="#4a4336" stroke-width="1"/>
<circle cx="667" cy="645.6" r="4.2" fill="none" stroke="#e81860" stroke-width="1.1"/>
<text x="667" y="648.2" fill="#f020f0" font-size="7" text-anchor="middle">E</text>
<line x1="711.5" y1="649.8" x2="711.5" y2="800" stroke="#4a4336" stroke-width="1"/>
<circle cx="711.5" cy="645.6" r="4.2" fill="none" stroke="#e81860" stroke-width="1.1"/>
<text x="711.5" y="648.2" fill="#f020f0" font-size="7" text-anchor="middle">G</text>
<line x1="744.5" y1="649.8" x2="744.5" y2="800" stroke="#4a4336" stroke-width="1"/>
<circle cx="744" cy="645.6" r="4.2" fill="none" stroke="#e81860" stroke-width="1.1"/>
<text x="744" y="648.2" fill="#f020f0" font-size="7" text-anchor="middle">I</text>
<rect x="585" y="711.5" width="172" height="4" fill="#2a5a36"/>
<line x1="607" y1="697.4" x2="607" y2="713" stroke="#2a5e36" stroke-width="1.6"/>
<line x1="630" y1="683.9" x2="630" y2="713" stroke="#2a5e36" stroke-width="1.6"/>
<line x1="656" y1="669" x2="656" y2="713" stroke="#2a5e36" stroke-width="1.6"/>
<line x1="681" y1="683.5" x2="681" y2="713" stroke="#2a5e36" stroke-width="1.6"/>
<path d="M596 713 L607 699 L607 713 L630 686 L630 713 L656 671 L681 713 L681 685 L700 713 L706 699" fill="none" stroke="#2a5e36" stroke-width="1.6" stroke-linejoin="miter"/>
<line x1="643" y1="676.5" x2="669" y2="676.5" stroke="#1fe6d2" stroke-width="1"/>
<rect x="711" y="688" width="45" height="13" fill="url(#roofh)" opacity="0.7"/>
<line x1="716.5" y1="702" x2="716.5" y2="713" stroke="#2a5e36" stroke-width="1.3"/>
<line x1="722.5" y1="702" x2="722.5" y2="713" stroke="#2a5e36" stroke-width="1.3"/>
<line x1="728.5" y1="702" x2="728.5" y2="713" stroke="#2a5e36" stroke-width="1.3"/>
<line x1="734.5" y1="702" x2="734.5" y2="713" stroke="#2a5e36" stroke-width="1.3"/>
<line x1="740.5" y1="702" x2="740.5" y2="713" stroke="#2a5e36" stroke-width="1.3"/>
<line x1="746.5" y1="702" x2="746.5" y2="713" stroke="#2a5e36" stroke-width="1.3"/>
<line x1="752.5" y1="702" x2="752.5" y2="713" stroke="#2a5e36" stroke-width="1.3"/>
<path d="M573 717.3 L656 668.7 L710.5 701" fill="none" stroke="#1fe6d2" stroke-width="1.6" stroke-linejoin="miter"/>
<path d="M572 716 L574 719 L577 717.5" fill="none" stroke="#1fe6d2" stroke-width="1" stroke-linejoin="miter"/>
<path d="M691 687 L756.4 687 L756.4 717" fill="none" stroke="#1fe6d2" stroke-width="1.5" stroke-linejoin="miter"/>
<line x1="710.5" y1="701.5" x2="756" y2="701.5" stroke="#1fe6d2" stroke-width="1.3" stroke-dasharray="4 2"/>
<path d="M756.4 717 L752 720.5 L746 721" fill="none" stroke="#c8f050" stroke-width="1" stroke-linejoin="miter"/>
<line x1="585.4" y1="717.3" x2="757" y2="717.3" stroke="#e01818" stroke-width="2.6"/>
<line x1="584.5" y1="717.3" x2="584.5" y2="765" stroke="#19d6e6" stroke-width="1.2"/>
<line x1="586.5" y1="717.3" x2="586.5" y2="765" stroke="#19d6e6" stroke-width="1.2"/>
<line x1="666.5" y1="717.3" x2="666.5" y2="765" stroke="#19d6e6" stroke-width="1.2"/>
<line x1="668.5" y1="717.3" x2="668.5" y2="765" stroke="#19d6e6" stroke-width="1.2"/>
<line x1="647.5" y1="719" x2="647.5" y2="763" stroke="#19d6e6" stroke-width="1.2"/>
<line x1="583.5" y1="725" x2="583.5" y2="765" stroke="#c8f050" stroke-width="1.2"/>
<line x1="710.5" y1="719" x2="710.5" y2="734" stroke="#19d6e6" stroke-width="1.2"/>
<line x1="743.5" y1="719" x2="743.5" y2="766" stroke="#19d6e6" stroke-width="1.2"/>
<line x1="746.5" y1="722" x2="746.5" y2="766" stroke="#19d6e6" stroke-width="1.2"/>
<rect x="745.5" y="729" width="2.5" height="8" fill="#ffffff"/>
<rect x="585" y="762.5" width="162" height="4.1" fill="#1414d8"/>
<rect x="606.4" y="763" width="8" height="5" fill="#f020f0"/>
<rect x="655" y="763" width="8" height="5" fill="#f020f0"/>
<rect x="686" y="763" width="8" height="5" fill="#f020f0"/>
<rect x="708" y="763" width="8" height="5" fill="#f020f0"/>
<rect x="730" y="763" width="8" height="5" fill="#f020f0"/>
<path d="M602.4 724.1 L605.6 718.6 L608.8 724.1 Z" fill="none" stroke="#f8c81e" stroke-width="1.3" stroke-linejoin="miter"/>
<path d="M673.1 724.1 L676.3 718.6 L679.5 724.1 Z" fill="none" stroke="#f8c81e" stroke-width="1.3" stroke-linejoin="miter"/>
<path d="M713.3 724.1 L716.5 718.6 L719.7 724.1 Z" fill="none" stroke="#f8c81e" stroke-width="1.3" stroke-linejoin="miter"/>
<text x="616" y="723" fill="#f6f61e" font-size="5.5" textLength="17" lengthAdjust="spacingAndGlyphs">LIVING</text>
<text x="619" y="728" fill="#f6f61e" font-size="5.5" textLength="12" lengthAdjust="spacingAndGlyphs">AREA</text>
<text x="685" y="723" fill="#f6f61e" font-size="5.5" textLength="18" lengthAdjust="spacingAndGlyphs">MASTER</text>
<text x="681" y="728" fill="#f6f61e" font-size="5.5" textLength="26" lengthAdjust="spacingAndGlyphs">BEDROOM</text>
<text x="721" y="723" fill="#f6f61e" font-size="5.5" textLength="17" lengthAdjust="spacingAndGlyphs">BATH 1</text>
<rect x="615" y="731.7" width="19.5" height="4.3" fill="#f6e040"/>
<line x1="615" y1="731.5" x2="634.5" y2="731.5" stroke="#f060c0" stroke-width="0.8"/>
<line x1="615" y1="736.5" x2="634.5" y2="736.5" stroke="#f060c0" stroke-width="0.8"/>
<rect x="622.8" y="729.7" width="4" height="1.6" fill="#f020f0"/>
<rect x="683.5" y="731.7" width="20.2" height="4.3" fill="#f6e040"/>
<line x1="683.5" y1="731.5" x2="703.7" y2="731.5" stroke="#f060c0" stroke-width="0.8"/>
<line x1="683.5" y1="736.5" x2="703.7" y2="736.5" stroke="#f060c0" stroke-width="0.8"/>
<rect x="691.6" y="729.7" width="4" height="1.6" fill="#f020f0"/>
<rect x="726" y="723.5" width="5" height="3.5" fill="#f020f0"/>
<rect x="652.5" y="734.6" width="29.5" height="28.9" fill="none" stroke="#f020f0" stroke-width="1.8"/>
<rect x="654" y="736" width="12" height="26" fill="none" stroke="#c050e0" stroke-width="0.8"/>
<line x1="654" y1="736" x2="666" y2="762" stroke="#d8a0e8" stroke-width="0.8"/>
<line x1="666" y1="736" x2="654" y2="762" stroke="#d8a0e8" stroke-width="0.8"/>
<rect x="669.5" y="736" width="11.5" height="26" fill="none" stroke="#c050e0" stroke-width="0.8"/>
<line x1="669.5" y1="736" x2="681" y2="762" stroke="#d8a0e8" stroke-width="0.8"/>
<line x1="681" y1="736" x2="669.5" y2="762" stroke="#d8a0e8" stroke-width="0.8"/>
<circle cx="659" cy="748.8" r="2.6" fill="#ff1414"/>
<circle cx="675" cy="748.8" r="2.6" fill="#ff1414"/>
<rect x="704.5" y="742.5" width="7" height="6" fill="#ff1414"/>
<rect x="713.4" y="734" width="27.6" height="28.5" fill="url(#tileh)"/>
<rect x="710.5" y="734" width="2.7" height="29" fill="#f020f0"/>
<circle cx="751" cy="742.5" r="2.5" fill="#ff1414"/>
<text x="509.7" y="736" fill="#ff1414" font-size="6.2" textLength="35" lengthAdjust="spacingAndGlyphs" font-weight="bold" stroke="#ff1414" stroke-width="0.35">4" x 4" rc coping</text>
<text x="511" y="741.5" fill="#ff1414" font-size="6.2" textLength="30" lengthAdjust="spacingAndGlyphs" font-weight="bold" stroke="#ff1414" stroke-width="0.35">to engr's detail</text>
<line x1="546" y1="735.5" x2="583" y2="735.5" stroke="#ff1414" stroke-width="1"/>
<path d="M596 686 L602 686" fill="none" stroke="#12e6e6" stroke-width="1.2" stroke-linejoin="miter"/>
<path d="M596 686 L600 684" fill="none" stroke="#12e6e6" stroke-width="1" stroke-linejoin="miter"/>
<rect x="601" y="681" width="5" height="6" fill="#ff1414"/>
<rect x="574.5" y="693.5" width="9" height="4.5" fill="#ff1414"/>
<rect x="574.5" y="699.5" width="9" height="4.5" fill="#ff1414"/>
<line x1="572.5" y1="699.5" x2="585.5" y2="699.5" stroke="#e8e8e8" stroke-width="0.8"/>
<line x1="572.5" y1="697" x2="572.5" y2="701" stroke="#c8c8c8" stroke-width="0.8"/>
<line x1="585.5" y1="697" x2="585.5" y2="701" stroke="#c8c8c8" stroke-width="0.8"/>
<rect x="746" y="652.5" width="9" height="4.5" fill="#ff1414"/>
<rect x="746" y="658.5" width="9" height="4.5" fill="#ff1414"/>
<line x1="744" y1="658.5" x2="757" y2="658.5" stroke="#e8e8e8" stroke-width="0.8"/>
<line x1="744.5" y1="656" x2="744.5" y2="660" stroke="#c8c8c8" stroke-width="0.8"/>
<line x1="757.5" y1="656" x2="757.5" y2="660" stroke="#c8c8c8" stroke-width="0.8"/>
<path d="M765 621 L677.3 621 L677.3 700" fill="none" stroke="#ff1414" stroke-width="1.1" stroke-linejoin="miter"/>
<path d="M675.5 695 L677.3 701 L679.1 695 Z" fill="#ff1414"/>
<path d="M583.4 769.6 L583.4 781.8 L576.9 781.8 L576.9 786 L593.9 786 L593.9 781.8 L587.4 781.8 L587.4 769.6 Z" fill="none" stroke="#d6fa4c" stroke-width="1.3" stroke-linejoin="miter"/>
<path d="M582.4 780 L585.9 774 L584.9 777 L588.4 772" fill="none" stroke="#f6f61e" stroke-width="1" stroke-linejoin="miter"/>
<line x1="585.5" y1="786" x2="585.5" y2="804" stroke="#b4b4b4" stroke-width="0.9"/>
<path d="M665 769.6 L665 781.8 L658.5 781.8 L658.5 786 L675.5 786 L675.5 781.8 L669 781.8 L669 769.6 Z" fill="none" stroke="#d6fa4c" stroke-width="1.3" stroke-linejoin="miter"/>
<path d="M664 780 L667.5 774 L666.5 777 L670 772" fill="none" stroke="#f6f61e" stroke-width="1" stroke-linejoin="miter"/>
<line x1="667.5" y1="786" x2="667.5" y2="804" stroke="#b4b4b4" stroke-width="0.9"/>
<path d="M709.5 769.6 L709.5 781.8 L703 781.8 L703 786 L720 786 L720 781.8 L713.5 781.8 L713.5 769.6 Z" fill="none" stroke="#d6fa4c" stroke-width="1.3" stroke-linejoin="miter"/>
<path d="M708.5 780 L712 774 L711 777 L714.5 772" fill="none" stroke="#f6f61e" stroke-width="1" stroke-linejoin="miter"/>
<line x1="711.5" y1="786" x2="711.5" y2="804" stroke="#b4b4b4" stroke-width="0.9"/>
<path d="M742 769.6 L742 781.8 L735.5 781.8 L735.5 786 L752.5 786 L752.5 781.8 L746 781.8 L746 769.6 Z" fill="none" stroke="#d6fa4c" stroke-width="1.3" stroke-linejoin="miter"/>
<path d="M741 780 L744.5 774 L743.5 777 L747 772" fill="none" stroke="#f6f61e" stroke-width="1" stroke-linejoin="miter"/>
<line x1="744.5" y1="786" x2="744.5" y2="804" stroke="#b4b4b4" stroke-width="0.9"/>
<path d="M570 769.2 L583 769.2" fill="none" stroke="#19d6e6" stroke-width="1" stroke-linejoin="miter"/>
<path d="M571 769.5 L572 772 L576 772 L577 769.5" fill="none" stroke="#19d6e6" stroke-width="0.9" stroke-linejoin="miter"/>
<path d="M748 769.8 L759 769.8" fill="none" stroke="#19d6e6" stroke-width="1" stroke-linejoin="miter"/>
<path d="M754 770 L755 772.5 L758.5 772.5 L759.5 770" fill="none" stroke="#19d6e6" stroke-width="0.9" stroke-linejoin="miter"/>
<line x1="585.4" y1="793.5" x2="744" y2="793.5" stroke="#b0b0b0" stroke-width="1"/>
<line x1="585.4" y1="803.5" x2="744" y2="803.5" stroke="#b0b0b0" stroke-width="1"/>
<line x1="583.4" y1="795.3" x2="587.4" y2="792.3" stroke="#c8c8c8" stroke-width="1"/>
<line x1="665" y1="795.3" x2="669" y2="792.3" stroke="#c8c8c8" stroke-width="1"/>
<line x1="709.5" y1="795.3" x2="713.5" y2="792.3" stroke="#c8c8c8" stroke-width="1"/>
<line x1="742" y1="795.3" x2="746" y2="792.3" stroke="#c8c8c8" stroke-width="1"/>
<line x1="585.5" y1="788" x2="585.5" y2="806" stroke="#b4b4b4" stroke-width="0.9"/>
<line x1="583.4" y1="804.7" x2="587.4" y2="801.7" stroke="#c8c8c8" stroke-width="1"/>
<line x1="744.5" y1="788" x2="744.5" y2="806" stroke="#b4b4b4" stroke-width="0.9"/>
<line x1="742" y1="804.7" x2="746" y2="801.7" stroke="#c8c8c8" stroke-width="1"/>
<rect x="620.8" y="788.8" width="9.5" height="10.5" fill="#ff1414"/>
<rect x="684.2" y="788.8" width="9.5" height="10.5" fill="#ff1414"/>
<rect x="723.2" y="788.8" width="9.5" height="10.5" fill="#ff1414"/>
<rect x="659" y="798.5" width="11" height="4.5" fill="#ff1414"/>
<rect x="658" y="804" width="13" height="4.5" fill="#ff1414"/>
<text x="598.7" y="817.5" fill="#e040f0" font-size="8" textLength="40" lengthAdjust="spacingAndGlyphs">SECTION A-A</text>
<rect x="598.7" y="819.5" width="33" height="3.5" fill="#ff1414"/>
<rect x="765.3" y="597.2" width="90.7" height="59.2" fill="none" stroke="#19d6e6" stroke-width="1.3"/>
<text x="769" y="608" fill="#c01818" font-size="5.6" textLength="46" lengthAdjust="spacingAndGlyphs" font-weight="bold" stroke="#c01818" stroke-width="0.35">ROOF CONSTRUCTION</text>
<text x="769" y="613.5" fill="#ff1414" font-size="6" textLength="42" lengthAdjust="spacingAndGlyphs" font-weight="bold" stroke="#ff1414" stroke-width="0.35">Conc. interlocking tiles</text>
<text x="769" y="618.8" fill="#ff1414" font-size="6" textLength="50" lengthAdjust="spacingAndGlyphs" font-weight="bold" stroke="#ff1414" stroke-width="0.35">(Color: To Arch's Sel.) on 1" x 1½"</text>
<text x="769" y="624" fill="#ff1414" font-size="6" textLength="52" lengthAdjust="spacingAndGlyphs" font-weight="bold" stroke="#ff1414" stroke-width="0.35">2" x 2" t.p.t. battens at 12" c/c</text>
<text x="769" y="629.2" fill="#ff1414" font-size="6" textLength="76" lengthAdjust="spacingAndGlyphs" font-weight="bold" stroke="#ff1414" stroke-width="0.35">2" x 6" t.p.t. rafters @ 2'-0" c/c</text>
<text x="769" y="634.5" fill="#ff1414" font-size="6" textLength="66" lengthAdjust="spacingAndGlyphs" font-weight="bold" stroke="#ff1414" stroke-width="0.35">2" x 4" t.p.t. purlins @ 4'-0" c/c</text>
<text x="769" y="639.8" fill="#ff1414" font-size="6" textLength="72" lengthAdjust="spacingAndGlyphs" font-weight="bold" stroke="#ff1414" stroke-width="0.35">4" x 6" t.p.t. struts @ 4'-0" c/c</text>
<text x="769" y="645" fill="#ff1414" font-size="6" textLength="40" lengthAdjust="spacingAndGlyphs" font-weight="bold" stroke="#ff1414" stroke-width="0.35">2" x 9" t.p.t. ridge</text>
<text x="769" y="650.2" fill="#ff1414" font-size="6" textLength="48" lengthAdjust="spacingAndGlyphs" font-weight="bold" stroke="#ff1414" stroke-width="0.35">1" x 9" t.p.t. fascia board</text>
<line x1="856" y1="624.5" x2="962" y2="624.5" stroke="#ff1414" stroke-width="1.1"/>
<line x1="962.5" y1="622" x2="962.5" y2="701" stroke="#ff1414" stroke-width="1.1"/>
<path d="M960.7 696 L962.5 702 L964.3 696 Z" fill="#ff1414"/>
<rect x="768.2" y="669.4" width="71.4" height="15.1" fill="none" stroke="#19d6e6" stroke-width="1.3"/>
<text x="771.5" y="675.5" fill="#b01818" font-size="5.6" textLength="52" lengthAdjust="spacingAndGlyphs" font-weight="bold" stroke="#b01818" stroke-width="0.35">CEILING CONSTRUCTION</text>
<text x="771.5" y="681.5" fill="#ff1414" font-size="6" textLength="59" lengthAdjust="spacingAndGlyphs" font-weight="bold" stroke="#ff1414" stroke-width="0.35">Ceiling plaster to owner's choice</text>
<path d="M831.4 676.2 L834.6 670.8 L837.8 676.2 Z" fill="none" stroke="#f8c81e" stroke-width="1.2" stroke-linejoin="miter"/>
<path d="M768 678 L725 678 L725 715" fill="none" stroke="#ff1414" stroke-width="1.1" stroke-linejoin="miter"/>
<line x1="839.6" y1="677.5" x2="947.7" y2="677.5" stroke="#ff1414" stroke-width="1.1"/>
<line x1="947.5" y1="677.3" x2="947.5" y2="696" stroke="#ff1414" stroke-width="1.1"/>
<text x="770.5" y="694" fill="#ff1414" font-size="6.2" textLength="56" lengthAdjust="spacingAndGlyphs" font-weight="bold" stroke="#ff1414" stroke-width="0.35">Exposed water tank outline</text>
<line x1="828" y1="691.5" x2="941" y2="691.5" stroke="#ff1414" stroke-width="1.1"/>
<line x1="759.5" y1="704.5" x2="769" y2="704.5" stroke="#ff1414" stroke-width="1.1"/>
<text x="770.5" y="706.8" fill="#ff1414" font-size="6.2" textLength="58" lengthAdjust="spacingAndGlyphs" font-weight="bold" stroke="#ff1414" stroke-width="0.35">Rc. roof beam to engr's detail</text>
<line x1="830" y1="704.5" x2="897" y2="704.5" stroke="#ff1414" stroke-width="1.1"/>
<line x1="896.5" y1="704.6" x2="896.5" y2="725" stroke="#ff1414" stroke-width="1.1"/>
<line x1="746.6" y1="721.5" x2="768" y2="721.5" stroke="#ff1414" stroke-width="1.1"/>
<text x="770.5" y="723" fill="#ff1414" font-size="6.2" textLength="59" lengthAdjust="spacingAndGlyphs" font-weight="bold" stroke="#ff1414" stroke-width="0.35">7" high rubble granite wall tiles</text>
<text x="770.5" y="729" fill="#ff1414" font-size="6.2" textLength="56" lengthAdjust="spacingAndGlyphs" font-weight="bold" stroke="#ff1414" stroke-width="0.35">to be cement internally finish</text>
<path d="M746.6 747.6 L761 739.7 L770 739.7" fill="none" stroke="#ff1414" stroke-width="1.1" stroke-linejoin="miter"/>
<text x="770.5" y="740.5" fill="#ff1414" font-size="6.2" textLength="69" lengthAdjust="spacingAndGlyphs" font-weight="bold" stroke="#ff1414" stroke-width="0.35">4 1/2"  cement screeded with 3/4"</text>
<text x="770.5" y="746" fill="#ff1414" font-size="6.2" textLength="52" lengthAdjust="spacingAndGlyphs" font-weight="bold" stroke="#ff1414" stroke-width="0.35">thk. plastered on both sides</text>
<path d="M770 754.8 L756.4 754.8 L756.4 767.8" fill="none" stroke="#ff1414" stroke-width="1.1" stroke-linejoin="miter"/>
<text x="770.5" y="756.5" fill="#ff1414" font-size="6.2" textLength="60" lengthAdjust="spacingAndGlyphs" font-weight="bold" stroke="#ff1414" stroke-width="0.35">6" th half round gradient to be</text>
<text x="770.5" y="762" fill="#ff1414" font-size="6.2" textLength="50" lengthAdjust="spacingAndGlyphs" font-weight="bold" stroke="#ff1414" stroke-width="0.35">finished with gutter to</text>
<text x="770.5" y="767.5" fill="#ff1414" font-size="6.2" textLength="33" lengthAdjust="spacingAndGlyphs" font-weight="bold" stroke="#ff1414" stroke-width="0.35">Rc. FLOOR details</text>
<path d="M752.4 781.5 L759.6 773.6 L770 773.6" fill="none" stroke="#9a9a9a" stroke-width="1" stroke-linejoin="miter"/>
<text x="770.5" y="775.5" fill="#ff1414" font-size="6.2" textLength="57" lengthAdjust="spacingAndGlyphs" font-weight="bold" stroke="#ff1414" stroke-width="0.35">Rc rc footing to engr's detail</text>
<line x1="830" y1="773.5" x2="863" y2="773.5" stroke="#ff1414" stroke-width="1.1"/>
<path d="M863 773.6 L870 781 L880 782" fill="none" stroke="#ff1414" stroke-width="1.1" stroke-linejoin="miter"/>
<rect x="769.2" y="795.2" width="62.5" height="38.3" fill="none" stroke="#19d6e6" stroke-width="1.3"/>
<text x="772" y="802" fill="#c01818" font-size="5.6" textLength="48" lengthAdjust="spacingAndGlyphs" font-weight="bold" stroke="#c01818" stroke-width="0.35">FLOOR CONSTRUCTION</text>
<text x="772" y="808" fill="#ff1414" font-size="6" textLength="40" lengthAdjust="spacingAndGlyphs" font-weight="bold" stroke="#ff1414" stroke-width="0.35">4" thk. conc. slab with</text>
<text x="772" y="813.5" fill="#ff1414" font-size="6" textLength="52" lengthAdjust="spacingAndGlyphs" font-weight="bold" stroke="#ff1414" stroke-width="0.35">one layer of A10 BRC 4" thk</text>
<text x="772" y="819" fill="#ff1414" font-size="6" textLength="53" lengthAdjust="spacingAndGlyphs" font-weight="bold" stroke="#ff1414" stroke-width="0.35">hardcore well compacted in 6"</text>
<text x="772" y="824.5" fill="#ff1414" font-size="6" textLength="38" lengthAdjust="spacingAndGlyphs" font-weight="bold" stroke="#ff1414" stroke-width="0.35">( refer to engr's detail )</text>
<path d="M722.3 764 L722.3 814.7 L769 814.7" fill="none" stroke="#a8a8a8" stroke-width="1" stroke-linejoin="miter"/>
<path d="M832 812.3 L943.7 812.3 L943.7 764" fill="none" stroke="#a8a8a8" stroke-width="1" stroke-linejoin="miter"/>
<line x1="887.5" y1="649.8" x2="887.5" y2="800" stroke="#4a4336" stroke-width="1"/>
<circle cx="887.4" cy="645.6" r="4.2" fill="none" stroke="#e81860" stroke-width="1.1"/>
<text x="887.4" y="648.2" fill="#f020f0" font-size="7" text-anchor="middle">8</text>
<line x1="912.5" y1="649.8" x2="912.5" y2="800" stroke="#4a4336" stroke-width="1"/>
<circle cx="912" cy="645.6" r="4.2" fill="none" stroke="#e81860" stroke-width="1.1"/>
<text x="912" y="648.2" fill="#f020f0" font-size="7" text-anchor="middle">7</text>
<line x1="932.5" y1="649.8" x2="932.5" y2="800" stroke="#4a4336" stroke-width="1"/>
<circle cx="932.4" cy="645.6" r="4.2" fill="none" stroke="#e81860" stroke-width="1.1"/>
<text x="932.4" y="648.2" fill="#f020f0" font-size="7" text-anchor="middle">6</text>
<line x1="981.5" y1="649.8" x2="981.5" y2="800" stroke="#4a4336" stroke-width="1"/>
<circle cx="981" cy="645.6" r="4.2" fill="none" stroke="#e81860" stroke-width="1.1"/>
<text x="981" y="648.2" fill="#f020f0" font-size="7" text-anchor="middle">5</text>
<line x1="1026.5" y1="649.8" x2="1026.5" y2="800" stroke="#4a4336" stroke-width="1"/>
<circle cx="1026.2" cy="645.6" r="4.2" fill="none" stroke="#e81860" stroke-width="1.1"/>
<text x="1026.2" y="648.2" fill="#f020f0" font-size="7" text-anchor="middle">4</text>
<line x1="1075.5" y1="649.8" x2="1075.5" y2="800" stroke="#4a4336" stroke-width="1"/>
<circle cx="1075" cy="645.6" r="4.2" fill="none" stroke="#e81860" stroke-width="1.1"/>
<text x="1075" y="648.2" fill="#f020f0" font-size="7" text-anchor="middle">3</text>
<line x1="1156.5" y1="649.8" x2="1156.5" y2="800" stroke="#4a4336" stroke-width="1"/>
<circle cx="1156.4" cy="645.6" r="4.2" fill="none" stroke="#e81860" stroke-width="1.1"/>
<text x="1156.4" y="648.2" fill="#f020f0" font-size="7" text-anchor="middle">1</text>
<line x1="893.5" y1="650" x2="893.5" y2="725" stroke="#3c3d39" stroke-width="1" opacity="0.6"/>
<line x1="903.5" y1="650" x2="903.5" y2="725" stroke="#3c3d39" stroke-width="1" opacity="0.6"/>
<path d="M912 714 L953.8 687.5 L1115 687.5 L1156 713.5 Z" fill="#20352e"/>
<line x1="916.5" y1="712.5" x2="916.5" y2="713" stroke="#2a5437" stroke-width="1.2"/>
<line x1="919.5" y1="710.3" x2="919.5" y2="713" stroke="#2a5437" stroke-width="1.2"/>
<line x1="922.5" y1="708.1" x2="922.5" y2="713" stroke="#2a5437" stroke-width="1.2"/>
<line x1="926.5" y1="705.9" x2="926.5" y2="713" stroke="#2a5437" stroke-width="1.2"/>
<line x1="929.5" y1="703.7" x2="929.5" y2="713" stroke="#2a5437" stroke-width="1.2"/>
<line x1="933.5" y1="701.5" x2="933.5" y2="713" stroke="#2a5437" stroke-width="1.2"/>
<line x1="936.5" y1="699.3" x2="936.5" y2="713" stroke="#2a5437" stroke-width="1.2"/>
<line x1="940.5" y1="697.2" x2="940.5" y2="713" stroke="#2a5437" stroke-width="1.2"/>
<line x1="943.5" y1="695" x2="943.5" y2="713" stroke="#2a5437" stroke-width="1.2"/>
<line x1="947.5" y1="692.8" x2="947.5" y2="713" stroke="#2a5437" stroke-width="1.2"/>
<line x1="950.5" y1="690.6" x2="950.5" y2="713" stroke="#2a5437" stroke-width="1.2"/>
<line x1="953.5" y1="688.5" x2="953.5" y2="713" stroke="#2a5437" stroke-width="1.2"/>
<line x1="957.5" y1="688.5" x2="957.5" y2="713" stroke="#2a5437" stroke-width="1.2"/>
<line x1="960.5" y1="688.5" x2="960.5" y2="713" stroke="#2a5437" stroke-width="1.2"/>
<line x1="964.5" y1="688.5" x2="964.5" y2="713" stroke="#2a5437" stroke-width="1.2"/>
<line x1="967.5" y1="688.5" x2="967.5" y2="713" stroke="#2a5437" stroke-width="1.2"/>
<line x1="971.5" y1="688.5" x2="971.5" y2="713" stroke="#2a5437" stroke-width="1.2"/>
<line x1="974.5" y1="688.5" x2="974.5" y2="713" stroke="#2a5437" stroke-width="1.2"/>
<line x1="978.5" y1="688.5" x2="978.5" y2="713" stroke="#2a5437" stroke-width="1.2"/>
<line x1="981.5" y1="688.5" x2="981.5" y2="713" stroke="#2a5437" stroke-width="1.2"/>
<line x1="985.5" y1="688.5" x2="985.5" y2="713" stroke="#2a5437" stroke-width="1.2"/>
<line x1="988.5" y1="688.5" x2="988.5" y2="713" stroke="#2a5437" stroke-width="1.2"/>
<line x1="991.5" y1="688.5" x2="991.5" y2="713" stroke="#2a5437" stroke-width="1.2"/>
<line x1="995.5" y1="688.5" x2="995.5" y2="713" stroke="#2a5437" stroke-width="1.2"/>
<line x1="998.5" y1="688.5" x2="998.5" y2="713" stroke="#2a5437" stroke-width="1.2"/>
<line x1="1002.5" y1="688.5" x2="1002.5" y2="713" stroke="#2a5437" stroke-width="1.2"/>
<line x1="1005.5" y1="688.5" x2="1005.5" y2="713" stroke="#2a5437" stroke-width="1.2"/>
<line x1="1009.5" y1="688.5" x2="1009.5" y2="713" stroke="#2a5437" stroke-width="1.2"/>
<line x1="1012.5" y1="688.5" x2="1012.5" y2="713" stroke="#2a5437" stroke-width="1.2"/>
<line x1="1016.5" y1="688.5" x2="1016.5" y2="713" stroke="#2a5437" stroke-width="1.2"/>
<line x1="1019.5" y1="688.5" x2="1019.5" y2="713" stroke="#2a5437" stroke-width="1.2"/>
<line x1="1022.5" y1="688.5" x2="1022.5" y2="713" stroke="#2a5437" stroke-width="1.2"/>
<line x1="1026.5" y1="688.5" x2="1026.5" y2="713" stroke="#2a5437" stroke-width="1.2"/>
<line x1="1029.5" y1="688.5" x2="1029.5" y2="713" stroke="#2a5437" stroke-width="1.2"/>
<line x1="1033.5" y1="688.5" x2="1033.5" y2="713" stroke="#2a5437" stroke-width="1.2"/>
<line x1="1036.5" y1="688.5" x2="1036.5" y2="713" stroke="#2a5437" stroke-width="1.2"/>
<line x1="1040.5" y1="688.5" x2="1040.5" y2="713" stroke="#2a5437" stroke-width="1.2"/>
<line x1="1043.5" y1="688.5" x2="1043.5" y2="713" stroke="#2a5437" stroke-width="1.2"/>
<line x1="1047.5" y1="688.5" x2="1047.5" y2="713" stroke="#2a5437" stroke-width="1.2"/>
<line x1="1050.5" y1="688.5" x2="1050.5" y2="713" stroke="#2a5437" stroke-width="1.2"/>
<line x1="1054.5" y1="688.5" x2="1054.5" y2="713" stroke="#2a5437" stroke-width="1.2"/>
<line x1="1057.5" y1="688.5" x2="1057.5" y2="713" stroke="#2a5437" stroke-width="1.2"/>
<line x1="1060.5" y1="688.5" x2="1060.5" y2="713" stroke="#2a5437" stroke-width="1.2"/>
<line x1="1064.5" y1="688.5" x2="1064.5" y2="713" stroke="#2a5437" stroke-width="1.2"/>
<line x1="1067.5" y1="688.5" x2="1067.5" y2="713" stroke="#2a5437" stroke-width="1.2"/>
<line x1="1071.5" y1="688.5" x2="1071.5" y2="713" stroke="#2a5437" stroke-width="1.2"/>
<line x1="1074.5" y1="688.5" x2="1074.5" y2="713" stroke="#2a5437" stroke-width="1.2"/>
<line x1="1078.5" y1="688.5" x2="1078.5" y2="713" stroke="#2a5437" stroke-width="1.2"/>
<line x1="1081.5" y1="688.5" x2="1081.5" y2="713" stroke="#2a5437" stroke-width="1.2"/>
<line x1="1085.5" y1="688.5" x2="1085.5" y2="713" stroke="#2a5437" stroke-width="1.2"/>
<line x1="1088.5" y1="688.5" x2="1088.5" y2="713" stroke="#2a5437" stroke-width="1.2"/>
<line x1="1091.5" y1="688.5" x2="1091.5" y2="713" stroke="#2a5437" stroke-width="1.2"/>
<line x1="1095.5" y1="688.5" x2="1095.5" y2="713" stroke="#2a5437" stroke-width="1.2"/>
<line x1="1098.5" y1="688.5" x2="1098.5" y2="713" stroke="#2a5437" stroke-width="1.2"/>
<line x1="1102.5" y1="688.5" x2="1102.5" y2="713" stroke="#2a5437" stroke-width="1.2"/>
<line x1="1105.5" y1="688.5" x2="1105.5" y2="713" stroke="#2a5437" stroke-width="1.2"/>
<line x1="1109.5" y1="688.5" x2="1109.5" y2="713" stroke="#2a5437" stroke-width="1.2"/>
<line x1="1112.5" y1="688.5" x2="1112.5" y2="713" stroke="#2a5437" stroke-width="1.2"/>
<line x1="1116.5" y1="689.2" x2="1116.5" y2="713" stroke="#2a5437" stroke-width="1.2"/>
<line x1="1119.5" y1="691.4" x2="1119.5" y2="713" stroke="#2a5437" stroke-width="1.2"/>
<line x1="1123.5" y1="693.6" x2="1123.5" y2="713" stroke="#2a5437" stroke-width="1.2"/>
<line x1="1126.5" y1="695.8" x2="1126.5" y2="713" stroke="#2a5437" stroke-width="1.2"/>
<line x1="1129.5" y1="697.9" x2="1129.5" y2="713" stroke="#2a5437" stroke-width="1.2"/>
<line x1="1133.5" y1="700.1" x2="1133.5" y2="713" stroke="#2a5437" stroke-width="1.2"/>
<line x1="1136.5" y1="702.3" x2="1136.5" y2="713" stroke="#2a5437" stroke-width="1.2"/>
<line x1="1140.5" y1="704.5" x2="1140.5" y2="713" stroke="#2a5437" stroke-width="1.2"/>
<line x1="1143.5" y1="706.7" x2="1143.5" y2="713" stroke="#2a5437" stroke-width="1.2"/>
<line x1="1147.5" y1="708.9" x2="1147.5" y2="713" stroke="#2a5437" stroke-width="1.2"/>
<line x1="1150.5" y1="711.1" x2="1150.5" y2="713" stroke="#2a5437" stroke-width="1.2"/>
<rect x="912" y="711.5" width="245" height="4" fill="#2a5a36"/>
<path d="M899.7 717.3 L983.4 668.7 L1083.7 668.7 L1169.7 717.3" fill="none" stroke="#1fe6d2" stroke-width="1.6" stroke-linejoin="miter"/>
<path d="M898.5 716 L900.5 719 L903.5 717.5" fill="none" stroke="#1fe6d2" stroke-width="1" stroke-linejoin="miter"/>
<line x1="953.8" y1="686.5" x2="1115" y2="686.5" stroke="#1fe6d2" stroke-width="1.3" stroke-dasharray="7 2"/>
<line x1="912" y1="717.3" x2="1157" y2="717.3" stroke="#e01818" stroke-width="2.6"/>
<line x1="962.5" y1="686" x2="962.5" y2="701" stroke="#ff1414" stroke-width="1.1"/>
<path d="M960.7 696 L962.5 702 L964.3 696 Z" fill="#ff1414"/>
<line x1="947.5" y1="686" x2="947.5" y2="696" stroke="#ff1414" stroke-width="1.1"/>
<path d="M940.8 695.6 L958.8 695.6 L956.8 712.2 L942.8 712.2 Z" fill="none" stroke="#ff1414" stroke-width="1.2" stroke-linejoin="miter"/>
<line x1="941.5" y1="699.5" x2="958" y2="699.5" stroke="#ff1414" stroke-width="1"/>
<line x1="941.5" y1="703.5" x2="958" y2="703.5" stroke="#ff1414" stroke-width="1"/>
<line x1="941.5" y1="707.5" x2="958" y2="707.5" stroke="#ff1414" stroke-width="1"/>
<line x1="949.5" y1="695.6" x2="949.5" y2="717" stroke="#ff1414" stroke-width="1"/>
<rect x="901.5" y="693.5" width="9" height="4.5" fill="#ff1414"/>
<rect x="901.5" y="699.5" width="9" height="4.5" fill="#ff1414"/>
<line x1="899.5" y1="699.5" x2="912.5" y2="699.5" stroke="#e8e8e8" stroke-width="0.8"/>
<line x1="899.5" y1="697" x2="899.5" y2="701" stroke="#c8c8c8" stroke-width="0.8"/>
<line x1="912.5" y1="697" x2="912.5" y2="701" stroke="#c8c8c8" stroke-width="0.8"/>
<rect x="877.1" y="703.1" width="9" height="4.5" fill="#ff1414"/>
<rect x="877.1" y="709.1" width="9" height="4.5" fill="#ff1414"/>
<line x1="875.1" y1="708.5" x2="888.1" y2="708.5" stroke="#e8e8e8" stroke-width="0.8"/>
<line x1="875.5" y1="706.6" x2="875.5" y2="710.6" stroke="#c8c8c8" stroke-width="0.8"/>
<line x1="888.5" y1="706.6" x2="888.5" y2="710.6" stroke="#c8c8c8" stroke-width="0.8"/>
<rect x="1157.9" y="688" width="9" height="4.5" fill="#ff1414"/>
<rect x="1157.9" y="694" width="9" height="4.5" fill="#ff1414"/>
<line x1="1156.4" y1="693.5" x2="1168.4" y2="693.5" stroke="#e8e8e8" stroke-width="0.8"/>
<line x1="1156.5" y1="691.5" x2="1156.5" y2="695.5" stroke="#c8c8c8" stroke-width="0.8"/>
<line x1="1168.5" y1="691.5" x2="1168.5" y2="695.5" stroke="#c8c8c8" stroke-width="0.8"/>
<path d="M953 674.5 L959 674.5" fill="none" stroke="#12e6e6" stroke-width="1.2" stroke-linejoin="miter"/>
<path d="M953 674.5 L957 672.5" fill="none" stroke="#12e6e6" stroke-width="1" stroke-linejoin="miter"/>
<rect x="958" y="669.5" width="5" height="6" fill="#ff1414"/>
<text x="849" y="722.5" fill="#19e6e6" font-size="6.2" textLength="34" lengthAdjust="spacingAndGlyphs" font-weight="bold" stroke="#19e6e6" stroke-width="0.35">FLAT ROOF LEVEL</text>
<line x1="849" y1="724.5" x2="890" y2="724.5" stroke="#9a9a9a" stroke-width="0.9"/>
<line x1="871.5" y1="724" x2="871.5" y2="769" stroke="#b4b4b4" stroke-width="1"/>
<rect x="865.5" y="740" width="5" height="11" fill="#ff1414"/>
<rect x="871.5" y="740" width="5" height="11" fill="#ff1414"/>
<line x1="875" y1="725.5" x2="912" y2="725.5" stroke="#19d6e6" stroke-width="1.2"/>
<line x1="887.5" y1="725.2" x2="887.5" y2="765" stroke="#1414d8" stroke-width="1.2"/>
<line x1="891.5" y1="725.2" x2="891.5" y2="765" stroke="#19d6e6" stroke-width="1.2"/>
<line x1="895.5" y1="725.2" x2="895.5" y2="765" stroke="#19d6e6" stroke-width="1.2"/>
<line x1="900.5" y1="725.2" x2="900.5" y2="765" stroke="#19d6e6" stroke-width="1.2"/>
<line x1="903.5" y1="725.2" x2="903.5" y2="765" stroke="#19d6e6" stroke-width="1.2"/>
<line x1="887" y1="726.5" x2="910" y2="726.5" stroke="#1414d8" stroke-width="1.2" stroke-dasharray="1 2"/>
<text x="893" y="738" fill="#f6f61e" font-size="5.5" textLength="13" lengthAdjust="spacingAndGlyphs">YARD</text>
<rect x="889.6" y="741" width="19.4" height="4.3" fill="#f6e040"/>
<line x1="889.6" y1="741.5" x2="909" y2="741.5" stroke="#f060c0" stroke-width="0.8"/>
<line x1="889.6" y1="745.5" x2="909" y2="745.5" stroke="#f060c0" stroke-width="0.8"/>
<rect x="897.3" y="739" width="4" height="1.6" fill="#f020f0"/>
<rect x="899.5" y="738" width="4" height="2" fill="#f020f0"/>
<line x1="910.5" y1="717.3" x2="910.5" y2="765" stroke="#19d6e6" stroke-width="1.2"/>
<line x1="913.5" y1="717.3" x2="913.5" y2="765" stroke="#19d6e6" stroke-width="1.2"/>
<line x1="931.5" y1="717.3" x2="931.5" y2="765" stroke="#19d6e6" stroke-width="1.2"/>
<line x1="933.5" y1="717.3" x2="933.5" y2="765" stroke="#19d6e6" stroke-width="1.2"/>
<line x1="979.5" y1="717.3" x2="979.5" y2="765" stroke="#19d6e6" stroke-width="1.2"/>
<line x1="982.5" y1="717.3" x2="982.5" y2="765" stroke="#19d6e6" stroke-width="1.2"/>
<line x1="1025.5" y1="717.3" x2="1025.5" y2="765" stroke="#19d6e6" stroke-width="1.2"/>
<line x1="1027.5" y1="717.3" x2="1027.5" y2="765" stroke="#19d6e6" stroke-width="1.2"/>
<line x1="1073.5" y1="717.3" x2="1073.5" y2="765" stroke="#19d6e6" stroke-width="1.2"/>
<line x1="1076.5" y1="717.3" x2="1076.5" y2="765" stroke="#19d6e6" stroke-width="1.2"/>
<line x1="1155.5" y1="717.3" x2="1155.5" y2="765" stroke="#19d6e6" stroke-width="1.2"/>
<line x1="1157.5" y1="717.3" x2="1157.5" y2="765" stroke="#19d6e6" stroke-width="1.2"/>
<line x1="1100.5" y1="719" x2="1100.5" y2="763" stroke="#19d6e6" stroke-width="1.2"/>
<rect x="913.5" y="727" width="6.5" height="36" fill="url(#tileh)"/>
<rect x="920" y="734" width="10.7" height="29.5" fill="none" stroke="#f020f0" stroke-width="1.3"/>
<line x1="920.5" y1="763" x2="930" y2="742" stroke="#d890e8" stroke-width="0.9"/>
<rect x="921" y="735" width="9" height="27" fill="#2a2a55" opacity="0.6"/>
<rect x="921.8" y="742.5" width="6" height="6" fill="#ff1414"/>
<rect x="911" y="728.5" width="8" height="5.5" fill="#ff1414"/>
<rect x="920" y="725" width="5" height="1.6" fill="#f020f0"/>
<rect x="887" y="762.5" width="270" height="4.1" fill="#1414d8"/>
<rect x="952.3" y="763" width="8" height="5" fill="#f020f0"/>
<rect x="1000.7" y="763" width="8" height="5" fill="#f020f0"/>
<rect x="1045.4" y="763" width="8" height="5" fill="#f020f0"/>
<rect x="1094" y="763" width="8" height="5" fill="#f020f0"/>
<rect x="1143.5" y="763" width="8" height="5" fill="#f020f0"/>
<text x="914" y="724" fill="#f6f61e" font-size="5.5" textLength="16" lengthAdjust="spacingAndGlyphs">BATH 2</text>
<text x="945" y="724" fill="#f6f61e" font-size="5.5" textLength="20" lengthAdjust="spacingAndGlyphs">KITCHEN</text>
<text x="986" y="724" fill="#f6f61e" font-size="5.5" textLength="32" lengthAdjust="spacingAndGlyphs">DINING AREA</text>
<text x="1032" y="724" fill="#f6f61e" font-size="5.5" textLength="31" lengthAdjust="spacingAndGlyphs">FAMILY AREA</text>
<text x="1101" y="724" fill="#f6f61e" font-size="5.5" textLength="45" lengthAdjust="spacingAndGlyphs">MASTER BEDROOM</text>
<path d="M936.6 724.1 L939.8 718.6 L943 724.1 Z" fill="none" stroke="#f8c81e" stroke-width="1.3" stroke-linejoin="miter"/>
<path d="M1066.3 724.1 L1069.5 718.6 L1072.7 724.1 Z" fill="none" stroke="#f8c81e" stroke-width="1.3" stroke-linejoin="miter"/>
<path d="M1085.1 724.1 L1088.3 718.6 L1091.5 724.1 Z" fill="none" stroke="#f8c81e" stroke-width="1.3" stroke-linejoin="miter"/>
<rect x="947" y="728" width="18.3" height="22.5" fill="#32264e"/>
<rect x="947" y="728" width="18.3" height="22.5" fill="none" stroke="#f020f0" stroke-width="1.4"/>
<line x1="956.5" y1="728" x2="956.5" y2="750.5" stroke="#f020f0" stroke-width="1"/>
<path d="M949 731 L955 739 L949 748" fill="none" stroke="#d8a0f0" stroke-width="0.9" stroke-linejoin="miter"/>
<path d="M958 731 L964 739 L958 748" fill="none" stroke="#d8a0f0" stroke-width="0.9" stroke-linejoin="miter"/>
<rect x="948.5" y="740" width="6" height="5" fill="#ff1414"/>
<rect x="947" y="752.6" width="19" height="4.3" fill="#f6e040"/>
<line x1="947" y1="752.5" x2="966" y2="752.5" stroke="#f060c0" stroke-width="0.8"/>
<line x1="947" y1="756.5" x2="966" y2="756.5" stroke="#f060c0" stroke-width="0.8"/>
<rect x="954.5" y="750.6" width="4" height="1.6" fill="#f020f0"/>
<rect x="951" y="726" width="4" height="1.5" fill="#f020f0"/>
<rect x="991.3" y="728" width="24.5" height="30.4" fill="#32264e"/>
<rect x="991.3" y="728" width="24.5" height="30.4" fill="none" stroke="#f020f0" stroke-width="1.4"/>
<line x1="999.5" y1="728" x2="999.5" y2="758.4" stroke="#f020f0" stroke-width="1"/>
<line x1="1007.5" y1="728" x2="1007.5" y2="758.4" stroke="#f020f0" stroke-width="1"/>
<line x1="991.3" y1="753.5" x2="1015.8" y2="753.5" stroke="#f020f0" stroke-width="1.3"/>
<path d="M992.3 731 L998.3 741 L992.3 751" fill="none" stroke="#d8a0f0" stroke-width="0.9" stroke-linejoin="miter"/>
<path d="M1000.5 731 L1006.5 741 L1000.5 751" fill="none" stroke="#d8a0f0" stroke-width="0.9" stroke-linejoin="miter"/>
<path d="M1008.7 731 L1014.7 741 L1008.7 751" fill="none" stroke="#d8a0f0" stroke-width="0.9" stroke-linejoin="miter"/>
<rect x="1000" y="741" width="8" height="5" fill="#ff1414"/>
<rect x="999" y="726" width="4" height="1.5" fill="#f020f0"/>
<rect x="1034.3" y="728" width="32.7" height="35.5" fill="none" stroke="#f020f0" stroke-width="1.4"/>
<line x1="1034.3" y1="732.5" x2="1067" y2="732.5" stroke="#f020f0" stroke-width="1.2"/>
<line x1="1042.5" y1="728" x2="1042.5" y2="763.5" stroke="#f020f0" stroke-width="1"/>
<line x1="1050.5" y1="728" x2="1050.5" y2="763.5" stroke="#f020f0" stroke-width="1"/>
<line x1="1058.5" y1="728" x2="1058.5" y2="763.5" stroke="#f020f0" stroke-width="1"/>
<rect x="1036.5" y="741" width="6" height="5" fill="#ff1414"/>
<rect x="1047" y="726" width="4" height="1.5" fill="#f020f0"/>
<rect x="1115.5" y="728" width="19.5" height="4.3" fill="#f6e040"/>
<line x1="1115.5" y1="728.5" x2="1135" y2="728.5" stroke="#f060c0" stroke-width="0.8"/>
<line x1="1115.5" y1="732.5" x2="1135" y2="732.5" stroke="#f060c0" stroke-width="0.8"/>
<rect x="1123.2" y="726" width="4" height="1.6" fill="#f020f0"/>
<rect x="1122" y="726" width="5" height="1.6" fill="#f020f0"/>
<rect x="1149.5" y="728" width="9.3" height="31" fill="none" stroke="#f020f0" stroke-width="1.5"/>
<rect x="1154" y="729" width="4.5" height="29" fill="#f020f0"/>
<rect x="1143.7" y="748.5" width="6" height="5" fill="#ff1414"/>
<rect x="1160" y="748" width="8.5" height="6" fill="#ff1414"/>
<line x1="1159" y1="732.5" x2="1176" y2="732.5" stroke="#b0b0b0" stroke-width="1"/>
<line x1="1152" y1="744.5" x2="1176" y2="744.5" stroke="#b0b0b0" stroke-width="1"/>
<text x="1177" y="733" fill="#ff1414" font-size="6" textLength="67" lengthAdjust="spacingAndGlyphs" font-weight="bold" stroke="#ff1414" stroke-width="0.35">Aluminium frame casement window</text>
<text x="1177" y="738.5" fill="#ff1414" font-size="6" textLength="40" lengthAdjust="spacingAndGlyphs" font-weight="bold" stroke="#ff1414" stroke-width="0.35">with top hung vent</text>
<text x="1177" y="746.5" fill="#ff1414" font-size="6" textLength="68" lengthAdjust="spacingAndGlyphs" font-weight="bold" stroke="#ff1414" stroke-width="0.35">Aluminium frame fixed glass window</text>
<path d="M885.4 769.6 L885.4 781.8 L878.9 781.8 L878.9 786 L895.9 786 L895.9 781.8 L889.4 781.8 L889.4 769.6 Z" fill="none" stroke="#d6fa4c" stroke-width="1.3" stroke-linejoin="miter"/>
<path d="M884.4 780 L887.9 774 L886.9 777 L890.4 772" fill="none" stroke="#f6f61e" stroke-width="1" stroke-linejoin="miter"/>
<line x1="887.5" y1="786" x2="887.5" y2="804" stroke="#b4b4b4" stroke-width="0.9"/>
<path d="M910 769.6 L910 781.8 L903.5 781.8 L903.5 786 L920.5 786 L920.5 781.8 L914 781.8 L914 769.6 Z" fill="none" stroke="#d6fa4c" stroke-width="1.3" stroke-linejoin="miter"/>
<path d="M909 780 L912.5 774 L911.5 777 L915 772" fill="none" stroke="#f6f61e" stroke-width="1" stroke-linejoin="miter"/>
<line x1="912.5" y1="786" x2="912.5" y2="804" stroke="#b4b4b4" stroke-width="0.9"/>
<path d="M930.4 769.6 L930.4 781.8 L923.9 781.8 L923.9 786 L940.9 786 L940.9 781.8 L934.4 781.8 L934.4 769.6 Z" fill="none" stroke="#d6fa4c" stroke-width="1.3" stroke-linejoin="miter"/>
<path d="M929.4 780 L932.9 774 L931.9 777 L935.4 772" fill="none" stroke="#f6f61e" stroke-width="1" stroke-linejoin="miter"/>
<line x1="932.5" y1="786" x2="932.5" y2="804" stroke="#b4b4b4" stroke-width="0.9"/>
<path d="M979 769.6 L979 781.8 L972.5 781.8 L972.5 786 L989.5 786 L989.5 781.8 L983 781.8 L983 769.6 Z" fill="none" stroke="#d6fa4c" stroke-width="1.3" stroke-linejoin="miter"/>
<path d="M978 780 L981.5 774 L980.5 777 L984 772" fill="none" stroke="#f6f61e" stroke-width="1" stroke-linejoin="miter"/>
<line x1="981.5" y1="786" x2="981.5" y2="804" stroke="#b4b4b4" stroke-width="0.9"/>
<path d="M1024.2 769.6 L1024.2 781.8 L1017.7 781.8 L1017.7 786 L1034.7 786 L1034.7 781.8 L1028.2 781.8 L1028.2 769.6 Z" fill="none" stroke="#d6fa4c" stroke-width="1.3" stroke-linejoin="miter"/>
<path d="M1023.2 780 L1026.7 774 L1025.7 777 L1029.2 772" fill="none" stroke="#f6f61e" stroke-width="1" stroke-linejoin="miter"/>
<line x1="1026.5" y1="786" x2="1026.5" y2="804" stroke="#b4b4b4" stroke-width="0.9"/>
<path d="M1073 769.6 L1073 781.8 L1066.5 781.8 L1066.5 786 L1083.5 786 L1083.5 781.8 L1077 781.8 L1077 769.6 Z" fill="none" stroke="#d6fa4c" stroke-width="1.3" stroke-linejoin="miter"/>
<path d="M1072 780 L1075.5 774 L1074.5 777 L1078 772" fill="none" stroke="#f6f61e" stroke-width="1" stroke-linejoin="miter"/>
<line x1="1075.5" y1="786" x2="1075.5" y2="804" stroke="#b4b4b4" stroke-width="0.9"/>
<path d="M1154.4 769.6 L1154.4 781.8 L1147.9 781.8 L1147.9 786 L1164.9 786 L1164.9 781.8 L1158.4 781.8 L1158.4 769.6 Z" fill="none" stroke="#d6fa4c" stroke-width="1.3" stroke-linejoin="miter"/>
<path d="M1153.4 780 L1156.9 774 L1155.9 777 L1159.4 772" fill="none" stroke="#f6f61e" stroke-width="1" stroke-linejoin="miter"/>
<line x1="1156.5" y1="786" x2="1156.5" y2="804" stroke="#b4b4b4" stroke-width="0.9"/>
<path d="M1158 769.2 L1171 769.2" fill="none" stroke="#19d6e6" stroke-width="1" stroke-linejoin="miter"/>
<path d="M1166 769.5 L1167 772 L1170.5 772 L1171.5 769.5" fill="none" stroke="#19d6e6" stroke-width="0.9" stroke-linejoin="miter"/>
<path d="M872 769.2 L887 769.2" fill="none" stroke="#19d6e6" stroke-width="1" stroke-linejoin="miter"/>
<path d="M873 769.5 L874 772 L877.5 772 L878.5 769.5" fill="none" stroke="#19d6e6" stroke-width="0.9" stroke-linejoin="miter"/>
<path d="M860 772.5 L878.8 781.8" fill="none" stroke="#d02020" stroke-width="1.2" stroke-linejoin="miter"/>
<line x1="871.5" y1="741" x2="871.5" y2="769" stroke="#b0b0b0" stroke-width="0.9"/>
<line x1="887.4" y1="793.5" x2="1156.4" y2="793.5" stroke="#b0b0b0" stroke-width="1"/>
<line x1="887.4" y1="803.5" x2="1156.4" y2="803.5" stroke="#b0b0b0" stroke-width="1"/>
<line x1="885.4" y1="795.2" x2="889.4" y2="792.2" stroke="#c8c8c8" stroke-width="1"/>
<line x1="910" y1="795.2" x2="914" y2="792.2" stroke="#c8c8c8" stroke-width="1"/>
<line x1="930.4" y1="795.2" x2="934.4" y2="792.2" stroke="#c8c8c8" stroke-width="1"/>
<line x1="979" y1="795.2" x2="983" y2="792.2" stroke="#c8c8c8" stroke-width="1"/>
<line x1="1024.2" y1="795.2" x2="1028.2" y2="792.2" stroke="#c8c8c8" stroke-width="1"/>
<line x1="1073" y1="795.2" x2="1077" y2="792.2" stroke="#c8c8c8" stroke-width="1"/>
<line x1="1154.4" y1="795.2" x2="1158.4" y2="792.2" stroke="#c8c8c8" stroke-width="1"/>
<line x1="887.5" y1="788" x2="887.5" y2="806" stroke="#b4b4b4" stroke-width="0.9"/>
<line x1="885.4" y1="804.7" x2="889.4" y2="801.7" stroke="#c8c8c8" stroke-width="1"/>
<line x1="1156.5" y1="788" x2="1156.5" y2="806" stroke="#b4b4b4" stroke-width="0.9"/>
<line x1="1154.4" y1="804.7" x2="1158.4" y2="801.7" stroke="#c8c8c8" stroke-width="1"/>
<rect x="894.8" y="788.8" width="9.5" height="10.5" fill="#ff1414"/>
<rect x="916.8" y="788.8" width="9.5" height="10.5" fill="#ff1414"/>
<rect x="951.8" y="788.8" width="9.5" height="10.5" fill="#ff1414"/>
<rect x="998.2" y="788.8" width="9.5" height="10.5" fill="#ff1414"/>
<rect x="1045.2" y="788.8" width="9.5" height="10.5" fill="#ff1414"/>
<rect x="1110.2" y="788.8" width="9.5" height="10.5" fill="#ff1414"/>
<rect x="1016" y="797.5" width="11" height="4.5" fill="#ff1414"/>
<rect x="1014.5" y="803" width="13.5" height="4.5" fill="#ff1414"/>
<text x="955" y="820" fill="#e040f0" font-size="8" textLength="40.5" lengthAdjust="spacingAndGlyphs">SECTION B-B</text>
<text x="957.5" y="825.5" fill="#ff1414" font-size="5.5" textLength="31" lengthAdjust="spacingAndGlyphs" font-weight="bold" stroke="#ff1414" stroke-width="0.35">SCALE 1:100</text>
<circle cx="1758.5" cy="183" r="52.5" fill="none" stroke="#454c55" stroke-width="15"/>
<text x="1758.8" y="134.6" fill="#c6c7c9" font-size="21.5" text-anchor="middle" font-weight="bold">N</text>
<text x="1758.8" y="247" fill="#c6c7c9" font-size="21.5" text-anchor="middle" font-weight="bold">S</text>
<text x="1702.6" y="191.3" fill="#c6c7c9" font-size="21.5" text-anchor="middle" font-weight="bold">W</text>
<text x="1816.5" y="191.3" fill="#c6c7c9" font-size="21.5" text-anchor="middle" font-weight="bold">E</text>
<rect x="1733.5" y="157.3" width="51.3" height="51.3" fill="#aaadb0"/>
<rect x="1743.5" y="167.3" width="31.7" height="31.7" fill="#a1a9b1"/>
<text x="1759.1" y="187.5" fill="#4f555c" font-size="13.3" textLength="21.7" lengthAdjust="spacingAndGlyphs" text-anchor="middle" font-weight="bold">TOP</text>
<rect x="1734.8" y="270" width="48.1" height="17.5" fill="#8d9199" stroke="#7b7f87" stroke-width="0.8" rx="4"/>
<text x="1739.6" y="281.7" fill="#5d626b" font-size="12" textLength="24" lengthAdjust="spacingAndGlyphs">WCS</text>
<rect x="1767.5" y="274.5" width="11.5" height="8.5" fill="#999da5" rx="1.5"/>
<line x1="1770.5" y1="278.5" x2="1776" y2="278.5" stroke="#70747c" stroke-width="1"/>
<line x1="1810.5" y1="102" x2="1810.5" y2="916" stroke="#f2f2f2" stroke-width="1"/>
<line x1="31" y1="923.5" x2="1803" y2="923.5" stroke="#f2f2f2" stroke-width="1"/>
<line x1="1818" y1="923.5" x2="1841" y2="923.5" stroke="#f2f2f2" stroke-width="1"/>
<rect x="1803.5" y="916.5" width="14" height="14" fill="none" stroke="#f2f2f2" stroke-width="1"/>
<line x1="1810.5" y1="916" x2="1810.5" y2="928" stroke="#f2f2f2" stroke-width="1"/>
<line x1="1803" y1="923.5" x2="1818" y2="923.5" stroke="#f2f2f2" stroke-width="1"/>
<text x="35" y="119" fill="#e6e6e6" font-size="12" textLength="131" lengthAdjust="spacingAndGlyphs">[−] [Top] [2D Wireframe]</text></svg></div><div class="abs" id="vscroll"><svg class="abs" style="left:3px;top:7px" width="12" height="8"><path d="M1.500 6.500l4.500-4.500 4.500 4.500" fill="none" stroke="#444" stroke-width="2"/></svg><div class="abs" style="left:1px;top:93px;width:16px;height:16px;background:#cdcdcd"></div><svg class="abs" style="left:3px;top:814px" width="12" height="8"><path d="M1.500 1.500l4.500 4.500 4.500-4.500" fill="none" stroke="#444" stroke-width="2"/></svg></div>
<div class="abs" id="tabs">
<svg class="abs" style="left:0;top:0" width="250" height="17" viewBox="31 928 250 17" font-family="Liberation Sans,sans-serif">
<rect x="32" y="929" width="14" height="15" fill="#fcfcfc" stroke="#c8c8c8" stroke-width="1"/>
<rect x="47" y="929" width="14" height="15" fill="#fcfcfc" stroke="#c8c8c8" stroke-width="1"/>
<rect x="62" y="929" width="14" height="15" fill="#fcfcfc" stroke="#c8c8c8" stroke-width="1"/>
<rect x="77" y="929" width="14" height="15" fill="#fcfcfc" stroke="#c8c8c8" stroke-width="1"/>
<path d="M36 932v9M43 932v9l-6-4.500zM52 936.500l6-4.500v9zM65 932v9l6-4.500zM80 932v9l6 -4.500zM87 932v9" fill="#7a7a7a" stroke="#7a7a7a" stroke-width="1"/>
<path d="M92 928h51l-5 17h-40z" fill="#222830"/>
<text x="103" y="941" font-size="12" fill="#fff" textLength="29" lengthAdjust="spacingAndGlyphs">Model</text>
<path d="M139 945l6-16M193 945l6-16M248 945l6-16" stroke="#333" stroke-width="1"/>
<text x="149" y="941" font-size="12" fill="#111" textLength="37" lengthAdjust="spacingAndGlyphs">Layout1</text>
<text x="204" y="941" font-size="12" fill="#111" textLength="38" lengthAdjust="spacingAndGlyphs">Layout2</text>
</svg>
<div class="abs" style="left:1194px;top:1px;width:4px;height:14px;background:repeating-linear-gradient(#bbb 0,#bbb 1px,#eee 1px,#eee 2px)"></div>
<svg class="abs" style="left:1203px;top:3px" width="8" height="11"><path d="M6 1.500l-4 4 4 4" fill="none" stroke="#444" stroke-width="2"/></svg>
<div class="abs" style="left:1776px;top:1px;width:17px;height:14px;background:#cdcdcd"></div>
<svg class="abs" style="left:1797px;top:3px" width="8" height="11"><path d="M2 1.500l4 4-4 4" fill="none" stroke="#444" stroke-width="2"/></svg>
</div>
<div class="abs" style="left:29px;top:945px;width:1831px;height:1px;background:#fff"></div>
<svg class="abs" style="left:3px;top:952px" width="11" height="5"><path d="M0 .5h11M0 2.500h11M0 4.500h11" stroke="#333" stroke-width="1" stroke-dasharray="1 1"/></svg>
<div class="abs" id="cmdhist"><div class="mono" style="top:1px">Command:  MOVE</div><div class="mono" style="top:16px">Select objects: *Cancel*</div><div class="mono" style="top:31px">Command: *Cancel*</div>
<div class="abs" style="left:1584px;top:-4px;font-size:20px;color:#b3b3b3;white-space:nowrap">Activate Windows</div><div class="abs" style="left:1584px;top:21px;font-size:15px;color:#b6b6b6;white-space:nowrap">Go to Settings to activate Windows.</div></div>
<div class="abs" id="cmdline"><div class="mono" style="top:3px">Command:</div></div>
<div class="abs" id="status"></div>
<svg class="abs" style="left:10px;top:1020px;filter:blur(.5px)" width="140" height="20"><text x="6" y="14.500" font-family="Liberation Sans,sans-serif" font-size="12.500" fill="#949494" textLength="120" lengthAdjust="spacingAndGlyphs">-88'-0", -16590'-10", 0'-0"</text></svg>
<div class="sbtn" style="left:175px"></div>
<svg class="ic" style="left:178.5px;top:1022.0px;width:16px;height:16px" viewBox="0 0 16 16" ><path d="M1 7h11M6.500 1.500v11" stroke="#222" stroke-width="1.300"/><rect x="4.700" y="5.200" width="3.600" height="3.600" fill="none" stroke="#222" stroke-width=".8"/><path d="M11 10h3v3" stroke="#a02020" fill="none"/><rect x="9" y="11.500" width="3" height="3" fill="#fff" stroke="#7a3a8a" stroke-width=".8"/></svg>
<div class="sbtn" style="left:197px"></div>
<svg class="ic" style="left:200.5px;top:1022.0px;width:16px;height:16px" viewBox="0 0 16 16" ><path d="M3 3h1M6 3h1M9 3h1M12 3h1M3 6h1M12 6h1M3 9h1M12 9h1" stroke="#222" stroke-width="1.300"/><path d="M2 12.500h12M12.500 4v9" stroke="#222" stroke-width="1.100"/></svg>
<div class="sbtn on" style="left:219px"></div>
<svg class="ic" style="left:222.5px;top:1022.0px;width:16px;height:16px" viewBox="0 0 16 16" ><rect x="1.500" y="1.500" width="13" height="13" fill="#fff" stroke="#222"/><path d="M4.800 1.500v13M8 1.500v13M11.200 1.500v13M1.500 4.800h13M1.500 8h13M1.500 11.200h13" stroke="#222" stroke-width="1.100"/></svg>
<div class="sbtn on" style="left:241px"></div>
<svg class="ic" style="left:244.5px;top:1022.0px;width:16px;height:16px" viewBox="0 0 16 16" ><path d="M2.500 1.500v12h12" stroke="#333" stroke-width="1.300" fill="none"/><path d="M2.500 8h5.500v5.500" stroke="#2a6aa8" stroke-width="1.100" fill="none"/></svg>
<div class="sbtn" style="left:263px"></div>
<svg class="ic" style="left:266.5px;top:1022.0px;width:16px;height:16px" viewBox="0 0 16 16" ><path d="M1.500 13h9" stroke="#222" stroke-width="1.100"/><circle cx="8" cy="9" r="4" fill="none" stroke="#222" stroke-width="1.200"/><path d="M8 9l6-5" stroke="#222" stroke-width="1.200"/><circle cx="8" cy="9" r="1" fill="#222"/></svg>
<div class="sbtn on" style="left:285px"></div>
<svg class="ic" style="left:288.5px;top:1022.0px;width:16px;height:16px" viewBox="0 0 16 16" ><rect x="3.500" y="2.500" width="11" height="11" fill="#fff" stroke="#333" stroke-width="1.200"/><rect x="1.500" y=".5" width="3.500" height="3.500" fill="#fff" stroke="#d05a20"/></svg>
<div class="sbtn on" style="left:307px"></div>
<svg class="ic" style="left:310.5px;top:1022.0px;width:16px;height:16px" viewBox="0 0 16 16" ><path d="M4 5l3-3h7v8l-3 3.500h-7z" fill="#fff" stroke="#333" stroke-width="1.200"/><circle cx="3" cy="13" r="2" fill="#fff" stroke="#d05a20"/></svg>
<div class="sbtn" style="left:329px"></div>
<svg class="ic" style="left:332.5px;top:1022.0px;width:16px;height:16px" viewBox="0 0 16 16" ><path d="M1.500 13.500h10M12.500 3l-9 10" stroke="#222" stroke-width="1.300" fill="none"/><path d="M4 13.500a6 6 0 0 0-1-3" stroke="#222" fill="none"/></svg>
<div class="sbtn on" style="left:351px"></div>
<svg class="ic" style="left:354.5px;top:1022.0px;width:16px;height:16px" viewBox="0 0 16 16" ><path d="M2.500 1v13.500h12" stroke="#2a6aa8" stroke-width="1.300" fill="none"/><path d="M2.500 14.500l7-7" stroke="#333" stroke-width="1.200"/><path d="M11 1l-1.500 3h1.300l-1 2.500 3-3.800h-1.300l1-1.700z" fill="#f0a020" stroke="#a06010" stroke-width=".4"/></svg>
<div class="sbtn" style="left:373px"></div>
<svg class="ic" style="left:376.5px;top:1022.0px;width:16px;height:16px" viewBox="0 0 16 16" ><path d="M1 8h6M4 5v6" stroke="#222" stroke-width="1.500"/><rect x="7.500" y="8" width="7" height="4" fill="#fff" stroke="#222"/></svg>
<div class="sbtn" style="left:395px"></div>
<svg class="ic" style="left:398.5px;top:1022.0px;width:16px;height:16px" viewBox="0 0 16 16" ><path d="M1.500 8h13M8 2v12" stroke="#111" stroke-width="2"/></svg>
<div class="sbtn on" style="left:417px"></div>
<svg class="ic" style="left:420.5px;top:1022.0px;width:16px;height:16px" viewBox="0 0 16 16" ><rect x="1.500" y="1.500" width="13" height="13" fill="#5a8ac8" stroke="#2a4a8a"/><path d="M1.500 1.500l13 13M1.500 5l9.500 9.500M5 1.500l9.500 9.500M1.500 9l5.500 5.500M9 1.500l5.500 5.500M14.500 1.500l-13 13M11 1.500l-9.500 9.500M14.500 5l-9.500 9.500" stroke="#cfe0f4" stroke-width=".8"/></svg>
<div class="sbtn" style="left:439px"></div>
<svg class="ic" style="left:442.5px;top:1022.0px;width:16px;height:16px" viewBox="0 0 16 16" ><rect x="3.500" y="2.500" width="9" height="11" fill="#fff" stroke="#222" stroke-width="1.200"/><path d="M5 5.500h6M5 8h6M5 10.500h6M8 5.500v5" stroke="#222" stroke-width=".9"/></svg>
<div class="sbtn" style="left:461px"></div>
<svg class="ic" style="left:464.5px;top:1022.0px;width:16px;height:16px" viewBox="0 0 16 16" ><rect x="1.500" y="1.500" width="5" height="5" fill="none" stroke="#222"/><rect x="6.500" y="6.500" width="8" height="8" fill="#5ab85a" stroke="#1a5a1a"/><path d="M4 0v8M0 4h8" stroke="#222" stroke-width=".9"/></svg>
<div class="abs" style="left:483px;top:1020px;width:1px;height:20px;background:#666"></div>
<div class="abs" id="statusR"></div>
<div class="abs" style="left:1570px;top:1023px;font-size:11.500px;color:#111;letter-spacing:-.6px">MODEL</div>
<svg class="ic" style="left:1613.0px;top:1022.0px;width:16px;height:16px" viewBox="0 0 16 16" ><rect x="1.500" y="1.500" width="13" height="11" fill="#fff" stroke="#222"/><path d="M4 11l0-7 6 7z" fill="#444"/><path d="M1 14.500h14" stroke="#222"/></svg>
<svg class="ic" style="left:1635.0px;top:1022.0px;width:16px;height:16px" viewBox="0 0 16 16" ><rect x="1.500" y="1.500" width="13" height="9" fill="#fff" stroke="#222" stroke-width="1.200"/><path d="M8 1.500v9M1.500 8h13" stroke="#222"/><path d="M1 13.500h14" stroke="#222" stroke-width="1.600"/></svg>
<svg class="ic" style="left:1669.0px;top:1022.0px;width:16px;height:16px" viewBox="0 0 16 16" ><path d="M8 1l1.500 7 5 5.500-1 1-5.500-4-5.500 4-1-1 5-5.500z" fill="#f4f4f4" stroke="#333" stroke-width="1"/></svg>
<svg class="ic" style="left:1721.0px;top:1022.0px;width:16px;height:16px" viewBox="0 0 16 16" ><path d="M7 1l1.500 7 5 5.500-1 1-5.500-4-5.500 4-1-1 5-5.500z" fill="#f4f4f4" stroke="#333" stroke-width="1"/><circle cx="12" cy="11" r="2.200" fill="#8ac0f0" stroke="#2a5a9a" stroke-width=".7"/></svg>
<svg class="ic" style="left:1742.0px;top:1022.0px;width:16px;height:16px" viewBox="0 0 16 16" ><path d="M8 1l1.500 7 5 5.500-1 1-5.500-4-5.500 4-1-1 5-5.500z" fill="#d8d8d8" stroke="#999" stroke-width="1"/></svg>
<svg class="ic" style="left:1770.0px;top:1022.0px;width:16px;height:16px" viewBox="0 0 16 16" ><g fill="none" stroke="#3a3a3a" stroke-width="1.1" stroke-linejoin="round" stroke-linecap="round"><circle cx="8" cy="8" r="2.300"/><path d="M8 1.500l1.200.2.500 1.800 1.300.6 1.600-.9 1.500 1.500-.9 1.600.6 1.300 1.800.5v2l-1.800.5-.6 1.300.9 1.600-1.500 1.500-1.600-.9-1.300.6-.5 1.800h-2l-.5-1.800-1.300-.6-1.600.9-1.500-1.500.9-1.600-.6-1.300-1.800-.5v-2l1.800-.5.600-1.300-.9-1.600 1.500-1.500 1.600.9 1.300-.6.500-1.800z" transform="translate(.8 .8) scale(.9)"/></g></svg>
<svg class="ic" style="left:1792.0px;top:1022.0px;width:16px;height:16px" viewBox="0 0 16 16" ><rect x="2.500" y="8" width="8" height="6.500" fill="#fff" stroke="#222" stroke-width="1.200"/><path d="M8.500 8v-3a2.500 2.500 0 0 1 5 0v1.500" fill="none" stroke="#222" stroke-width="1.500"/><rect x="5.500" y="10" width="2" height="2.500" fill="#222"/></svg>
<svg class="ic" style="left:1814.0px;top:1022.0px;width:16px;height:16px" viewBox="0 0 16 16" ><rect x="1.500" y="3.500" width="10" height="7" fill="#fff" stroke="#444"/><path d="M3 2v2M6 2v2M9 2v2" stroke="#444"/><path d="M11 8c-1.500 0-2.500 1-2.500 2.300 0 1 .7 1.500 1 2.200h3c.3-.7 1-1.200 1-2.200 0-1.300-1-2.300-2.500-2.300z" fill="#f8e27a" stroke="#5a5020" stroke-width=".7"/><rect x="9.800" y="12.500" width="2.400" height="2" fill="#bbb" stroke="#444" stroke-width=".5"/></svg>
<svg class="ic" style="left:1839.0px;top:1022.0px;width:16px;height:16px" viewBox="0 0 16 16" ><rect x="1" y="1" width="14" height="14" fill="#e8d060" stroke="#6a5a10" stroke-width=".8"/><rect x="2" y="2" width="7" height="6" fill="#3a7ad0"/><path d="M6 10l3 3.500 5.500-7" stroke="#2a9a2a" stroke-width="2.200" fill="none"/></svg>
<svg class="ic" style="left:1860.0px;top:1022.0px;width:16px;height:16px" viewBox="0 0 16 16" ><path d="M8 1.500c-2.800 0-4.500 2-4.500 4.300 0 1.700 1.200 2.700 1.900 4.200h5.200c.7-1.500 1.900-2.500 1.900-4.200 0-2.300-1.700-4.300-4.500-4.300z" fill="#f8e27a" stroke="#5a5020" stroke-width="1"/><rect x="5.800" y="10.500" width="4.400" height="3.500" rx=".8" fill="#bbb" stroke="#444" stroke-width=".8"/></svg>
<svg class="ic" style="left:1900.0px;top:1022.0px;width:16px;height:16px" viewBox="0 0 16 16" ><rect x="1.500" y="1.500" width="13" height="13" fill="#fff" stroke="#222" stroke-width="1.200"/><path d="M1.500 4h13" stroke="#222" stroke-width="1.400"/></svg>
<div class="abs" style="left:1688px;top:1023px;font-size:12px;color:#111">1:1</div><svg class="abs" style="left:1704px;top:1026px" width="9" height="6"><path d="M0 0h8l-4 5z" fill="#111"/></svg>
<svg class="abs" style="left:1887px;top:1029px" width="9" height="6"><path d="M0 0h8l-4 5z" fill="#111"/></svg>
<div class="abs" style="left:1609px;top:1021px;width:1px;height:19px;background:#8a8a8a"></div>
<div class="abs" style="left:1632px;top:1021px;width:1px;height:19px;background:#8a8a8a"></div>
<div class="abs" style="left:1655px;top:1021px;width:1px;height:19px;background:#8a8a8a"></div>
<div class="abs" style="left:1665px;top:1021px;width:1px;height:19px;background:#8a8a8a"></div>
<div class="abs" style="left:1716px;top:1021px;width:1px;height:19px;background:#8a8a8a"></div>
<div class="abs" style="left:1739px;top:1021px;width:1px;height:19px;background:#8a8a8a"></div>
<div class="abs" style="left:1762px;top:1021px;width:1px;height:19px;background:#8a8a8a"></div>
<div class="abs" style="left:1766px;top:1021px;width:1px;height:19px;background:#8a8a8a"></div>
<div class="abs" style="left:1789px;top:1021px;width:1px;height:19px;background:#8a8a8a"></div>
<div class="abs" style="left:1811px;top:1021px;width:1px;height:19px;background:#8a8a8a"></div>
<div class="abs" style="left:1833px;top:1021px;width:1px;height:19px;background:#8a8a8a"></div>
<div class="abs" style="left:1880px;top:1021px;width:1px;height:19px;background:#8a8a8a"></div>
<div class="abs" style="left:1897px;top:1021px;width:1px;height:19px;background:#8a8a8a"></div>
<div class="abs" style="left:1656px;top:1020px;width:9px;height:20px;background:#8c8c8c"></div>
<div class="abs" style="left:1833px;top:1020px;width:47px;height:20px;background:linear-gradient(#b4b4b4,#9a9a9a)"></div>
<svg class="ic" style="left:1839.0px;top:1022.0px;width:16px;height:16px" viewBox="0 0 16 16" ><rect x="1" y="1" width="14" height="14" fill="#e8d060" stroke="#6a5a10" stroke-width=".8"/><rect x="2" y="2" width="7" height="6" fill="#3a7ad0"/><path d="M6 10l3 3.500 5.500-7" stroke="#2a9a2a" stroke-width="2.200" fill="none"/></svg>
<svg class="ic" style="left:1860.0px;top:1022.0px;width:16px;height:16px" viewBox="0 0 16 16" ><path d="M8 1.500c-2.800 0-4.500 2-4.500 4.300 0 1.700 1.200 2.700 1.900 4.200h5.200c.7-1.500 1.900-2.500 1.900-4.200 0-2.300-1.700-4.300-4.500-4.300z" fill="#f8e27a" stroke="#5a5020" stroke-width="1"/><rect x="5.800" y="10.500" width="4.400" height="3.500" rx=".8" fill="#bbb" stroke="#444" stroke-width=".8"/></svg></body></html>
